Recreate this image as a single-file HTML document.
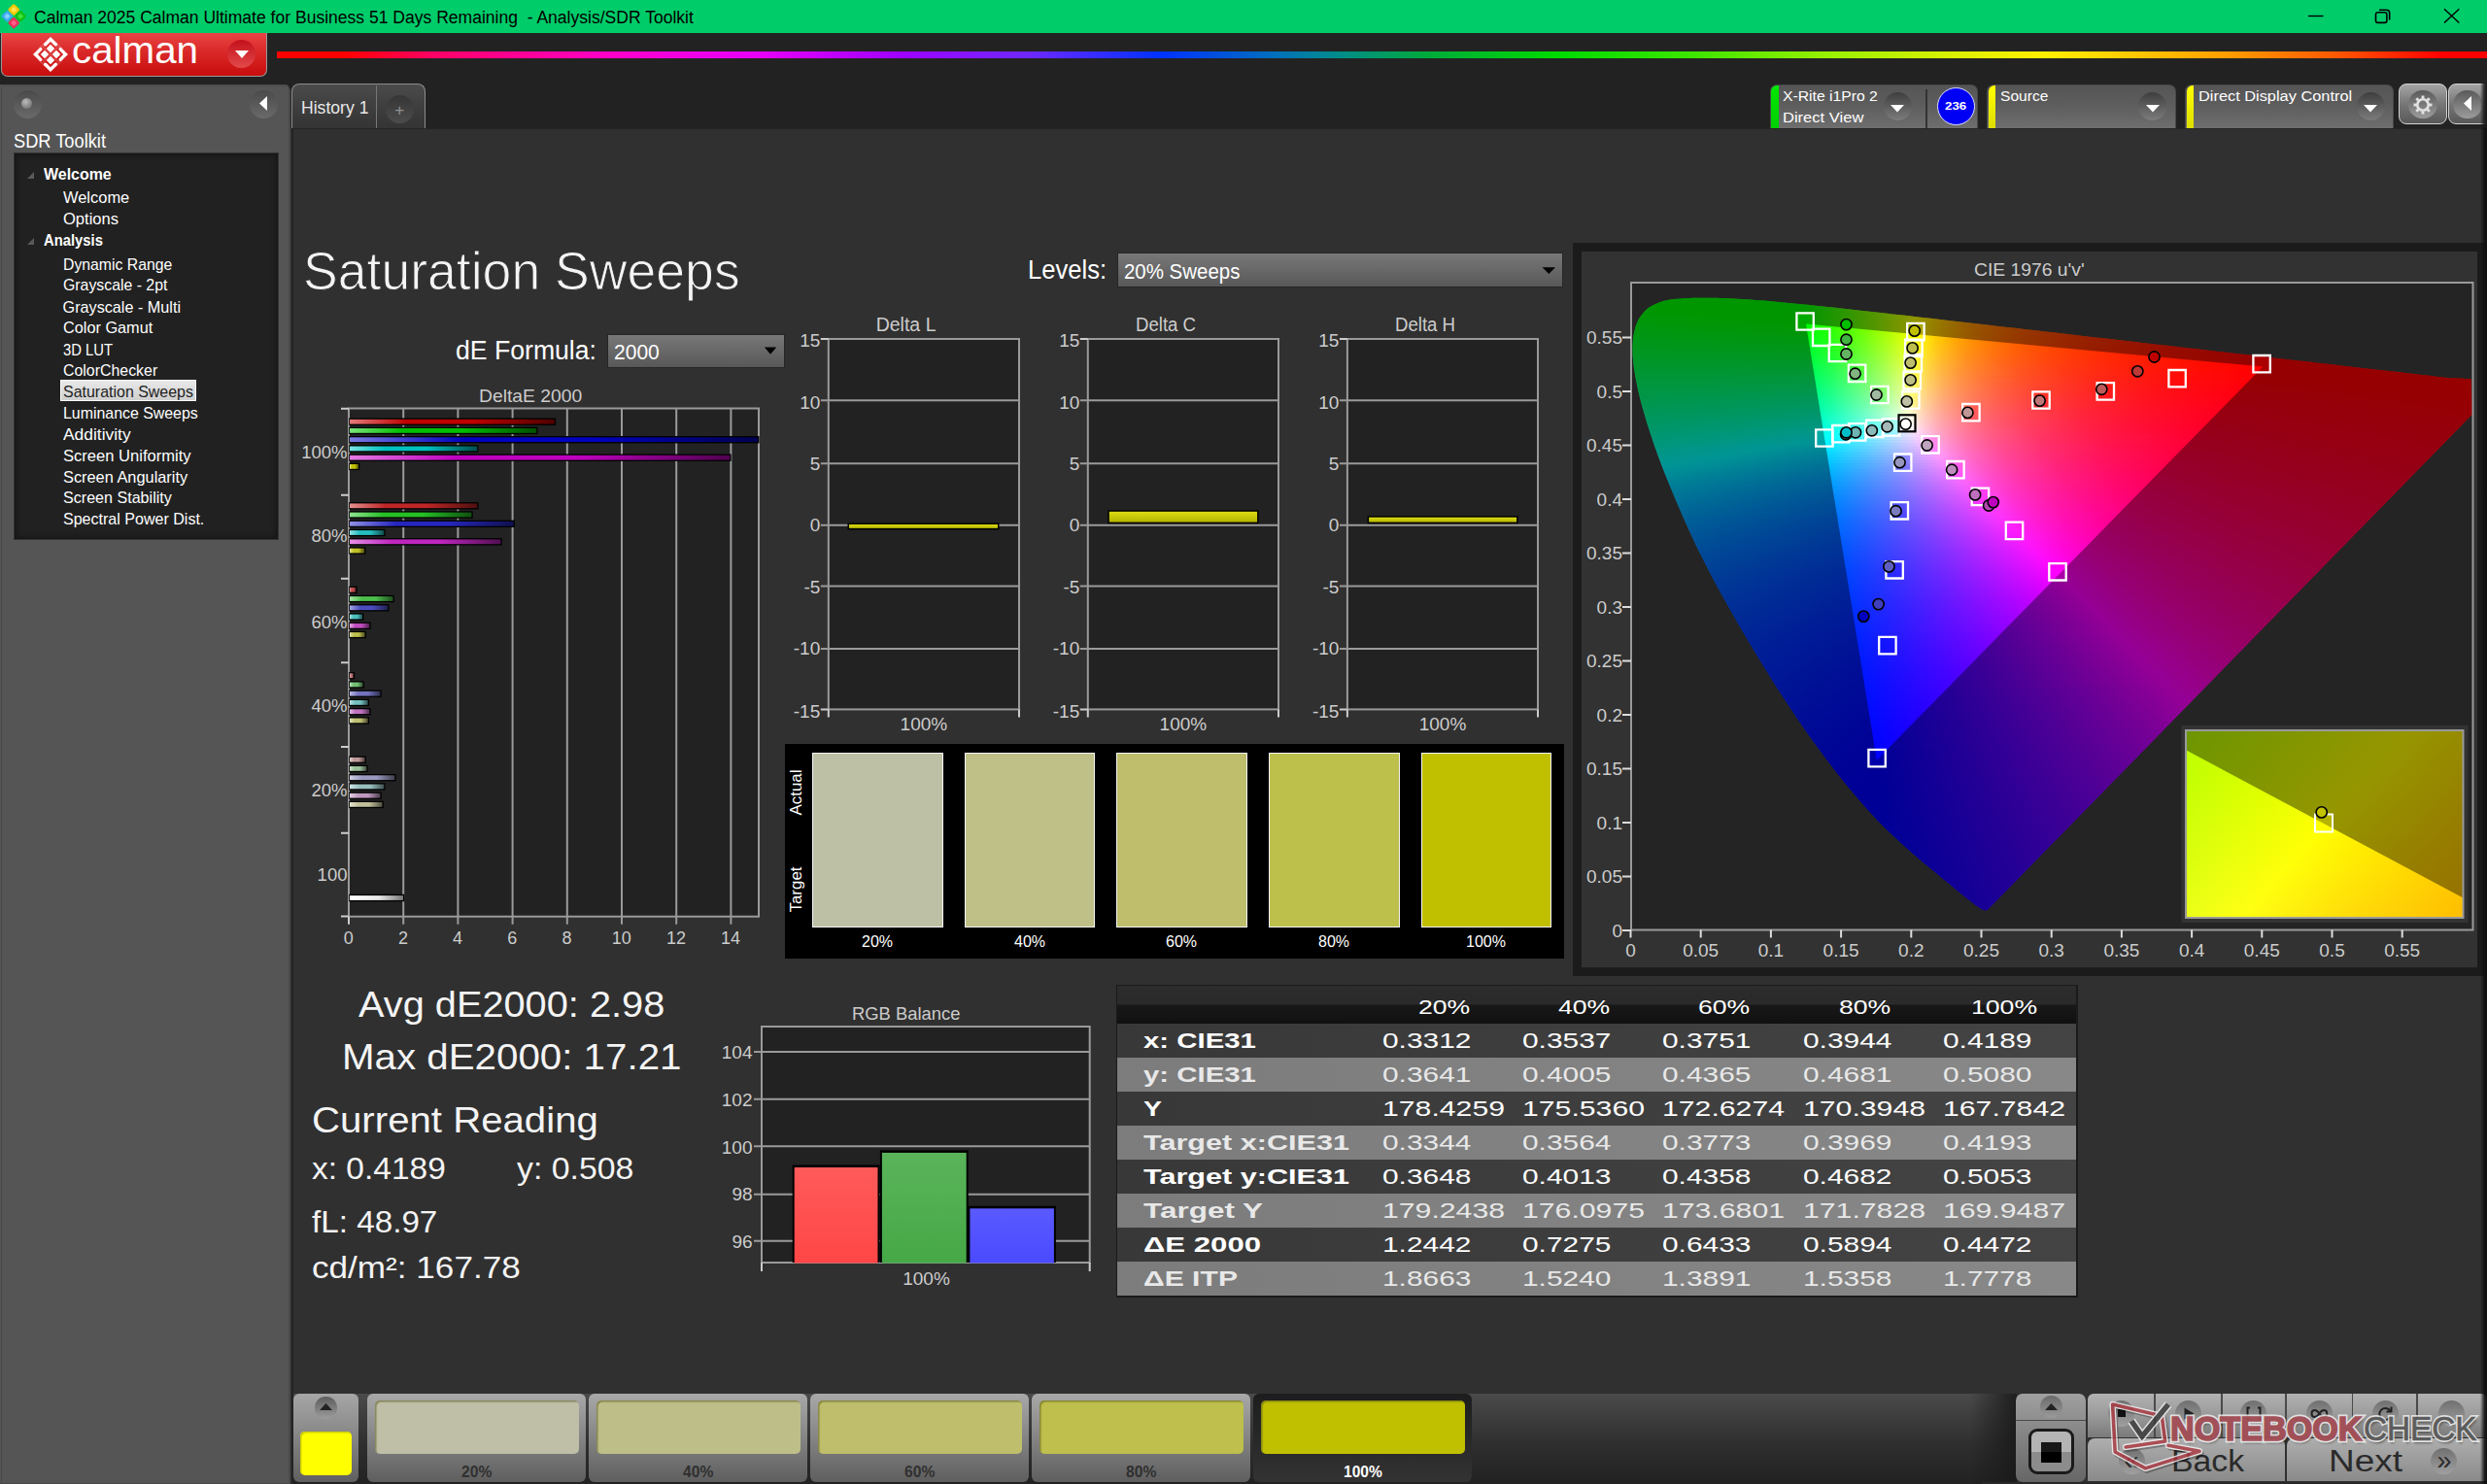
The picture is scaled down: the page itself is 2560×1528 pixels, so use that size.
<!DOCTYPE html>
<html><head><meta charset="utf-8"><title>Calman</title><style>html,body{margin:0;padding:0;background:#303030}
body{width:2560px;height:1528px;position:relative;overflow:hidden;font-family:"Liberation Sans",sans-serif}
.a{position:absolute;display:block}
.t{position:absolute;white-space:nowrap;line-height:1;transform-origin:0 0}
</style></head><body>
<div class="a" style="left:0px;top:0px;width:2560px;height:34px;background:#00cc6a;"></div>
<svg class="a" style="left:0;top:0" width="30" height="34" viewBox="0 0 30 34"><rect x="-4.5" y="-4.5" width="9" height="9" rx="1.6" transform="translate(7.4 16.7) rotate(45)" fill="#3aa8f0"/><rect x="-2.3" y="-2.3" width="4.6" height="4.6" rx="1" transform="translate(7.4 16.7) rotate(45)" fill="#7fd0ff"/><rect x="-4.5" y="-4.5" width="9" height="9" rx="1.6" transform="translate(21 16.7) rotate(45)" fill="#10c010"/><rect x="-2.3" y="-2.3" width="4.6" height="4.6" rx="1" transform="translate(21 16.7) rotate(45)" fill="#3ee03e"/><rect x="-4.5" y="-4.5" width="9" height="9" rx="1.6" transform="translate(14.2 10) rotate(45)" fill="#f8c800"/><rect x="-2.3" y="-2.3" width="4.6" height="4.6" rx="1" transform="translate(14.2 10) rotate(45)" fill="#ffe050"/><rect x="-4.5" y="-4.5" width="9" height="9" rx="1.6" transform="translate(14.2 23.6) rotate(45)" fill="#e8305e"/><rect x="-2.3" y="-2.3" width="4.6" height="4.6" rx="1" transform="translate(14.2 23.6) rotate(45)" fill="#ff6088"/></svg>
<span class="t" style="left:35.3px;top:8.5px;font-size:18px;color:#000;transform:scaleX(0.974);white-space:pre;">Calman 2025 Calman Ultimate for Business 51 Days Remaining  - Analysis/SDR Toolkit</span>
<svg class="a" style="left:2360px;top:0" width="200" height="34" viewBox="2360 0 200 34" fill="none" stroke="#000" stroke-width="1.4"><path d="M2376 16.5H2391.5"/><rect x="2445.5" y="12.8" width="11.4" height="10.6" rx="2.2" stroke-width="1.6"/><path d="M2449 10.2H2456.5a3.2 3.2 0 0 1 3.2 3.2V20.6" stroke-width="1.6"/><path d="M2516 9.2L2531.3 23.6M2531.3 9.2L2516 23.6"/></svg>
<div class="a" style="left:0px;top:34px;width:2560px;height:98px;background:#222;"></div>
<div class="a" style="left:1px;top:34px;width:274px;height:45px;background:linear-gradient(#e94444,#d92828 45%,#c80d0d);border:1px solid #999;border-top:none;border-radius:0 0 7px 7px;box-sizing:border-box;"></div>
<svg class="a" style="left:29.6px;top:34.5px" width="44" height="42" viewBox="-22 -21 44 42"><path d="M-5.4 -10.2L0 -15.6L5.4 -10.2M-5.4 10.2L0 15.6L5.4 10.2M-10.2 -5.4L-15.6 0L-10.2 5.4M10.2 -5.4L15.6 0L10.2 5.4" fill="none" stroke="#fff" stroke-width="3.4" stroke-linecap="round" stroke-linejoin="miter"/><path d="M0 -9.9L3.9 -6L0 -2.1L-3.9 -6Z" fill="#fff" stroke="#fff" stroke-width=".6" stroke-linejoin="round"/><path d="M0 2.1L3.9 6L0 9.9L-3.9 6Z" fill="#fff" stroke="#fff" stroke-width=".6" stroke-linejoin="round"/><path d="M-6 -3.9L-2.1 0L-6 3.9L-9.9 0Z" fill="#fff" stroke="#fff" stroke-width=".6" stroke-linejoin="round"/><path d="M6 -3.9L9.9 0L6 3.9L2.1 0Z" fill="#fff" stroke="#fff" stroke-width=".6" stroke-linejoin="round"/><path d="M-9 -9L9 9M-9 9L9 -9M-12 -6L-6 -12M6 -12L12 -6M-12 6L-6 12M6 12L12 6" stroke="#fff" stroke-opacity=".18" stroke-width="1.2"/></svg>
<span class="t" style="left:73.5px;top:32.2px;font-size:39.5px;color:#fff;transform:scaleX(1.021);">calman</span>
<div class="a" style="left:234.2px;top:40.6px;width:29px;height:29px;background:linear-gradient(#c4101c,#e24a4a);border-radius:50%;"></div>
<svg class="a" style="left:241.7px;top:51.6px" width="14" height="8"><path d="M0 0H14L7 8Z" fill="#fff"/></svg>
<div class="a" style="left:285px;top:52.6px;width:2275px;height:7.4px;background:linear-gradient(90deg,#f00 0,#f00 3%,#ff0064 7%,#ff00c8 15%,#e600ff 22%,#a000ff 28%,#6e28ff 34%,#0032ff 40%,#006ebe 45%,#008c8c 48%,#00aa3c 52%,#00dc00 58%,#3ce600 64%,#96f000 70%,#dcf000 76%,#fff000 80%,#ffa000 88%,#ff5a00 93%,#f00 98%);"></div>
<div class="a" style="left:0px;top:86.5px;width:299px;height:1441.5px;background:#555;border-radius:0 7px 0 0;border-right:2px solid #4a4a4a;box-sizing:border-box;"></div>
<div class="a" style="left:1.2px;top:88px;width:1px;height:1438.6px;background:#474747;"></div>
<div class="a" style="left:0px;top:1526.6px;width:299px;height:1.4px;background:#474747;"></div>
<div class="a" style="left:1px;top:86.5px;width:296px;height:3px;background:linear-gradient(#4a4a4a,#555);border-radius:0 7px 0 0;"></div>
<div class="a" style="left:13.8px;top:92.7px;width:29px;height:29px;background:linear-gradient(#4a4a4a,#6a6a6a);border-radius:50%;"></div>
<div class="a" style="left:22.3px;top:100.8px;width:11px;height:11px;background:radial-gradient(circle at 40% 35%,#bbb,#888 55%,#666);border-radius:50%;"></div>
<div class="a" style="left:256.9px;top:92.7px;width:29px;height:29px;background:linear-gradient(#4a4a4a,#6a6a6a);border-radius:50%;"></div>
<svg class="a" style="left:267px;top:99.3px" width="8" height="15"><path d="M8 0V15L0 7.5Z" fill="#fff"/></svg>
<span class="t" style="left:14.0px;top:134.6px;font-size:20px;color:#fff;transform:scaleX(0.912);">SDR Toolkit</span>
<div class="a" style="left:14px;top:157px;width:273px;height:399px;background:#212121;box-shadow:inset 0 0 5px 2px #161616;border:1px solid #333;box-sizing:border-box;"></div>
<svg class="a" style="left:28px;top:177.0px" width="7" height="7"><path d="M7 0V7H0Z" fill="#595959"/></svg>
<svg class="a" style="left:28px;top:245.2px" width="7" height="7"><path d="M7 0V7H0Z" fill="#595959"/></svg>
<div class="a" style="left:61.7px;top:391px;width:140.6px;height:22.2px;background:linear-gradient(#e8e8e8,#d0d0d0);border:1px solid #fff;box-sizing:border-box;"></div>
<span class="t" style="left:45.0px;top:171.2px;font-size:16.2px;color:#fff;font-weight:bold;transform:scaleX(0.985);">Welcome</span>
<span class="t" style="left:64.6px;top:195.2px;font-size:16.2px;color:#fff;transform:scaleX(1.016);">Welcome</span>
<span class="t" style="left:64.6px;top:217.1px;font-size:16.2px;color:#fff;transform:scaleX(1.021);">Options</span>
<span class="t" style="left:45.0px;top:239.3px;font-size:16.2px;color:#fff;font-weight:bold;transform:scaleX(0.914);">Analysis</span>
<span class="t" style="left:64.6px;top:263.7px;font-size:16.2px;color:#fff;transform:scaleX(0.975);">Dynamic Range</span>
<span class="t" style="left:64.6px;top:285.3px;font-size:16.2px;color:#fff;transform:scaleX(0.978);">Grayscale - 2pt</span>
<span class="t" style="left:64.6px;top:307.6px;font-size:16.2px;color:#fff;">Grayscale - Multi</span>
<span class="t" style="left:64.6px;top:329.2px;font-size:16.2px;color:#fff;transform:scaleX(1.005);">Color Gamut</span>
<span class="t" style="left:64.6px;top:351.5px;font-size:16.2px;color:#fff;transform:scaleX(0.916);">3D LUT</span>
<span class="t" style="left:64.6px;top:373.4px;font-size:16.2px;color:#fff;transform:scaleX(0.982);">ColorChecker</span>
<span class="t" style="left:64.6px;top:395.1px;font-size:16.2px;color:#222;transform:scaleX(0.986);">Saturation Sweeps</span>
<span class="t" style="left:64.6px;top:417.3px;font-size:16.2px;color:#fff;transform:scaleX(0.982);">Luminance Sweeps</span>
<span class="t" style="left:64.6px;top:439.0px;font-size:16.2px;color:#fff;transform:scaleX(1.075);">Additivity</span>
<span class="t" style="left:64.6px;top:461.2px;font-size:16.2px;color:#fff;transform:scaleX(1.023);">Screen Uniformity</span>
<span class="t" style="left:64.6px;top:482.6px;font-size:16.2px;color:#fff;transform:scaleX(1.010);">Screen Angularity</span>
<span class="t" style="left:64.6px;top:504.2px;font-size:16.2px;color:#fff;transform:scaleX(0.994);">Screen Stability</span>
<span class="t" style="left:64.6px;top:526.4px;font-size:16.2px;color:#fff;transform:scaleX(0.991);">Spectral Power Dist.</span>
<div class="a" style="left:300px;top:85.8px;width:138px;height:46.2px;background:linear-gradient(#4b4b4b,#3c3c3c 60%,#343434);border:1.5px solid #8c8c8c;border-bottom:none;border-radius:8px 8px 0 0;box-sizing:border-box;"></div>
<div class="a" style="left:386.7px;top:87.5px;width:1.5px;height:44.5px;background:#777;"></div>
<span class="t" style="left:309.6px;top:100.9px;font-size:19px;color:#e8e8e8;transform:scaleX(0.926);">History 1</span>
<div class="a" style="left:396.7px;top:97.7px;width:29px;height:29px;background:linear-gradient(#363636,#4c4c4c);border-radius:50%;"></div>
<span class="t" style="left:406.3px;top:104.8px;font-size:17px;color:#909090;">+</span>
<div class="a" style="left:300px;top:132px;width:2260px;height:1396px;background:#303030;"></div>
<div class="a" style="left:300px;top:131.5px;width:2260px;height:1.8px;background:#242424;"></div>
<div class="a" style="left:300px;top:132px;width:1.6px;height:1396px;background:#242424;"></div>
<div class="a" style="left:1821.5px;top:87px;width:214.3px;height:45px;background:linear-gradient(#555,#5c5c5c 40%,#6e6e6e);border-radius:7px 7px 0 0;border:1px solid #484848;border-bottom:none;box-sizing:border-box;"></div><div class="a" style="left:1823px;top:88px;width:7.5px;height:44px;background:linear-gradient(#00e800,#00d000);border-radius:6px 0 0 0;"></div><span class="t" style="left:1835.1px;top:90.8px;font-size:15.3px;color:#fff;transform:scaleX(1.027);">X-Rite i1Pro 2</span><span class="t" style="left:1835.1px;top:112.6px;font-size:15.3px;color:#fff;transform:scaleX(1.081);">Direct View</span><div class="a" style="left:1938.7px;top:94.5px;width:29px;height:29px;background:linear-gradient(#3e3e3e,#7c7c7c);border-radius:50%;"></div><svg class="a" style="left:1946.2px;top:107.5px" width="14" height="8"><path d="M0 0H14L7 7.6Z" fill="#fff"/></svg>
<div class="a" style="left:1981.8px;top:92px;width:2px;height:40px;background:#333;"></div>
<div class="a" style="left:1993.7px;top:89.5px;width:39px;height:39px;background:#0000f4;border-radius:50%;border:1.5px solid #e0e0ff;box-sizing:border-box;"></div>
<span class="t" style="left:2002.3px;top:103.5px;font-size:11.5px;color:#fff;font-weight:bold;transform:scaleX(1.157);">236</span>
<div class="a" style="left:2045.3px;top:87px;width:194.6px;height:45px;background:linear-gradient(#555,#5c5c5c 40%,#6e6e6e);border-radius:7px 7px 0 0;border:1px solid #484848;border-bottom:none;box-sizing:border-box;"></div><div class="a" style="left:2046.8px;top:88px;width:7.5px;height:44px;background:linear-gradient(#ffff00,#dede00);border-radius:6px 0 0 0;"></div><span class="t" style="left:2058.9px;top:90.8px;font-size:15.3px;color:#fff;transform:scaleX(1.019);">Source</span><div class="a" style="left:2201.2px;top:94.5px;width:29px;height:29px;background:linear-gradient(#3e3e3e,#7c7c7c);border-radius:50%;"></div><svg class="a" style="left:2208.7px;top:107.5px" width="14" height="8"><path d="M0 0H14L7 7.6Z" fill="#fff"/></svg>
<div class="a" style="left:2249px;top:87px;width:215.2px;height:45px;background:linear-gradient(#555,#5c5c5c 40%,#6e6e6e);border-radius:7px 7px 0 0;border:1px solid #484848;border-bottom:none;box-sizing:border-box;"></div><div class="a" style="left:2250.5px;top:88px;width:7.5px;height:44px;background:linear-gradient(#ffff00,#dede00);border-radius:6px 0 0 0;"></div><span class="t" style="left:2262.6px;top:90.8px;font-size:15.3px;color:#fff;transform:scaleX(1.069);">Direct Display Control</span><div class="a" style="left:2425.5px;top:94.5px;width:29px;height:29px;background:linear-gradient(#3e3e3e,#7c7c7c);border-radius:50%;"></div><svg class="a" style="left:2433px;top:107.5px" width="14" height="8"><path d="M0 0H14L7 7.6Z" fill="#fff"/></svg>
<div class="a" style="left:2468.8px;top:86.4px;width:50px;height:41.9px;background:linear-gradient(#a4a4a4,#777 50%,#585858);border:1.7px solid #d2d2d2;border-radius:8px;box-sizing:border-box;"></div>
<div class="a" style="left:2479.4px;top:92.8px;width:29.4px;height:29.4px;background:linear-gradient(#5a5a5a,#9c9c9c);border-radius:50%;"></div>
<svg class="a" style="left:2484.1px;top:97.5px" width="20" height="20" viewBox="-10 -10 20 20"><g fill="none" stroke="#e2e2e2"><circle r="5.75" stroke-width="2.7"/><g stroke-width="2.9"><path d="M0 -6.6V-9.5" transform="rotate(0)"/><path d="M0 -6.6V-9.5" transform="rotate(45)"/><path d="M0 -6.6V-9.5" transform="rotate(90)"/><path d="M0 -6.6V-9.5" transform="rotate(135)"/><path d="M0 -6.6V-9.5" transform="rotate(180)"/><path d="M0 -6.6V-9.5" transform="rotate(225)"/><path d="M0 -6.6V-9.5" transform="rotate(270)"/><path d="M0 -6.6V-9.5" transform="rotate(315)"/></g></g></svg>
<div class="a" style="left:2520px;top:86.4px;width:50px;height:41.9px;background:linear-gradient(#a4a4a4,#777 50%,#585858);border:1.7px solid #d2d2d2;border-radius:8px;box-sizing:border-box;"></div>
<div class="a" style="left:2525.3px;top:92.8px;width:29.4px;height:29.4px;background:linear-gradient(#5a5a5a,#9c9c9c);border-radius:50%;"></div>
<svg class="a" style="left:2536.2px;top:99px" width="8" height="15"><path d="M8 0V15L0 7.5Z" fill="#fff"/></svg>
<div class="a" style="left:2552.5px;top:85px;width:7.5px;height:47px;background:linear-gradient(90deg,rgba(24,24,24,0),rgba(24,24,24,.8) 55%,#161616);"></div>
<div class="a" style="left:1149.5px;top:260px;width:459.5px;height:35.5px;background:linear-gradient(#787878,#585858);border:1.5px solid #262626;box-sizing:border-box;"></div>
<div class="a" style="left:625px;top:343.5px;width:182.5px;height:35px;background:linear-gradient(#787878,#585858);border:1.5px solid #262626;box-sizing:border-box;"></div>
<svg class="a" style="left:0;top:0" width="2560" height="1528" viewBox="0 0 2560 1528"><defs><linearGradient id="b00"><stop offset="0" stop-color="#e47b7b"/><stop offset=".28" stop-color="#bf0000"/><stop offset=".6" stop-color="#bf0000"/><stop offset="1" stop-color="#500000"/></linearGradient><linearGradient id="b01"><stop offset="0" stop-color="#7be47b"/><stop offset=".28" stop-color="#00bf00"/><stop offset=".6" stop-color="#00bf00"/><stop offset="1" stop-color="#005000"/></linearGradient><linearGradient id="b02"><stop offset="0" stop-color="#7b7be4"/><stop offset=".28" stop-color="#0000bf"/><stop offset=".6" stop-color="#0000bf"/><stop offset="1" stop-color="#000050"/></linearGradient><linearGradient id="b03"><stop offset="0" stop-color="#7be4e4"/><stop offset=".28" stop-color="#00bfbf"/><stop offset=".6" stop-color="#00bfbf"/><stop offset="1" stop-color="#005050"/></linearGradient><linearGradient id="b04"><stop offset="0" stop-color="#e47be4"/><stop offset=".28" stop-color="#bf00bf"/><stop offset=".6" stop-color="#bf00bf"/><stop offset="1" stop-color="#500050"/></linearGradient><linearGradient id="b05"><stop offset="0" stop-color="#e4e47b"/><stop offset=".28" stop-color="#bfbf00"/><stop offset=".6" stop-color="#bfbf00"/><stop offset="1" stop-color="#505000"/></linearGradient><linearGradient id="b10"><stop offset="0" stop-color="#e49090"/><stop offset=".28" stop-color="#bf2626"/><stop offset=".6" stop-color="#bf2626"/><stop offset="1" stop-color="#501010"/></linearGradient><linearGradient id="b11"><stop offset="0" stop-color="#90e490"/><stop offset=".28" stop-color="#26bf26"/><stop offset=".6" stop-color="#26bf26"/><stop offset="1" stop-color="#105010"/></linearGradient><linearGradient id="b12"><stop offset="0" stop-color="#9090e4"/><stop offset=".28" stop-color="#2626bf"/><stop offset=".6" stop-color="#2626bf"/><stop offset="1" stop-color="#101050"/></linearGradient><linearGradient id="b13"><stop offset="0" stop-color="#90e4e4"/><stop offset=".28" stop-color="#26bfbf"/><stop offset=".6" stop-color="#26bfbf"/><stop offset="1" stop-color="#105050"/></linearGradient><linearGradient id="b14"><stop offset="0" stop-color="#e490e4"/><stop offset=".28" stop-color="#bf26bf"/><stop offset=".6" stop-color="#bf26bf"/><stop offset="1" stop-color="#501050"/></linearGradient><linearGradient id="b15"><stop offset="0" stop-color="#e4e490"/><stop offset=".28" stop-color="#bfbf26"/><stop offset=".6" stop-color="#bfbf26"/><stop offset="1" stop-color="#505010"/></linearGradient><linearGradient id="b20"><stop offset="0" stop-color="#e4a5a5"/><stop offset=".28" stop-color="#bf4c4c"/><stop offset=".6" stop-color="#bf4c4c"/><stop offset="1" stop-color="#502020"/></linearGradient><linearGradient id="b21"><stop offset="0" stop-color="#a5e4a5"/><stop offset=".28" stop-color="#4cbf4c"/><stop offset=".6" stop-color="#4cbf4c"/><stop offset="1" stop-color="#205020"/></linearGradient><linearGradient id="b22"><stop offset="0" stop-color="#a5a5e4"/><stop offset=".28" stop-color="#4c4cbf"/><stop offset=".6" stop-color="#4c4cbf"/><stop offset="1" stop-color="#202050"/></linearGradient><linearGradient id="b23"><stop offset="0" stop-color="#a5e4e4"/><stop offset=".28" stop-color="#4cbfbf"/><stop offset=".6" stop-color="#4cbfbf"/><stop offset="1" stop-color="#205050"/></linearGradient><linearGradient id="b24"><stop offset="0" stop-color="#e4a5e4"/><stop offset=".28" stop-color="#bf4cbf"/><stop offset=".6" stop-color="#bf4cbf"/><stop offset="1" stop-color="#502050"/></linearGradient><linearGradient id="b25"><stop offset="0" stop-color="#e4e4a5"/><stop offset=".28" stop-color="#bfbf4c"/><stop offset=".6" stop-color="#bfbf4c"/><stop offset="1" stop-color="#505020"/></linearGradient><linearGradient id="b30"><stop offset="0" stop-color="#e4baba"/><stop offset=".28" stop-color="#bf7373"/><stop offset=".6" stop-color="#bf7373"/><stop offset="1" stop-color="#503030"/></linearGradient><linearGradient id="b31"><stop offset="0" stop-color="#bae4ba"/><stop offset=".28" stop-color="#73bf73"/><stop offset=".6" stop-color="#73bf73"/><stop offset="1" stop-color="#305030"/></linearGradient><linearGradient id="b32"><stop offset="0" stop-color="#babae4"/><stop offset=".28" stop-color="#7373bf"/><stop offset=".6" stop-color="#7373bf"/><stop offset="1" stop-color="#303050"/></linearGradient><linearGradient id="b33"><stop offset="0" stop-color="#bae4e4"/><stop offset=".28" stop-color="#73bfbf"/><stop offset=".6" stop-color="#73bfbf"/><stop offset="1" stop-color="#305050"/></linearGradient><linearGradient id="b34"><stop offset="0" stop-color="#e4bae4"/><stop offset=".28" stop-color="#bf73bf"/><stop offset=".6" stop-color="#bf73bf"/><stop offset="1" stop-color="#503050"/></linearGradient><linearGradient id="b35"><stop offset="0" stop-color="#e4e4ba"/><stop offset=".28" stop-color="#bfbf73"/><stop offset=".6" stop-color="#bfbf73"/><stop offset="1" stop-color="#505030"/></linearGradient><linearGradient id="b40"><stop offset="0" stop-color="#e4cfcf"/><stop offset=".28" stop-color="#bf9999"/><stop offset=".6" stop-color="#bf9999"/><stop offset="1" stop-color="#504040"/></linearGradient><linearGradient id="b41"><stop offset="0" stop-color="#cfe4cf"/><stop offset=".28" stop-color="#99bf99"/><stop offset=".6" stop-color="#99bf99"/><stop offset="1" stop-color="#405040"/></linearGradient><linearGradient id="b42"><stop offset="0" stop-color="#cfcfe4"/><stop offset=".28" stop-color="#9999bf"/><stop offset=".6" stop-color="#9999bf"/><stop offset="1" stop-color="#404050"/></linearGradient><linearGradient id="b43"><stop offset="0" stop-color="#cfe4e4"/><stop offset=".28" stop-color="#99bfbf"/><stop offset=".6" stop-color="#99bfbf"/><stop offset="1" stop-color="#405050"/></linearGradient><linearGradient id="b44"><stop offset="0" stop-color="#e4cfe4"/><stop offset=".28" stop-color="#bf99bf"/><stop offset=".6" stop-color="#bf99bf"/><stop offset="1" stop-color="#504050"/></linearGradient><linearGradient id="b45"><stop offset="0" stop-color="#e4e4cf"/><stop offset=".28" stop-color="#bfbf99"/><stop offset=".6" stop-color="#bfbf99"/><stop offset="1" stop-color="#505040"/></linearGradient><linearGradient id="bw"><stop offset="0" stop-color="#fff"/><stop offset=".55" stop-color="#e8e8e8"/><stop offset="1" stop-color="#777"/></linearGradient><linearGradient id="yb" x1="0" y1="0" x2="0" y2="1"><stop offset="0" stop-color="#dcdc14"/><stop offset="1" stop-color="#b4b400"/></linearGradient><linearGradient id="rgff5a" x1="0" y1="0" x2="0" y2="1"><stop offset="0" stop-color="#ff5a5a"/><stop offset="1" stop-color="#ff4646"/></linearGradient><linearGradient id="rg5ab4" x1="0" y1="0" x2="0" y2="1"><stop offset="0" stop-color="#5ab45a"/><stop offset="1" stop-color="#46a846"/></linearGradient><linearGradient id="rg5a5a" x1="0" y1="0" x2="0" y2="1"><stop offset="0" stop-color="#5a5aff"/><stop offset="1" stop-color="#4a4aff"/></linearGradient></defs><path d="M1587.6 275.2H1601L1594.3 282Z" fill="#000"/><path d="M786.9 357.4H799.2L793.1 364.8Z" fill="#000"/><rect x="359" y="420.5" width="422" height="523.2" fill="#222"/><path d="M415.2 420.5V951.7M471.4 420.5V951.7M527.6 420.5V951.7M583.8 420.5V951.7M640.0 420.5V951.7M696.2 420.5V951.7M752.4 420.5V951.7" stroke="#9a9a9a" stroke-width="2" fill="none"/><rect x="359" y="420.5" width="422" height="523.2" fill="none" stroke="#9a9a9a" stroke-width="2"/><path d="M359 943.7V951.7" stroke="#ccc" stroke-width="2"/><path d="M351 420.8H359M351 509.8H359M351 595.8H359M351 682.3H359M351 769.1H359M351 857.7H359M351 943.4H359" stroke="#ccc" stroke-width="2" fill="none"/><rect x="359.2" y="430.5" width="212.9" height="7.4" fill="#000"/><rect x="360" y="431.8" width="210.8" height="4.8" fill="url(#b00)"/><rect x="359.2" y="439.7" width="194.3" height="7.4" fill="#000"/><rect x="360" y="441.0" width="192.2" height="4.8" fill="url(#b01)"/><rect x="359.2" y="449.0" width="422.3" height="7.4" fill="#000"/><rect x="360" y="450.3" width="420.2" height="4.8" fill="url(#b02)"/><rect x="359.2" y="458.2" width="133.3" height="7.4" fill="#000"/><rect x="360" y="459.5" width="131.2" height="4.8" fill="url(#b03)"/><rect x="359.2" y="467.5" width="393.4" height="7.4" fill="#000"/><rect x="360" y="468.8" width="391.3" height="4.8" fill="url(#b04)"/><rect x="359.2" y="476.7" width="11.1" height="7.4" fill="#000"/><rect x="360" y="478.0" width="9.0" height="4.8" fill="url(#b05)"/><rect x="359.2" y="517.1" width="133.3" height="7.4" fill="#000"/><rect x="360" y="518.4" width="131.2" height="4.8" fill="url(#b10)"/><rect x="359.2" y="526.3" width="127.5" height="7.4" fill="#000"/><rect x="360" y="527.6" width="125.4" height="4.8" fill="url(#b11)"/><rect x="359.2" y="535.6" width="170.6" height="7.4" fill="#000"/><rect x="360" y="536.9" width="168.5" height="4.8" fill="url(#b12)"/><rect x="359.2" y="544.8" width="37.4" height="7.4" fill="#000"/><rect x="360" y="546.1" width="35.3" height="4.8" fill="url(#b13)"/><rect x="359.2" y="554.1" width="157.5" height="7.4" fill="#000"/><rect x="360" y="555.4" width="155.4" height="4.8" fill="url(#b14)"/><rect x="359.2" y="563.3" width="17.2" height="7.4" fill="#000"/><rect x="360" y="564.6" width="15.1" height="4.8" fill="url(#b15)"/><rect x="359.2" y="603.6" width="8.5" height="7.4" fill="#000"/><rect x="360" y="604.9" width="6.4" height="4.8" fill="url(#b20)"/><rect x="359.2" y="612.8" width="46.6" height="7.4" fill="#000"/><rect x="360" y="614.1" width="44.5" height="4.8" fill="url(#b21)"/><rect x="359.2" y="622.1" width="41.3" height="7.4" fill="#000"/><rect x="360" y="623.4" width="39.2" height="4.8" fill="url(#b22)"/><rect x="359.2" y="631.3" width="15.1" height="7.4" fill="#000"/><rect x="360" y="632.6" width="13.0" height="4.8" fill="url(#b23)"/><rect x="359.2" y="640.6" width="22.4" height="7.4" fill="#000"/><rect x="360" y="641.9" width="20.3" height="4.8" fill="url(#b24)"/><rect x="359.2" y="649.8" width="17.7" height="7.4" fill="#000"/><rect x="360" y="651.1" width="15.6" height="4.8" fill="url(#b25)"/><rect x="359.2" y="692.0" width="5.9" height="7.4" fill="#000"/><rect x="360" y="693.3" width="3.8" height="4.8" fill="url(#b30)"/><rect x="359.2" y="701.2" width="15.6" height="7.4" fill="#000"/><rect x="360" y="702.5" width="13.5" height="4.8" fill="url(#b31)"/><rect x="359.2" y="710.5" width="33.5" height="7.4" fill="#000"/><rect x="360" y="711.8" width="31.4" height="4.8" fill="url(#b32)"/><rect x="359.2" y="719.7" width="20.8" height="7.4" fill="#000"/><rect x="360" y="721.0" width="18.7" height="4.8" fill="url(#b33)"/><rect x="359.2" y="729.0" width="22.4" height="7.4" fill="#000"/><rect x="360" y="730.3" width="20.3" height="4.8" fill="url(#b34)"/><rect x="359.2" y="738.2" width="20.8" height="7.4" fill="#000"/><rect x="360" y="739.5" width="18.7" height="4.8" fill="url(#b35)"/><rect x="359.2" y="778.5" width="17.7" height="7.4" fill="#000"/><rect x="360" y="779.8" width="15.6" height="4.8" fill="url(#b40)"/><rect x="359.2" y="787.7" width="19.5" height="7.4" fill="#000"/><rect x="360" y="789.0" width="17.4" height="4.8" fill="url(#b41)"/><rect x="359.2" y="797.0" width="48.4" height="7.4" fill="#000"/><rect x="360" y="798.3" width="46.3" height="4.8" fill="url(#b42)"/><rect x="359.2" y="806.2" width="37.4" height="7.4" fill="#000"/><rect x="360" y="807.5" width="35.3" height="4.8" fill="url(#b43)"/><rect x="359.2" y="815.5" width="33.5" height="7.4" fill="#000"/><rect x="360" y="816.8" width="31.4" height="4.8" fill="url(#b44)"/><rect x="359.2" y="824.7" width="35.6" height="7.4" fill="#000"/><rect x="360" y="826.0" width="33.5" height="4.8" fill="url(#b45)"/><rect x="359.2" y="920.8" width="57.1" height="7.4" fill="#000"/><rect x="360" y="922.1" width="55.0" height="4.8" fill="url(#bw)"/><rect x="852.8" y="349" width="196.2" height="381.4" fill="#222"/><path d="M844.8 412.3H1049M844.8 477.2H1049M844.8 540.7H1049M844.8 603.6H1049M844.8 668H1049" stroke="#9a9a9a" stroke-width="2" fill="none"/><rect x="852.8" y="349" width="196.2" height="381.4" fill="none" stroke="#9a9a9a" stroke-width="2"/><path d="M844.8 349H852.8M844.8 730.4H852.8M852.8 730.4V738.4M1049 730.4V738.4" stroke="#ccc" stroke-width="2" fill="none"/><rect x="872.5" y="538.5" width="156.0" height="6.9" fill="#000"/><rect x="874.0" y="540.0" width="153.0" height="3.9" fill="url(#yb)"/><rect x="1119.8" y="349" width="196.2" height="381.4" fill="#222"/><path d="M1111.8 412.3H1316M1111.8 477.2H1316M1111.8 540.7H1316M1111.8 603.6H1316M1111.8 668H1316" stroke="#9a9a9a" stroke-width="2" fill="none"/><rect x="1119.8" y="349" width="196.2" height="381.4" fill="none" stroke="#9a9a9a" stroke-width="2"/><path d="M1111.8 349H1119.8M1111.8 730.4H1119.8M1119.8 730.4V738.4M1316 730.4V738.4" stroke="#ccc" stroke-width="2" fill="none"/><rect x="1140.3" y="525.3" width="155.3" height="13.8" fill="#000"/><rect x="1141.8" y="526.8" width="152.3" height="10.8" fill="url(#yb)"/><rect x="1386.9" y="349" width="196.1" height="381.4" fill="#222"/><path d="M1378.9 412.3H1583M1378.9 477.2H1583M1378.9 540.7H1583M1378.9 603.6H1583M1378.9 668H1583" stroke="#9a9a9a" stroke-width="2" fill="none"/><rect x="1386.9" y="349" width="196.1" height="381.4" fill="none" stroke="#9a9a9a" stroke-width="2"/><path d="M1378.9 349H1386.9M1378.9 730.4H1386.9M1386.9 730.4V738.4M1583 730.4V738.4" stroke="#ccc" stroke-width="2" fill="none"/><rect x="1407.6" y="531.2" width="155.0" height="7.9" fill="#000"/><rect x="1409.1" y="532.7" width="152.0" height="4.9" fill="url(#yb)"/><rect x="784" y="1057" width="337.7" height="243" fill="#222"/><path d="M776 1082.9H1121.7M776 1131.8H1121.7M776 1180.3H1121.7M776 1229.8H1121.7M776 1277.7H1121.7" stroke="#9a9a9a" stroke-width="2" fill="none"/><rect x="784" y="1057" width="337.7" height="243" fill="none" stroke="#9a9a9a" stroke-width="2"/><path d="M784 1300V1309M1121.7 1300V1309" stroke="#ccc" stroke-width="2" fill="none"/><rect x="815.7" y="1199.5" width="89.8" height="100.5" fill="#000"/><rect x="817.7" y="1202" width="85.8" height="98.5" fill="url(#rgff5a)"/><rect x="905.9" y="1184.4" width="90.8" height="115.6" fill="#000"/><rect x="907.9" y="1186.9" width="86.8" height="113.6" fill="url(#rg5ab4)"/><rect x="996.4" y="1241.8" width="90.5" height="58.2" fill="#000"/><rect x="998.4" y="1244.3" width="86.5" height="56.2" fill="url(#rg5a5a)"/></svg>
<span class="t" style="left:311.8px;top:251.7px;font-size:55px;color:#f4f4f4;transform:scaleX(0.974);-webkit-text-stroke:1px #303030;">Saturation Sweeps</span>
<span class="t" style="left:1058.0px;top:265.1px;font-size:27px;color:#fff;transform:scaleX(0.947);">Levels:</span>
<span class="t" style="left:1157.0px;top:269.0px;font-size:22.5px;color:#fff;transform:scaleX(0.909);">20% Sweeps</span>
<span class="t" style="left:469.0px;top:348.1px;font-size:27px;color:#fff;transform:scaleX(0.986);">dE Formula:</span>
<span class="t" style="left:631.6px;top:352.0px;font-size:22.5px;color:#fff;transform:scaleX(0.935);">2000</span>
<span class="t" style="left:492.6px;top:397.8px;font-size:19px;color:#ccc;transform:scaleX(1.017);">DeltaE 2000</span>
<span class="t" style="left:353.7px;top:956.6px;font-size:18px;color:#ccc;">0</span>
<span class="t" style="left:409.9px;top:956.6px;font-size:18px;color:#ccc;">2</span>
<span class="t" style="left:466.1px;top:956.6px;font-size:18px;color:#ccc;">4</span>
<span class="t" style="left:522.3px;top:956.6px;font-size:18px;color:#ccc;">6</span>
<span class="t" style="left:578.5px;top:956.6px;font-size:18px;color:#ccc;">8</span>
<span class="t" style="left:629.7px;top:956.6px;font-size:18px;color:#ccc;">10</span>
<span class="t" style="left:685.9px;top:956.6px;font-size:18px;color:#ccc;">12</span>
<span class="t" style="left:742.1px;top:956.6px;font-size:18px;color:#ccc;">14</span>
<span class="t" style="left:310.2px;top:456.5px;font-size:18.5px;color:#ccc;">100%</span>
<span class="t" style="left:320.5px;top:542.7px;font-size:18.5px;color:#ccc;">80%</span>
<span class="t" style="left:320.5px;top:631.6px;font-size:18.5px;color:#ccc;">60%</span>
<span class="t" style="left:320.5px;top:718.3px;font-size:18.5px;color:#ccc;">40%</span>
<span class="t" style="left:320.5px;top:805.0px;font-size:18.5px;color:#ccc;">20%</span>
<span class="t" style="left:326.6px;top:892.3px;font-size:18.5px;color:#ccc;">100</span>
<span class="t" style="left:901.7px;top:324.8px;font-size:19.5px;color:#ccc;">Delta L</span>
<span class="t" style="left:823.2px;top:340.7px;font-size:19px;color:#ccc;">15</span>
<span class="t" style="left:823.2px;top:405.0px;font-size:19px;color:#ccc;">10</span>
<span class="t" style="left:833.7px;top:467.7px;font-size:19px;color:#ccc;">5</span>
<span class="t" style="left:833.7px;top:531.3px;font-size:19px;color:#ccc;">0</span>
<span class="t" style="left:827.4px;top:594.6px;font-size:19px;color:#ccc;">-5</span>
<span class="t" style="left:816.8px;top:658.2px;font-size:19px;color:#ccc;">-10</span>
<span class="t" style="left:816.8px;top:722.5px;font-size:19px;color:#ccc;">-15</span>
<span class="t" style="left:926.6px;top:735.7px;font-size:19px;color:#ccc;">100%</span>
<span class="t" style="left:1169.0px;top:324.8px;font-size:19.5px;color:#ccc;transform:scaleX(0.954);">Delta C</span>
<span class="t" style="left:1090.2px;top:340.7px;font-size:19px;color:#ccc;">15</span>
<span class="t" style="left:1090.2px;top:405.0px;font-size:19px;color:#ccc;">10</span>
<span class="t" style="left:1100.7px;top:467.7px;font-size:19px;color:#ccc;">5</span>
<span class="t" style="left:1100.7px;top:531.3px;font-size:19px;color:#ccc;">0</span>
<span class="t" style="left:1094.4px;top:594.6px;font-size:19px;color:#ccc;">-5</span>
<span class="t" style="left:1083.8px;top:658.2px;font-size:19px;color:#ccc;">-10</span>
<span class="t" style="left:1083.8px;top:722.5px;font-size:19px;color:#ccc;">-15</span>
<span class="t" style="left:1193.6px;top:735.7px;font-size:19px;color:#ccc;">100%</span>
<span class="t" style="left:1435.8px;top:324.8px;font-size:19.5px;color:#ccc;transform:scaleX(0.954);">Delta H</span>
<span class="t" style="left:1357.3px;top:340.7px;font-size:19px;color:#ccc;">15</span>
<span class="t" style="left:1357.3px;top:405.0px;font-size:19px;color:#ccc;">10</span>
<span class="t" style="left:1367.8px;top:467.7px;font-size:19px;color:#ccc;">5</span>
<span class="t" style="left:1367.8px;top:531.3px;font-size:19px;color:#ccc;">0</span>
<span class="t" style="left:1361.5px;top:594.6px;font-size:19px;color:#ccc;">-5</span>
<span class="t" style="left:1350.9px;top:658.2px;font-size:19px;color:#ccc;">-10</span>
<span class="t" style="left:1350.9px;top:722.5px;font-size:19px;color:#ccc;">-15</span>
<span class="t" style="left:1460.7px;top:735.7px;font-size:19px;color:#ccc;">100%</span>
<div class="a" style="left:808px;top:766px;width:1601.5px;height:220.5px;background:#000;width:801.5px;"></div>
<div class="a" style="left:836.3px;top:775.4px;width:134.5px;height:179.8px;background:#bec0a6;border:1.5px solid #f4f4f4;box-sizing:border-box;"></div>
<span class="t" style="left:887.2px;top:961.2px;font-size:16.5px;color:#fff;transform:scaleX(0.970);">20%</span>
<div class="a" style="left:993.2px;top:775.4px;width:133.9px;height:179.8px;background:#bec088;border:1.5px solid #f4f4f4;box-sizing:border-box;"></div>
<span class="t" style="left:1043.8px;top:961.2px;font-size:16.5px;color:#fff;transform:scaleX(0.970);">40%</span>
<div class="a" style="left:1149.2px;top:775.4px;width:134.8px;height:179.8px;background:#bebe6c;border:1.5px solid #f4f4f4;box-sizing:border-box;"></div>
<span class="t" style="left:1200.3px;top:961.2px;font-size:16.5px;color:#fff;transform:scaleX(0.970);">60%</span>
<div class="a" style="left:1306.1px;top:775.4px;width:134.9px;height:179.8px;background:#bec04c;border:1.5px solid #f4f4f4;box-sizing:border-box;"></div>
<span class="t" style="left:1357.2px;top:961.2px;font-size:16.5px;color:#fff;transform:scaleX(0.970);">80%</span>
<div class="a" style="left:1463px;top:775.4px;width:133.9px;height:179.8px;background:#c0c000;border:1.5px solid #f4f4f4;box-sizing:border-box;"></div>
<span class="t" style="left:1509.2px;top:961.2px;font-size:16.5px;color:#fff;transform:scaleX(0.970);">100%</span>
<span class="t" style="left:798.2px;top:807.5px;font-size:16px;color:#fff;width:44.5px;transform-origin:50% 50%;transform:rotate(-90deg) scaleX(1.06)">Actual</span>
<span class="t" style="left:798.2px;top:908.3px;font-size:16px;color:#fff;width:44.5px;transform-origin:50% 50%;transform:rotate(-90deg) scaleX(1.06)">Target</span>
<span class="t" style="left:876.5px;top:1034.0px;font-size:19px;color:#ccc;transform:scaleX(0.969);">RGB Balance</span>
<span class="t" style="left:742.8px;top:1073.5px;font-size:19px;color:#ccc;">104</span>
<span class="t" style="left:742.8px;top:1122.5px;font-size:19px;color:#ccc;">102</span>
<span class="t" style="left:742.8px;top:1171.5px;font-size:19px;color:#ccc;">100</span>
<span class="t" style="left:753.4px;top:1220.4px;font-size:19px;color:#ccc;">98</span>
<span class="t" style="left:753.4px;top:1268.7px;font-size:19px;color:#ccc;">96</span>
<span class="t" style="left:929.2px;top:1306.6px;font-size:19px;color:#ccc;">100%</span>
<div class="a" style="left:1619px;top:249.5px;width:941px;height:755.5px;background:#1b1b1b;"></div>
<div class="a" style="left:1628px;top:259.2px;width:921.6px;height:736.6px;background:#323232;"></div>
<svg class="a" style="left:0;top:0" width="2560" height="1528" viewBox="0 0 2560 1528"><rect x="1679" y="291" width="866.5" height="666.5" fill="#242424"/><defs><linearGradient id="c0"><stop offset="0" stop-color="#0f0"/><stop offset="1" stop-color="#0f0"/></linearGradient><linearGradient id="c1"><stop offset="0" stop-color="#0f0"/><stop offset="1" stop-color="#0f0"/></linearGradient><linearGradient id="c2"><stop offset="0" stop-color="#0f0"/><stop offset="0.875" stop-color="#0f0"/><stop offset="0.9148" stop-color="#06ff00"/><stop offset="1" stop-color="#1fff00"/></linearGradient><linearGradient id="c3"><stop offset="0" stop-color="#00ff01"/><stop offset="0.7703" stop-color="#01ff00"/><stop offset="0.823" stop-color="#0fff00"/><stop offset="1" stop-color="#53ff00"/></linearGradient><linearGradient id="c4"><stop offset="0" stop-color="#00ff03"/><stop offset="0.6946" stop-color="#01ff00"/><stop offset="0.7238" stop-color="#0bff00"/><stop offset="0.8326" stop-color="#39ff00"/><stop offset="1" stop-color="#8cff00"/></linearGradient><linearGradient id="c5"><stop offset="0" stop-color="#00ff06"/><stop offset="0.2082" stop-color="#00ff01"/><stop offset="0.632" stop-color="#02ff00"/><stop offset="0.7063" stop-color="#23ff00"/><stop offset="0.8178" stop-color="#5cff00"/><stop offset="0.9108" stop-color="#92ff00"/><stop offset="1" stop-color="#cf0"/></linearGradient><linearGradient id="c6"><stop offset="0" stop-color="#00ff0a"/><stop offset="0.2929" stop-color="#00ff01"/><stop offset="0.5825" stop-color="#02ff00"/><stop offset="0.67" stop-color="#2fff00"/><stop offset="0.7778" stop-color="#6fff00"/><stop offset="0.8721" stop-color="#afff00"/><stop offset="0.9596" stop-color="#f2ff00"/><stop offset="0.9764" stop-color="#fcfc00"/><stop offset="1" stop-color="#ffec00"/></linearGradient><linearGradient id="c7"><stop offset="0" stop-color="#00ff0d"/><stop offset="0.3704" stop-color="#00ff02"/><stop offset="0.537" stop-color="#02ff00"/><stop offset="0.6142" stop-color="#2cff00"/><stop offset="0.716" stop-color="#6fff00"/><stop offset="0.8025" stop-color="#afff00"/><stop offset="0.8858" stop-color="#f5ff00"/><stop offset="0.9074" stop-color="#fff500"/><stop offset="0.9537" stop-color="#ffd200"/><stop offset="1" stop-color="#ffb600"/></linearGradient><linearGradient id="c8"><stop offset="0" stop-color="#0f1"/><stop offset="0.5" stop-color="#01ff01"/><stop offset="0.5682" stop-color="#2aff00"/><stop offset="0.6619" stop-color="#6cff00"/><stop offset="0.7358" stop-color="#a8ff00"/><stop offset="0.8295" stop-color="#fcfc00"/><stop offset="0.8466" stop-color="#ffef00"/><stop offset="0.9119" stop-color="#ffbe00"/><stop offset="1" stop-color="#ff8f00"/></linearGradient><linearGradient id="c9"><stop offset="0" stop-color="#00ff15"/><stop offset="0.4684" stop-color="#02ff03"/><stop offset="0.5316" stop-color="#2bff01"/><stop offset="0.6158" stop-color="#6cff00"/><stop offset="0.6842" stop-color="#a8ff00"/><stop offset="0.7711" stop-color="#fcfc00"/><stop offset="0.8263" stop-color="#fc0"/><stop offset="0.8737" stop-color="#ffac00"/><stop offset="0.9316" stop-color="#ff8d00"/><stop offset="1" stop-color="#ff7100"/></linearGradient><linearGradient id="c10"><stop offset="0" stop-color="#00ff19"/><stop offset="0.4423" stop-color="#02ff06"/><stop offset="0.5037" stop-color="#2eff04"/><stop offset="0.5799" stop-color="#6eff01"/><stop offset="0.6462" stop-color="#adff00"/><stop offset="0.7125" stop-color="#f4ff00"/><stop offset="0.7224" stop-color="#fcfb00"/><stop offset="0.7322" stop-color="#fff300"/><stop offset="0.7838" stop-color="#ffc300"/><stop offset="0.8428" stop-color="#ff9c00"/><stop offset="0.914" stop-color="#ff7900"/><stop offset="1" stop-color="#ff5b00"/></linearGradient><linearGradient id="c11"><stop offset="0" stop-color="#00ff1c"/><stop offset="0.4157" stop-color="#02ff0b"/><stop offset="0.4711" stop-color="#2cff08"/><stop offset="0.545" stop-color="#6eff04"/><stop offset="0.6074" stop-color="#adff01"/><stop offset="0.6697" stop-color="#f5fe00"/><stop offset="0.679" stop-color="#fdfb00"/><stop offset="0.6882" stop-color="#fff200"/><stop offset="0.7159" stop-color="#ffd500"/><stop offset="0.746" stop-color="#fb0"/><stop offset="0.8129" stop-color="#ff8f00"/><stop offset="0.8984" stop-color="#ff6900"/><stop offset="1" stop-color="#ff4a00"/></linearGradient><linearGradient id="c12"><stop offset="0" stop-color="#00ff20"/><stop offset="0.3957" stop-color="#02ff10"/><stop offset="0.45" stop-color="#2fff0d"/><stop offset="0.5174" stop-color="#70ff08"/><stop offset="0.5739" stop-color="#aeff05"/><stop offset="0.6326" stop-color="#f5fe02"/><stop offset="0.6478" stop-color="#fff401"/><stop offset="0.6783" stop-color="#ffd201"/><stop offset="0.7109" stop-color="#ffb500"/><stop offset="0.7457" stop-color="#ff9b00"/><stop offset="0.7848" stop-color="#ff8400"/><stop offset="0.8804" stop-color="#ff5c00"/><stop offset="1" stop-color="#ff3b00"/></linearGradient><linearGradient id="c13"><stop offset="0" stop-color="#00ff24"/><stop offset="0.3745" stop-color="#02ff15"/><stop offset="0.4239" stop-color="#2dff12"/><stop offset="0.4877" stop-color="#6dff0e"/><stop offset="0.5432" stop-color="#aeff0a"/><stop offset="0.5967" stop-color="#f4ff06"/><stop offset="0.6049" stop-color="#fcfc06"/><stop offset="0.6132" stop-color="#fff305"/><stop offset="0.644" stop-color="#ffcf02"/><stop offset="0.679" stop-color="#ffaf01"/><stop offset="0.716" stop-color="#ff9400"/><stop offset="0.7572" stop-color="#ff7c00"/><stop offset="0.8066" stop-color="#ff6500"/><stop offset="0.8642" stop-color="#ff5100"/><stop offset="1" stop-color="#ff2f00"/></linearGradient><linearGradient id="c14"><stop offset="0" stop-color="#00ff28"/><stop offset="0.3555" stop-color="#02ff1a"/><stop offset="0.4004" stop-color="#2aff18"/><stop offset="0.4629" stop-color="#6dff14"/><stop offset="0.5156" stop-color="#aeff10"/><stop offset="0.5664" stop-color="#f4fe0c"/><stop offset="0.5742" stop-color="#fcfb0b"/><stop offset="0.582" stop-color="#fff20a"/><stop offset="0.6152" stop-color="#ffca06"/><stop offset="0.6504" stop-color="#ffa903"/><stop offset="0.6895" stop-color="#ff8c01"/><stop offset="0.7344" stop-color="#ff7300"/><stop offset="0.7891" stop-color="#ff5b00"/><stop offset="0.8496" stop-color="#ff4700"/><stop offset="1" stop-color="#ff2500"/></linearGradient><linearGradient id="c15"><stop offset="0" stop-color="#00ff2c"/><stop offset="0.3401" stop-color="#02ff1f"/><stop offset="0.3829" stop-color="#2bff1d"/><stop offset="0.4405" stop-color="#6dff1a"/><stop offset="0.4888" stop-color="#acff16"/><stop offset="0.539" stop-color="#f5fe12"/><stop offset="0.5446" stop-color="#fbfc12"/><stop offset="0.5539" stop-color="#fff110"/><stop offset="0.5855" stop-color="#ffc90b"/><stop offset="0.6208" stop-color="#ffa607"/><stop offset="0.6617" stop-color="#ff8804"/><stop offset="0.71" stop-color="#ff6c01"/><stop offset="0.7677" stop-color="#ff5400"/><stop offset="0.8346" stop-color="#ff3f00"/><stop offset="1" stop-color="#ff1c00"/></linearGradient><linearGradient id="c16"><stop offset="0" stop-color="#00ff2f"/><stop offset="0.3245" stop-color="#02ff24"/><stop offset="0.3599" stop-color="#25ff23"/><stop offset="0.4131" stop-color="#64ff20"/><stop offset="0.4628" stop-color="#a7ff1d"/><stop offset="0.5106" stop-color="#f0ff19"/><stop offset="0.5195" stop-color="#fcfc18"/><stop offset="0.5248" stop-color="#fef617"/><stop offset="0.5585" stop-color="#ffc811"/><stop offset="0.5975" stop-color="#ffa10b"/><stop offset="0.6418" stop-color="#ff8007"/><stop offset="0.6933" stop-color="#ff6403"/><stop offset="0.7535" stop-color="#ff4b01"/><stop offset="0.8227" stop-color="#ff3700"/><stop offset="0.9043" stop-color="#ff2500"/><stop offset="1" stop-color="#ff1500"/></linearGradient><linearGradient id="c17"><stop offset="0" stop-color="#0f3"/><stop offset="0.3119" stop-color="#02ff2a"/><stop offset="0.3458" stop-color="#26ff28"/><stop offset="0.3949" stop-color="#63ff26"/><stop offset="0.4424" stop-color="#a7ff23"/><stop offset="0.4881" stop-color="#f1ff20"/><stop offset="0.4966" stop-color="#fcfb1f"/><stop offset="0.5017" stop-color="#fef51e"/><stop offset="0.5356" stop-color="#ffc516"/><stop offset="0.5746" stop-color="#ff9d0f"/><stop offset="0.6203" stop-color="#ff7b0a"/><stop offset="0.6729" stop-color="#ff5e05"/><stop offset="0.7356" stop-color="#ff4502"/><stop offset="0.8102" stop-color="#ff3000"/><stop offset="0.8966" stop-color="#ff1e00"/><stop offset="1" stop-color="#ff0e00"/></linearGradient><linearGradient id="c18"><stop offset="0" stop-color="#00ff37"/><stop offset="0.2982" stop-color="#02ff2f"/><stop offset="0.3274" stop-color="#21ff2e"/><stop offset="0.376" stop-color="#61ff2c"/><stop offset="0.423" stop-color="#a7ff29"/><stop offset="0.4668" stop-color="#f2ff27"/><stop offset="0.4733" stop-color="#fbfc26"/><stop offset="0.4797" stop-color="#fff424"/><stop offset="0.5138" stop-color="#ffc21b"/><stop offset="0.5527" stop-color="#ff9914"/><stop offset="0.5997" stop-color="#ff760d"/><stop offset="0.6548" stop-color="#ff5808"/><stop offset="0.7212" stop-color="#ff3f03"/><stop offset="0.799" stop-color="#ff2901"/><stop offset="0.8914" stop-color="#ff1700"/><stop offset="1" stop-color="#ff0800"/></linearGradient><linearGradient id="c19"><stop offset="0" stop-color="#00ff3b"/><stop offset="0.2877" stop-color="#02ff34"/><stop offset="0.3173" stop-color="#25ff33"/><stop offset="0.3608" stop-color="#60ff32"/><stop offset="0.4044" stop-color="#a4ff30"/><stop offset="0.4463" stop-color="#f0ff2e"/><stop offset="0.4541" stop-color="#fcfc2d"/><stop offset="0.4603" stop-color="#fff32b"/><stop offset="0.4946" stop-color="#ffbf20"/><stop offset="0.535" stop-color="#ff9417"/><stop offset="0.5832" stop-color="#ff7010"/><stop offset="0.6392" stop-color="#ff520a"/><stop offset="0.7076" stop-color="#ff3905"/><stop offset="0.7885" stop-color="#ff2401"/><stop offset="0.8849" stop-color="#ff1200"/><stop offset="1" stop-color="#ff0300"/></linearGradient><linearGradient id="c20"><stop offset="0" stop-color="#00ff3f"/><stop offset="0.2765" stop-color="#02ff3a"/><stop offset="0.3049" stop-color="#24ff39"/><stop offset="0.3483" stop-color="#62ff38"/><stop offset="0.3901" stop-color="#a7ff36"/><stop offset="0.429" stop-color="#f0ff35"/><stop offset="0.4365" stop-color="#fcfc34"/><stop offset="0.441" stop-color="#fef532"/><stop offset="0.4753" stop-color="#ffbe26"/><stop offset="0.5157" stop-color="#ff921c"/><stop offset="0.5635" stop-color="#ff6d13"/><stop offset="0.6218" stop-color="#ff4e0c"/><stop offset="0.6936" stop-color="#ff3406"/><stop offset="0.7803" stop-color="#ff1e02"/><stop offset="0.8924" stop-color="#ff0b00"/><stop offset="1" stop-color="#f00"/></linearGradient><linearGradient id="c21"><stop offset="0" stop-color="#00ff43"/><stop offset="0.2676" stop-color="#02ff3f"/><stop offset="0.295" stop-color="#25ff3f"/><stop offset="0.3353" stop-color="#62ff3e"/><stop offset="0.3755" stop-color="#a7ff3d"/><stop offset="0.4129" stop-color="#f1ff3c"/><stop offset="0.4187" stop-color="#fbfc3b"/><stop offset="0.4245" stop-color="#fef439"/><stop offset="0.4417" stop-color="#ffd531"/><stop offset="0.459" stop-color="#ffbb2b"/><stop offset="0.4993" stop-color="#ff8e1f"/><stop offset="0.5496" stop-color="#ff6716"/><stop offset="0.6101" stop-color="#ff480e"/><stop offset="0.6892" stop-color="#ff2d07"/><stop offset="0.7871" stop-color="#ff1702"/><stop offset="0.9367" stop-color="#ff0100"/><stop offset="1" stop-color="#f00"/></linearGradient><linearGradient id="c22"><stop offset="0" stop-color="#00ff47"/><stop offset="0.258" stop-color="#02ff45"/><stop offset="0.2816" stop-color="#20ff45"/><stop offset="0.3218" stop-color="#5fff44"/><stop offset="0.3606" stop-color="#a5ff44"/><stop offset="0.3981" stop-color="#f2ff43"/><stop offset="0.4036" stop-color="#fbfc42"/><stop offset="0.4092" stop-color="#fff340"/><stop offset="0.4258" stop-color="#ffd437"/><stop offset="0.4438" stop-color="#ffb830"/><stop offset="0.4854" stop-color="#ff8923"/><stop offset="0.5368" stop-color="#ff6218"/><stop offset="0.5992" stop-color="#ff4310"/><stop offset="0.6865" stop-color="#ff2608"/><stop offset="0.7947" stop-color="#ff1002"/><stop offset="0.9043" stop-color="#ff0100"/><stop offset="1" stop-color="#f00"/></linearGradient><linearGradient id="c23"><stop offset="0" stop-color="#00ff4b"/><stop offset="0.2503" stop-color="#02ff4b"/><stop offset="0.2744" stop-color="#24ff4b"/><stop offset="0.3106" stop-color="#5fff4b"/><stop offset="0.3481" stop-color="#a5ff4a"/><stop offset="0.3829" stop-color="#efff4a"/><stop offset="0.3896" stop-color="#fcfc49"/><stop offset="0.3949" stop-color="#fff347"/><stop offset="0.4123" stop-color="#ffd13d"/><stop offset="0.4297" stop-color="#ffb635"/><stop offset="0.4712" stop-color="#ff8627"/><stop offset="0.5234" stop-color="#ff5e1b"/><stop offset="0.5877" stop-color="#ff3e12"/><stop offset="0.6814" stop-color="#ff2109"/><stop offset="0.8019" stop-color="#ff0902"/><stop offset="0.8728" stop-color="#f00"/><stop offset="1" stop-color="#f00"/></linearGradient><linearGradient id="c24"><stop offset="0" stop-color="#00ff50"/><stop offset="0.2419" stop-color="#02ff51"/><stop offset="0.2626" stop-color="#1fff51"/><stop offset="0.2988" stop-color="#5cff51"/><stop offset="0.3351" stop-color="#a2ff51"/><stop offset="0.37" stop-color="#f0ff52"/><stop offset="0.3765" stop-color="#fcfb51"/><stop offset="0.3816" stop-color="#fff24e"/><stop offset="0.3984" stop-color="#ffd043"/><stop offset="0.4153" stop-color="#ffb53a"/><stop offset="0.436" stop-color="#ff9932"/><stop offset="0.458" stop-color="#ff822a"/><stop offset="0.511" stop-color="#ff5a1e"/><stop offset="0.577" stop-color="#ff3a13"/><stop offset="0.6779" stop-color="#ff1b0a"/><stop offset="0.8098" stop-color="#ff0402"/><stop offset="0.8435" stop-color="#ff0001"/><stop offset="1" stop-color="#f00"/></linearGradient><linearGradient id="c25"><stop offset="0" stop-color="#00ff54"/><stop offset="0.234" stop-color="#02ff57"/><stop offset="0.2566" stop-color="#24ff57"/><stop offset="0.2904" stop-color="#61ff58"/><stop offset="0.3242" stop-color="#a5ff58"/><stop offset="0.3567" stop-color="#f1ff59"/><stop offset="0.3617" stop-color="#fbfc58"/><stop offset="0.3667" stop-color="#fef456"/><stop offset="0.3842" stop-color="#ffcf49"/><stop offset="0.4018" stop-color="#ffb23f"/><stop offset="0.4218" stop-color="#ff9736"/><stop offset="0.4443" stop-color="#ff7f2e"/><stop offset="0.4981" stop-color="#ff5620"/><stop offset="0.5645" stop-color="#ff3615"/><stop offset="0.6658" stop-color="#ff180b"/><stop offset="0.7985" stop-color="#ff0103"/><stop offset="1" stop-color="#f00"/></linearGradient><linearGradient id="c26"><stop offset="0" stop-color="#00ff58"/><stop offset="0.2267" stop-color="#02ff5d"/><stop offset="0.2461" stop-color="#1fff5d"/><stop offset="0.28" stop-color="#5eff5e"/><stop offset="0.3127" stop-color="#a3ff60"/><stop offset="0.3442" stop-color="#efff61"/><stop offset="0.3503" stop-color="#fbfc60"/><stop offset="0.3552" stop-color="#fff35d"/><stop offset="0.3721" stop-color="#ffce4f"/><stop offset="0.3891" stop-color="#ffb145"/><stop offset="0.4097" stop-color="#ff943a"/><stop offset="0.4327" stop-color="#ff7c31"/><stop offset="0.4873" stop-color="#ff5222"/><stop offset="0.5552" stop-color="#ff3217"/><stop offset="0.6509" stop-color="#ff160d"/><stop offset="0.7733" stop-color="#ff0105"/><stop offset="1" stop-color="#f00"/></linearGradient><linearGradient id="c27"><stop offset="0" stop-color="#00ff5c"/><stop offset="0.2172" stop-color="#02ff63"/><stop offset="0.2381" stop-color="#25ff64"/><stop offset="0.2683" stop-color="#60ff65"/><stop offset="0.2997" stop-color="#a6ff67"/><stop offset="0.3287" stop-color="#efff69"/><stop offset="0.3345" stop-color="#fcfb68"/><stop offset="0.3391" stop-color="#fff264"/><stop offset="0.3554" stop-color="#ffcd56"/><stop offset="0.3728" stop-color="#ffae4a"/><stop offset="0.3926" stop-color="#ff923f"/><stop offset="0.4158" stop-color="#ff7835"/><stop offset="0.4413" stop-color="#ff622c"/><stop offset="0.4704" stop-color="#ff4f25"/><stop offset="0.5412" stop-color="#ff2d18"/><stop offset="0.6283" stop-color="#ff140e"/><stop offset="0.7375" stop-color="#ff0106"/><stop offset="1" stop-color="#f00"/></linearGradient><linearGradient id="c28"><stop offset="0" stop-color="#00ff61"/><stop offset="0.2162" stop-color="#02ff69"/><stop offset="0.2382" stop-color="#26ff6a"/><stop offset="0.2717" stop-color="#69ff6c"/><stop offset="0.2994" stop-color="#a9ff6e"/><stop offset="0.326" stop-color="#edff70"/><stop offset="0.3318" stop-color="#fafc70"/><stop offset="0.3376" stop-color="#fff16b"/><stop offset="0.3538" stop-color="#ffcc5c"/><stop offset="0.3723" stop-color="#ffab4e"/><stop offset="0.3919" stop-color="#ff9043"/><stop offset="0.415" stop-color="#ff7639"/><stop offset="0.4694" stop-color="#ff4d28"/><stop offset="0.5399" stop-color="#ff2c1a"/><stop offset="0.6243" stop-color="#ff1410"/><stop offset="0.7306" stop-color="#ff0108"/><stop offset="1" stop-color="#f00"/></linearGradient><linearGradient id="c29"><stop offset="0" stop-color="#00ff65"/><stop offset="0.2164" stop-color="#02ff6f"/><stop offset="0.2361" stop-color="#24ff71"/><stop offset="0.2662" stop-color="#5fff73"/><stop offset="0.2975" stop-color="#a6ff76"/><stop offset="0.3264" stop-color="#f1ff78"/><stop offset="0.331" stop-color="#fbfc78"/><stop offset="0.3356" stop-color="#fff374"/><stop offset="0.3519" stop-color="#ffcd63"/><stop offset="0.3692" stop-color="#ffae56"/><stop offset="0.3889" stop-color="#ff9249"/><stop offset="0.412" stop-color="#ff783e"/><stop offset="0.4387" stop-color="#ff6034"/><stop offset="0.4676" stop-color="#ff4d2b"/><stop offset="0.5382" stop-color="#ff2c1d"/><stop offset="0.6227" stop-color="#ff1312"/><stop offset="0.7269" stop-color="#ff010a"/><stop offset="1" stop-color="#f00"/></linearGradient><linearGradient id="c30"><stop offset="0" stop-color="#00ff69"/><stop offset="0.2164" stop-color="#02ff76"/><stop offset="0.2338" stop-color="#1eff77"/><stop offset="0.265" stop-color="#5cff7a"/><stop offset="0.2963" stop-color="#a3ff7d"/><stop offset="0.3252" stop-color="#efff81"/><stop offset="0.331" stop-color="#fcfc80"/><stop offset="0.3356" stop-color="#fff27b"/><stop offset="0.3519" stop-color="#ffcc6a"/><stop offset="0.3692" stop-color="#ffad5b"/><stop offset="0.3889" stop-color="#ff914e"/><stop offset="0.412" stop-color="#ff7742"/><stop offset="0.4375" stop-color="#ff6038"/><stop offset="0.4676" stop-color="#ff4c2f"/><stop offset="0.5382" stop-color="#ff2b20"/><stop offset="0.6227" stop-color="#ff1314"/><stop offset="0.7257" stop-color="#ff000c"/><stop offset="1" stop-color="#f00"/></linearGradient><linearGradient id="c31"><stop offset="0" stop-color="#00ff6e"/><stop offset="0.2167" stop-color="#02ff7c"/><stop offset="0.2399" stop-color="#2bff7e"/><stop offset="0.2711" stop-color="#6bff82"/><stop offset="0.2978" stop-color="#a9ff85"/><stop offset="0.3233" stop-color="#ecff89"/><stop offset="0.3302" stop-color="#fcfb88"/><stop offset="0.3349" stop-color="#fff183"/><stop offset="0.3511" stop-color="#ffcb71"/><stop offset="0.3685" stop-color="#ffac61"/><stop offset="0.3882" stop-color="#ff9053"/><stop offset="0.4114" stop-color="#ff7647"/><stop offset="0.4368" stop-color="#ff603c"/><stop offset="0.467" stop-color="#ff4b32"/><stop offset="0.5377" stop-color="#ff2a22"/><stop offset="0.6211" stop-color="#ff1317"/><stop offset="0.7231" stop-color="#ff000e"/><stop offset="1" stop-color="#ff0001"/></linearGradient><linearGradient id="c32"><stop offset="0" stop-color="#00ff73"/><stop offset="0.2158" stop-color="#02ff83"/><stop offset="0.2378" stop-color="#28ff85"/><stop offset="0.2703" stop-color="#6bff89"/><stop offset="0.297" stop-color="#a9ff8d"/><stop offset="0.3225" stop-color="#edff91"/><stop offset="0.3283" stop-color="#fbfc90"/><stop offset="0.3341" stop-color="#fff08b"/><stop offset="0.3503" stop-color="#ffca77"/><stop offset="0.3677" stop-color="#ffab67"/><stop offset="0.3875" stop-color="#ff8f59"/><stop offset="0.4107" stop-color="#ff754b"/><stop offset="0.4362" stop-color="#ff5f40"/><stop offset="0.4652" stop-color="#ff4b36"/><stop offset="0.536" stop-color="#ff2a25"/><stop offset="0.6183" stop-color="#ff1219"/><stop offset="0.7193" stop-color="#ff000f"/><stop offset="1" stop-color="#ff0002"/></linearGradient><linearGradient id="c33"><stop offset="0" stop-color="#0f7"/><stop offset="0.2169" stop-color="#02ff89"/><stop offset="0.2367" stop-color="#25ff8c"/><stop offset="0.2657" stop-color="#60ff90"/><stop offset="0.2947" stop-color="#a4ff95"/><stop offset="0.3237" stop-color="#f1ff9a"/><stop offset="0.3283" stop-color="#fbfc99"/><stop offset="0.3329" stop-color="#fff294"/><stop offset="0.3492" stop-color="#ffcc7f"/><stop offset="0.3666" stop-color="#ffac6e"/><stop offset="0.3863" stop-color="#ff8f5e"/><stop offset="0.4095" stop-color="#ff7550"/><stop offset="0.435" stop-color="#ff5f44"/><stop offset="0.464" stop-color="#ff4b3a"/><stop offset="0.5348" stop-color="#ff2a28"/><stop offset="0.616" stop-color="#ff121b"/><stop offset="0.7158" stop-color="#f01"/><stop offset="1" stop-color="#ff0003"/></linearGradient><linearGradient id="c34"><stop offset="0" stop-color="#00ff7c"/><stop offset="0.216" stop-color="#02ff90"/><stop offset="0.2334" stop-color="#20ff93"/><stop offset="0.2636" stop-color="#5dff97"/><stop offset="0.2938" stop-color="#a4ff9d"/><stop offset="0.3217" stop-color="#eeffa2"/><stop offset="0.3275" stop-color="#fcfba1"/><stop offset="0.3322" stop-color="#fff19c"/><stop offset="0.3484" stop-color="#ffcb86"/><stop offset="0.3659" stop-color="#ffab74"/><stop offset="0.3856" stop-color="#ff8e64"/><stop offset="0.4088" stop-color="#ff7455"/><stop offset="0.4344" stop-color="#ff5e48"/><stop offset="0.4634" stop-color="#ff4a3d"/><stop offset="0.5343" stop-color="#ff292b"/><stop offset="0.6144" stop-color="#ff121e"/><stop offset="0.712" stop-color="#ff0013"/><stop offset="1" stop-color="#ff0004"/></linearGradient><linearGradient id="c35"><stop offset="0" stop-color="#00ff80"/><stop offset="0.2163" stop-color="#03ff97"/><stop offset="0.2384" stop-color="#2aff9b"/><stop offset="0.2686" stop-color="#6affa0"/><stop offset="0.2953" stop-color="#aaffa5"/><stop offset="0.3198" stop-color="#ecffab"/><stop offset="0.3256" stop-color="#fafcaa"/><stop offset="0.3314" stop-color="#fff0a4"/><stop offset="0.3477" stop-color="#ffca8d"/><stop offset="0.3651" stop-color="#ffaa7a"/><stop offset="0.3849" stop-color="#ff8d69"/><stop offset="0.4081" stop-color="#ff735a"/><stop offset="0.4337" stop-color="#ff5d4c"/><stop offset="0.4628" stop-color="#ff4941"/><stop offset="0.5337" stop-color="#ff282d"/><stop offset="0.6128" stop-color="#ff1220"/><stop offset="0.7081" stop-color="#ff0015"/><stop offset="1" stop-color="#ff0005"/></linearGradient><linearGradient id="c36"><stop offset="0" stop-color="#00ff85"/><stop offset="0.2154" stop-color="#02ff9e"/><stop offset="0.2328" stop-color="#20ffa1"/><stop offset="0.2631" stop-color="#5fffa7"/><stop offset="0.2922" stop-color="#a4ffad"/><stop offset="0.3201" stop-color="#f0ffb4"/><stop offset="0.3248" stop-color="#fbfcb3"/><stop offset="0.3295" stop-color="#fef2ae"/><stop offset="0.3458" stop-color="#ffcb95"/><stop offset="0.3632" stop-color="#ffaa81"/><stop offset="0.383" stop-color="#ff8d6f"/><stop offset="0.4051" stop-color="#ff7460"/><stop offset="0.4307" stop-color="#ff5e52"/><stop offset="0.4598" stop-color="#ff4a45"/><stop offset="0.5308" stop-color="#ff2931"/><stop offset="0.6088" stop-color="#ff1223"/><stop offset="0.7043" stop-color="#ff0017"/><stop offset="1" stop-color="#ff0006"/></linearGradient><linearGradient id="c37"><stop offset="0" stop-color="#00ff8a"/><stop offset="0.2084" stop-color="#00ffa4"/><stop offset="0.2165" stop-color="#03ffa5"/><stop offset="0.2386" stop-color="#2bffaa"/><stop offset="0.2678" stop-color="#69ffb0"/><stop offset="0.2934" stop-color="#a7ffb6"/><stop offset="0.3178" stop-color="#eaffbd"/><stop offset="0.3248" stop-color="#fbfbbc"/><stop offset="0.3295" stop-color="#fff1b6"/><stop offset="0.3458" stop-color="#ffca9c"/><stop offset="0.3632" stop-color="#ffa987"/><stop offset="0.383" stop-color="#ff8c75"/><stop offset="0.4051" stop-color="#ff7364"/><stop offset="0.4307" stop-color="#ff5d56"/><stop offset="0.4598" stop-color="#ff4949"/><stop offset="0.5308" stop-color="#ff2833"/><stop offset="0.6077" stop-color="#ff1225"/><stop offset="0.7008" stop-color="#ff001a"/><stop offset="1" stop-color="#ff0007"/></linearGradient><linearGradient id="c38"><stop offset="0" stop-color="#00ff8f"/><stop offset="0.1177" stop-color="#00ff9c"/><stop offset="0.2156" stop-color="#02ffad"/><stop offset="0.2366" stop-color="#28ffb1"/><stop offset="0.2669" stop-color="#69ffb8"/><stop offset="0.2925" stop-color="#a7ffbf"/><stop offset="0.317" stop-color="#ebffc6"/><stop offset="0.324" stop-color="#fcfbc5"/><stop offset="0.3287" stop-color="#fff1be"/><stop offset="0.345" stop-color="#ffc9a4"/><stop offset="0.3625" stop-color="#ffa88d"/><stop offset="0.3823" stop-color="#ff8b7a"/><stop offset="0.4044" stop-color="#ff7269"/><stop offset="0.4301" stop-color="#ff5c5a"/><stop offset="0.4592" stop-color="#ff484c"/><stop offset="0.5303" stop-color="#ff2736"/><stop offset="0.6061" stop-color="#ff1127"/><stop offset="0.697" stop-color="#ff001c"/><stop offset="1" stop-color="#ff0008"/></linearGradient><linearGradient id="c39"><stop offset="0" stop-color="#00ff94"/><stop offset="0.1167" stop-color="#00ffa2"/><stop offset="0.2147" stop-color="#02ffb4"/><stop offset="0.2334" stop-color="#22ffb8"/><stop offset="0.2649" stop-color="#66ffc0"/><stop offset="0.2917" stop-color="#a8ffc7"/><stop offset="0.3162" stop-color="#ecffcf"/><stop offset="0.3221" stop-color="#fafccf"/><stop offset="0.3279" stop-color="#fff0c7"/><stop offset="0.3431" stop-color="#ffcaad"/><stop offset="0.3606" stop-color="#ffa995"/><stop offset="0.3804" stop-color="#ff8c80"/><stop offset="0.4037" stop-color="#ff716e"/><stop offset="0.4294" stop-color="#ff5b5e"/><stop offset="0.4586" stop-color="#ff4750"/><stop offset="0.5298" stop-color="#ff2639"/><stop offset="0.6044" stop-color="#ff112a"/><stop offset="0.6931" stop-color="#ff001e"/><stop offset="0.8273" stop-color="#ff0012"/><stop offset="1" stop-color="#ff0009"/></linearGradient><linearGradient id="c40"><stop offset="0" stop-color="#0f9"/><stop offset="0.118" stop-color="#00ffa9"/><stop offset="0.215" stop-color="#02ffbb"/><stop offset="0.2313" stop-color="#1fffbf"/><stop offset="0.2605" stop-color="#5dffc7"/><stop offset="0.2886" stop-color="#a2ffd0"/><stop offset="0.3166" stop-color="#f0ffd9"/><stop offset="0.3213" stop-color="#fbfcd8"/><stop offset="0.3259" stop-color="#fff2d1"/><stop offset="0.3411" stop-color="#ffccb6"/><stop offset="0.3586" stop-color="#ffaa9d"/><stop offset="0.3785" stop-color="#ff8c87"/><stop offset="0.4007" stop-color="#ff7374"/><stop offset="0.4264" stop-color="#ff5c63"/><stop offset="0.4556" stop-color="#ff4855"/><stop offset="0.5269" stop-color="#ff263c"/><stop offset="0.6005" stop-color="#ff112c"/><stop offset="0.6893" stop-color="#ff0020"/><stop offset="0.8248" stop-color="#ff0014"/><stop offset="1" stop-color="#ff000a"/></linearGradient><linearGradient id="c41"><stop offset="0" stop-color="#00ff9e"/><stop offset="0.1171" stop-color="#00ffaf"/><stop offset="0.2143" stop-color="#02ffc3"/><stop offset="0.2319" stop-color="#21ffc7"/><stop offset="0.2635" stop-color="#65ffd1"/><stop offset="0.2892" stop-color="#a5ffd9"/><stop offset="0.3138" stop-color="#eaffe2"/><stop offset="0.3208" stop-color="#fbfbe2"/><stop offset="0.3255" stop-color="#fff1da"/><stop offset="0.3407" stop-color="#ffcbbd"/><stop offset="0.3583" stop-color="#ffa9a3"/><stop offset="0.3782" stop-color="#ff8b8d"/><stop offset="0.4005" stop-color="#ff7279"/><stop offset="0.4262" stop-color="#ff5b68"/><stop offset="0.4555" stop-color="#ff4758"/><stop offset="0.5269" stop-color="#ff263f"/><stop offset="0.6007" stop-color="#ff102f"/><stop offset="0.6874" stop-color="#f02"/><stop offset="0.8244" stop-color="#ff0015"/><stop offset="1" stop-color="#ff000c"/></linearGradient><linearGradient id="c42"><stop offset="0" stop-color="#00ffa3"/><stop offset="0.1176" stop-color="#00ffb5"/><stop offset="0.2153" stop-color="#02ffcb"/><stop offset="0.2353" stop-color="#27ffd0"/><stop offset="0.2647" stop-color="#67ffda"/><stop offset="0.2894" stop-color="#a5ffe2"/><stop offset="0.3141" stop-color="#ebffec"/><stop offset="0.3212" stop-color="#fcfaeb"/><stop offset="0.3259" stop-color="#fff0e3"/><stop offset="0.3412" stop-color="#ffcac5"/><stop offset="0.3588" stop-color="#ffa8aa"/><stop offset="0.3788" stop-color="#ff8a92"/><stop offset="0.4012" stop-color="#ff717e"/><stop offset="0.4271" stop-color="#ff5a6c"/><stop offset="0.4565" stop-color="#ff465c"/><stop offset="0.5271" stop-color="#ff2542"/><stop offset="0.6" stop-color="#ff1031"/><stop offset="0.6859" stop-color="#ff0024"/><stop offset="0.8235" stop-color="#ff0017"/><stop offset="1" stop-color="#ff000d"/></linearGradient><linearGradient id="c43"><stop offset="0" stop-color="#00ffa9"/><stop offset="0.1182" stop-color="#00ffbc"/><stop offset="0.2151" stop-color="#02ffd3"/><stop offset="0.2329" stop-color="#21ffd8"/><stop offset="0.2636" stop-color="#64ffe2"/><stop offset="0.2872" stop-color="#9fffeb"/><stop offset="0.3132" stop-color="#e7fef5"/><stop offset="0.3203" stop-color="#f9faf4"/><stop offset="0.3274" stop-color="#ffebe9"/><stop offset="0.3428" stop-color="#ffc6ca"/><stop offset="0.3605" stop-color="#ffa5af"/><stop offset="0.3806" stop-color="#ff8897"/><stop offset="0.4031" stop-color="#ff6e82"/><stop offset="0.4291" stop-color="#ff586f"/><stop offset="0.4586" stop-color="#ff445f"/><stop offset="0.5296" stop-color="#ff2445"/><stop offset="0.6005" stop-color="#ff1034"/><stop offset="0.6844" stop-color="#ff0027"/><stop offset="0.8215" stop-color="#ff0019"/><stop offset="1" stop-color="#ff000e"/></linearGradient><linearGradient id="c44"><stop offset="0" stop-color="#00ffae"/><stop offset="0.1188" stop-color="#00ffc2"/><stop offset="0.2162" stop-color="#02ffdb"/><stop offset="0.2328" stop-color="#20ffe0"/><stop offset="0.2613" stop-color="#5effea"/><stop offset="0.285" stop-color="#98fef3"/><stop offset="0.3112" stop-color="#dffbfb"/><stop offset="0.3219" stop-color="#f9f5fa"/><stop offset="0.3302" stop-color="#ffe4ec"/><stop offset="0.3456" stop-color="#ffc0ce"/><stop offset="0.3634" stop-color="#ffa0b2"/><stop offset="0.3836" stop-color="#ff849a"/><stop offset="0.4062" stop-color="#ff6b85"/><stop offset="0.4323" stop-color="#ff5572"/><stop offset="0.462" stop-color="#ff4262"/><stop offset="0.5344" stop-color="#ff2246"/><stop offset="0.6033" stop-color="#ff0f36"/><stop offset="0.6829" stop-color="#ff0029"/><stop offset="0.8207" stop-color="#ff001a"/><stop offset="1" stop-color="#ff000f"/></linearGradient><linearGradient id="c45"><stop offset="0" stop-color="#00ffb3"/><stop offset="0.1181" stop-color="#00ffc9"/><stop offset="0.216" stop-color="#02ffe3"/><stop offset="0.2243" stop-color="#0fffe5"/><stop offset="0.2494" stop-color="#43ffee"/><stop offset="0.2936" stop-color="#acfbfc"/><stop offset="0.3222" stop-color="#f3effe"/><stop offset="0.327" stop-color="#fbe9f9"/><stop offset="0.3341" stop-color="#ffdaed"/><stop offset="0.3508" stop-color="#ffb5cd"/><stop offset="0.3687" stop-color="#ff97b2"/><stop offset="0.389" stop-color="#ff7d9a"/><stop offset="0.4117" stop-color="#ff6686"/><stop offset="0.4678" stop-color="#ff3f63"/><stop offset="0.5406" stop-color="#ff2048"/><stop offset="0.6062" stop-color="#ff0e38"/><stop offset="0.6814" stop-color="#ff002b"/><stop offset="0.8198" stop-color="#ff001c"/><stop offset="1" stop-color="#f01"/></linearGradient><linearGradient id="c46"><stop offset="0" stop-color="#00ffb9"/><stop offset="0.1187" stop-color="#00ffd0"/><stop offset="0.217" stop-color="#02ffeb"/><stop offset="0.2242" stop-color="#0effee"/><stop offset="0.2458" stop-color="#3afef5"/><stop offset="0.2926" stop-color="#a5f4fe"/><stop offset="0.3261" stop-color="#f3e4fe"/><stop offset="0.3309" stop-color="#fbdefa"/><stop offset="0.3381" stop-color="#ffd0ed"/><stop offset="0.3549" stop-color="#ffaece"/><stop offset="0.3729" stop-color="#ff91b3"/><stop offset="0.3933" stop-color="#ff789c"/><stop offset="0.4173" stop-color="#ff6187"/><stop offset="0.4736" stop-color="#ff3b64"/><stop offset="0.5468" stop-color="#ff1e49"/><stop offset="0.6103" stop-color="#ff0d3a"/><stop offset="0.6799" stop-color="#ff002e"/><stop offset="0.8189" stop-color="#ff001e"/><stop offset="1" stop-color="#ff0012"/></linearGradient><linearGradient id="c47"><stop offset="0" stop-color="#00ffbe"/><stop offset="0.1169" stop-color="#00ffd6"/><stop offset="0.2169" stop-color="#02fff3"/><stop offset="0.2253" stop-color="#0ffef6"/><stop offset="0.2554" stop-color="#4df9fd"/><stop offset="0.3241" stop-color="#e7deff"/><stop offset="0.3337" stop-color="#f9d6fb"/><stop offset="0.341" stop-color="#fec9f0"/><stop offset="0.3578" stop-color="#ffa8d1"/><stop offset="0.3759" stop-color="#ff8db7"/><stop offset="0.3964" stop-color="#ff749f"/><stop offset="0.4205" stop-color="#ff5d89"/><stop offset="0.4771" stop-color="#ff3967"/><stop offset="0.5506" stop-color="#ff1c4b"/><stop offset="0.6783" stop-color="#ff0030"/><stop offset="0.8181" stop-color="#ff0020"/><stop offset="1" stop-color="#ff0013"/></linearGradient><linearGradient id="c48"><stop offset="0" stop-color="#00ffc4"/><stop offset="0.1088" stop-color="#00ffdb"/><stop offset="0.2177" stop-color="#02fdfa"/><stop offset="0.2261" stop-color="#10fcfc"/><stop offset="0.2636" stop-color="#5cefff"/><stop offset="0.3289" stop-color="#ead3ff"/><stop offset="0.3374" stop-color="#faccfb"/><stop offset="0.3446" stop-color="#fec0f0"/><stop offset="0.3615" stop-color="#ffa1d2"/><stop offset="0.3809" stop-color="#ff85b6"/><stop offset="0.4015" stop-color="#ff6e9f"/><stop offset="0.4256" stop-color="#ff598a"/><stop offset="0.4837" stop-color="#ff3567"/><stop offset="0.5574" stop-color="#ff1a4c"/><stop offset="0.6759" stop-color="#f03"/><stop offset="0.8162" stop-color="#f02"/><stop offset="1" stop-color="#ff0014"/></linearGradient><linearGradient id="c49"><stop offset="0" stop-color="#00ffca"/><stop offset="0.0887" stop-color="#00ffdc"/><stop offset="0.1689" stop-color="#00fff3"/><stop offset="0.2175" stop-color="#02f8fe"/><stop offset="0.226" stop-color="#0ff6fe"/><stop offset="0.2649" stop-color="#5be7ff"/><stop offset="0.3329" stop-color="#ebc9ff"/><stop offset="0.3414" stop-color="#fac3fb"/><stop offset="0.3487" stop-color="#feb7f1"/><stop offset="0.367" stop-color="#ff98d1"/><stop offset="0.3852" stop-color="#ff80b8"/><stop offset="0.407" stop-color="#ff68a0"/><stop offset="0.4313" stop-color="#ff548b"/><stop offset="0.4897" stop-color="#ff3268"/><stop offset="0.5638" stop-color="#ff184d"/><stop offset="0.678" stop-color="#ff0035"/><stop offset="0.8177" stop-color="#ff0023"/><stop offset="1" stop-color="#ff0016"/></linearGradient><linearGradient id="c50"><stop offset="0" stop-color="#00ffcf"/><stop offset="0.1575" stop-color="#00fef7"/><stop offset="0.1832" stop-color="#00fcfd"/><stop offset="0.2186" stop-color="#02f1ff"/><stop offset="0.2271" stop-color="#10eeff"/><stop offset="0.2698" stop-color="#61ddff"/><stop offset="0.337" stop-color="#ebc0ff"/><stop offset="0.3455" stop-color="#fabafb"/><stop offset="0.3529" stop-color="#feaff1"/><stop offset="0.3712" stop-color="#ff92d2"/><stop offset="0.3895" stop-color="#ff7ab9"/><stop offset="0.4115" stop-color="#ff64a1"/><stop offset="0.4359" stop-color="#ff508d"/><stop offset="0.4945" stop-color="#ff306a"/><stop offset="0.5702" stop-color="#ff154e"/><stop offset="0.6764" stop-color="#ff0037"/><stop offset="0.8168" stop-color="#ff0025"/><stop offset="1" stop-color="#ff0017"/></linearGradient><linearGradient id="c51"><stop offset="0" stop-color="#00ffd5"/><stop offset="0.1509" stop-color="#00fdfb"/><stop offset="0.2184" stop-color="#02e9ff"/><stop offset="0.227" stop-color="#0ee6ff"/><stop offset="0.2699" stop-color="#5ed5ff"/><stop offset="0.3411" stop-color="#ebb8ff"/><stop offset="0.3497" stop-color="#fab2fc"/><stop offset="0.3571" stop-color="#fea7f2"/><stop offset="0.3755" stop-color="#ff8bd3"/><stop offset="0.3951" stop-color="#ff74b9"/><stop offset="0.4172" stop-color="#ff5ea2"/><stop offset="0.4417" stop-color="#ff4c8d"/><stop offset="0.5018" stop-color="#ff2c6b"/><stop offset="0.5767" stop-color="#ff1350"/><stop offset="0.6748" stop-color="#ff003a"/><stop offset="0.816" stop-color="#ff0027"/><stop offset="1" stop-color="#ff0018"/></linearGradient><linearGradient id="c52"><stop offset="0" stop-color="#00ffdb"/><stop offset="0.1344" stop-color="#00fcfc"/><stop offset="0.2195" stop-color="#02e2ff"/><stop offset="0.275" stop-color="#64cdff"/><stop offset="0.3453" stop-color="#ecb0ff"/><stop offset="0.3539" stop-color="#faaafc"/><stop offset="0.3613" stop-color="#fea0f2"/><stop offset="0.3798" stop-color="#ff85d4"/><stop offset="0.3995" stop-color="#ff6fba"/><stop offset="0.4464" stop-color="#ff488f"/><stop offset="0.5068" stop-color="#ff2a6c"/><stop offset="0.5832" stop-color="#ff1251"/><stop offset="0.6732" stop-color="#ff003c"/><stop offset="0.815" stop-color="#ff0029"/><stop offset="1" stop-color="#ff001a"/></linearGradient><linearGradient id="c53"><stop offset="0" stop-color="#00ffe1"/><stop offset="0.1115" stop-color="#00fcfc"/><stop offset="0.2193" stop-color="#02dbff"/><stop offset="0.228" stop-color="#0ed7ff"/><stop offset="0.2751" stop-color="#60c6ff"/><stop offset="0.3494" stop-color="#eca8ff"/><stop offset="0.3581" stop-color="#faa2fc"/><stop offset="0.3656" stop-color="#ff99f2"/><stop offset="0.4002" stop-color="#ff6dc0"/><stop offset="0.4424" stop-color="#ff4b97"/><stop offset="0.4944" stop-color="#ff2f76"/><stop offset="0.5576" stop-color="#ff185c"/><stop offset="0.6716" stop-color="#ff003f"/><stop offset="0.8141" stop-color="#ff002b"/><stop offset="1" stop-color="#ff001b"/></linearGradient><linearGradient id="c54"><stop offset="0" stop-color="#00ffe7"/><stop offset="0.09215" stop-color="#00fcfd"/><stop offset="0.2204" stop-color="#02d4ff"/><stop offset="0.2802" stop-color="#66beff"/><stop offset="0.3537" stop-color="#eda0ff"/><stop offset="0.3624" stop-color="#fa9bfc"/><stop offset="0.3699" stop-color="#ff92f2"/><stop offset="0.4047" stop-color="#ff69c1"/><stop offset="0.4471" stop-color="#ff4799"/><stop offset="0.4981" stop-color="#ff2d78"/><stop offset="0.5616" stop-color="#ff175e"/><stop offset="0.67" stop-color="#ff0042"/><stop offset="0.812" stop-color="#ff002d"/><stop offset="1" stop-color="#ff001d"/></linearGradient><linearGradient id="c55"><stop offset="0" stop-color="#0fe"/><stop offset="0.05757" stop-color="#00fdfb"/><stop offset="0.08511" stop-color="#00f8fe"/><stop offset="0.2203" stop-color="#02cdff"/><stop offset="0.229" stop-color="#0dcaff"/><stop offset="0.2804" stop-color="#62b8ff"/><stop offset="0.3579" stop-color="#ed99ff"/><stop offset="0.3667" stop-color="#fa94fc"/><stop offset="0.3742" stop-color="#ff8bf3"/><stop offset="0.4093" stop-color="#ff64c2"/><stop offset="0.4518" stop-color="#ff449a"/><stop offset="0.5031" stop-color="#ff2a7a"/><stop offset="0.567" stop-color="#ff155f"/><stop offset="0.6683" stop-color="#ff0045"/><stop offset="0.811" stop-color="#ff002f"/><stop offset="1" stop-color="#ff001e"/></linearGradient><linearGradient id="c56"><stop offset="0" stop-color="#00fff4"/><stop offset="0.06667" stop-color="#00f7ff"/><stop offset="0.2214" stop-color="#02c7ff"/><stop offset="0.2843" stop-color="#65b0ff"/><stop offset="0.3623" stop-color="#ed92ff"/><stop offset="0.3711" stop-color="#fa8dfc"/><stop offset="0.3786" stop-color="#ff85f3"/><stop offset="0.4138" stop-color="#ff5fc3"/><stop offset="0.4566" stop-color="#ff419b"/><stop offset="0.5082" stop-color="#ff287b"/><stop offset="0.5711" stop-color="#ff1361"/><stop offset="0.6667" stop-color="#ff0048"/><stop offset="0.8101" stop-color="#ff0031"/><stop offset="1" stop-color="#ff001f"/></linearGradient><linearGradient id="c57"><stop offset="0" stop-color="#00fef9"/><stop offset="0.06321" stop-color="#00f2ff"/><stop offset="0.2212" stop-color="#02c1ff"/><stop offset="0.2301" stop-color="#0dbeff"/><stop offset="0.2845" stop-color="#62abff"/><stop offset="0.3666" stop-color="#ee8cff"/><stop offset="0.3755" stop-color="#fa87fc"/><stop offset="0.3831" stop-color="#ff7ff3"/><stop offset="0.4185" stop-color="#ff5bc4"/><stop offset="0.4614" stop-color="#ff3e9d"/><stop offset="0.5133" stop-color="#ff257d"/><stop offset="0.5765" stop-color="#ff1263"/><stop offset="0.665" stop-color="#ff004b"/><stop offset="0.8091" stop-color="#f03"/><stop offset="1" stop-color="#ff0021"/></linearGradient><linearGradient id="c58"><stop offset="0" stop-color="#00fcfd"/><stop offset="0.08767" stop-color="#00e5ff"/><stop offset="0.2224" stop-color="#02bbff"/><stop offset="0.2897" stop-color="#67a4ff"/><stop offset="0.371" stop-color="#ee85ff"/><stop offset="0.3812" stop-color="#fc80fb"/><stop offset="0.3875" stop-color="#ff79f4"/><stop offset="0.4231" stop-color="#ff57c5"/><stop offset="0.4663" stop-color="#ff3a9e"/><stop offset="0.5184" stop-color="#ff237e"/><stop offset="0.5807" stop-color="#ff1064"/><stop offset="0.6645" stop-color="#ff004d"/><stop offset="0.8081" stop-color="#ff0035"/><stop offset="1" stop-color="#f02"/></linearGradient><linearGradient id="c59"><stop offset="0" stop-color="#00f6ff"/><stop offset="0.2212" stop-color="#02b6ff"/><stop offset="0.2302" stop-color="#0cb3ff"/><stop offset="0.289" stop-color="#649fff"/><stop offset="0.3747" stop-color="#ee7fff"/><stop offset="0.3887" stop-color="#fe76f7"/><stop offset="0.4258" stop-color="#ff54c7"/><stop offset="0.468" stop-color="#ff39a1"/><stop offset="0.5205" stop-color="#ff2281"/><stop offset="0.5831" stop-color="#ff0f67"/><stop offset="0.6573" stop-color="#ff0051"/><stop offset="0.7519" stop-color="#ff003f"/><stop offset="0.8645" stop-color="#ff0030"/><stop offset="1" stop-color="#ff0024"/></linearGradient><linearGradient id="c60"><stop offset="0" stop-color="#00f1ff"/><stop offset="0.2224" stop-color="#02b0ff"/><stop offset="0.2943" stop-color="#6998ff"/><stop offset="0.3792" stop-color="#ee7aff"/><stop offset="0.3933" stop-color="#fe71f7"/><stop offset="0.4306" stop-color="#ff50c8"/><stop offset="0.473" stop-color="#ff36a2"/><stop offset="0.5244" stop-color="#ff2083"/><stop offset="0.5874" stop-color="#ff0e69"/><stop offset="0.6568" stop-color="#ff0054"/><stop offset="0.7558" stop-color="#ff0041"/><stop offset="0.8663" stop-color="#ff0032"/><stop offset="1" stop-color="#ff0025"/></linearGradient><linearGradient id="c61"><stop offset="0" stop-color="#00ebff"/><stop offset="0.2222" stop-color="#02abff"/><stop offset="0.2946" stop-color="#6693ff"/><stop offset="0.3837" stop-color="#ef74ff"/><stop offset="0.3979" stop-color="#fe6bf8"/><stop offset="0.4354" stop-color="#ff4cc9"/><stop offset="0.478" stop-color="#ff33a4"/><stop offset="0.5297" stop-color="#ff1e84"/><stop offset="0.593" stop-color="#ff0c6a"/><stop offset="0.655" stop-color="#ff0058"/><stop offset="0.7597" stop-color="#ff0042"/><stop offset="0.8682" stop-color="#f03"/><stop offset="1" stop-color="#ff0027"/></linearGradient><linearGradient id="c62"><stop offset="0" stop-color="#00e5ff"/><stop offset="0.2234" stop-color="#02a6ff"/><stop offset="0.2987" stop-color="#698eff"/><stop offset="0.3883" stop-color="#ef6fff"/><stop offset="0.4026" stop-color="#fe66f8"/><stop offset="0.4403" stop-color="#ff48ca"/><stop offset="0.4831" stop-color="#ff30a5"/><stop offset="0.5351" stop-color="#ff1c86"/><stop offset="0.5974" stop-color="#ff0b6c"/><stop offset="0.6532" stop-color="#ff005b"/><stop offset="0.7623" stop-color="#f04"/><stop offset="0.8701" stop-color="#ff0035"/><stop offset="1" stop-color="#ff0028"/></linearGradient><linearGradient id="c63"><stop offset="0" stop-color="#00dfff"/><stop offset="0.2229" stop-color="#02a1ff"/><stop offset="0.2986" stop-color="#6689ff"/><stop offset="0.3924" stop-color="#ef69ff"/><stop offset="0.4068" stop-color="#fe61f8"/><stop offset="0.4446" stop-color="#ff44cb"/><stop offset="0.4876" stop-color="#ff2da6"/><stop offset="0.5398" stop-color="#ff1a87"/><stop offset="0.601" stop-color="#ff0a6d"/><stop offset="0.6532" stop-color="#ff005d"/><stop offset="0.7653" stop-color="#ff0045"/><stop offset="1" stop-color="#ff002a"/></linearGradient><linearGradient id="c64"><stop offset="0" stop-color="#00daff"/><stop offset="0.2241" stop-color="#029dff"/><stop offset="0.3041" stop-color="#6a84ff"/><stop offset="0.3971" stop-color="#f064ff"/><stop offset="0.4115" stop-color="#fe5df8"/><stop offset="0.4495" stop-color="#ff41cb"/><stop offset="0.4928" stop-color="#ff2ba7"/><stop offset="0.5452" stop-color="#ff1888"/><stop offset="0.6068" stop-color="#ff086f"/><stop offset="0.6527" stop-color="#ff0060"/><stop offset="0.7693" stop-color="#ff0047"/><stop offset="1" stop-color="#ff002b"/></linearGradient><linearGradient id="c65"><stop offset="0" stop-color="#00d4ff"/><stop offset="0.223" stop-color="#0298ff"/><stop offset="0.3034" stop-color="#6780ff"/><stop offset="0.4011" stop-color="#f060ff"/><stop offset="0.4156" stop-color="#fe58f8"/><stop offset="0.4538" stop-color="#ff3dcc"/><stop offset="0.4974" stop-color="#ff28a8"/><stop offset="0.5488" stop-color="#ff168a"/><stop offset="0.6108" stop-color="#ff0770"/><stop offset="0.6504" stop-color="#ff0064"/><stop offset="0.7718" stop-color="#ff0049"/><stop offset="1" stop-color="#ff002d"/></linearGradient><linearGradient id="c66"><stop offset="0" stop-color="#00cfff"/><stop offset="0.2241" stop-color="#0294ff"/><stop offset="0.309" stop-color="#6c7aff"/><stop offset="0.4058" stop-color="#f05bff"/><stop offset="0.4204" stop-color="#fe54f8"/><stop offset="0.4589" stop-color="#ff3acd"/><stop offset="0.5027" stop-color="#ff25a9"/><stop offset="0.5544" stop-color="#ff148b"/><stop offset="0.6154" stop-color="#ff0572"/><stop offset="0.6485" stop-color="#ff0067"/><stop offset="0.7745" stop-color="#ff004b"/><stop offset="1" stop-color="#ff002f"/></linearGradient><linearGradient id="c67"><stop offset="0" stop-color="#00cbff"/><stop offset="0.224" stop-color="#0290ff"/><stop offset="0.3093" stop-color="#6977ff"/><stop offset="0.4107" stop-color="#f056ff"/><stop offset="0.4253" stop-color="#fe4ff8"/><stop offset="0.4653" stop-color="#ff36cc"/><stop offset="0.508" stop-color="#ff23aa"/><stop offset="0.56" stop-color="#ff128c"/><stop offset="0.62" stop-color="#ff0474"/><stop offset="0.6467" stop-color="#ff006b"/><stop offset="0.7787" stop-color="#ff004c"/><stop offset="1" stop-color="#ff0030"/></linearGradient><linearGradient id="c68"><stop offset="0" stop-color="#00c6ff"/><stop offset="0.2252" stop-color="#028cff"/><stop offset="0.3137" stop-color="#6b72ff"/><stop offset="0.4155" stop-color="#f052ff"/><stop offset="0.4303" stop-color="#fe4bf9"/><stop offset="0.4692" stop-color="#ff34ce"/><stop offset="0.5121" stop-color="#ff21ac"/><stop offset="0.5643" stop-color="#ff118e"/><stop offset="0.6247" stop-color="#ff0375"/><stop offset="0.6971" stop-color="#ff0060"/><stop offset="0.7815" stop-color="#ff004e"/><stop offset="1" stop-color="#ff0032"/></linearGradient><linearGradient id="c69"><stop offset="0" stop-color="#00c1ff"/><stop offset="0.224" stop-color="#0188ff"/><stop offset="0.3131" stop-color="#696fff"/><stop offset="0.4197" stop-color="#f14eff"/><stop offset="0.4345" stop-color="#fe47f9"/><stop offset="0.4737" stop-color="#ff31cf"/><stop offset="0.5169" stop-color="#ff1fad"/><stop offset="0.5682" stop-color="#ff0f90"/><stop offset="0.6289" stop-color="#ff0277"/><stop offset="0.7004" stop-color="#ff0062"/><stop offset="0.7841" stop-color="#ff0050"/><stop offset="1" stop-color="#f03"/></linearGradient><linearGradient id="c70"><stop offset="0" stop-color="#00bdff"/><stop offset="0.2252" stop-color="#0284ff"/><stop offset="0.3189" stop-color="#6c6aff"/><stop offset="0.4247" stop-color="#f14aff"/><stop offset="0.4396" stop-color="#fe43f9"/><stop offset="0.479" stop-color="#ff2ed0"/><stop offset="0.5224" stop-color="#ff1cae"/><stop offset="0.5739" stop-color="#ff0d91"/><stop offset="0.6336" stop-color="#ff0179"/><stop offset="0.7042" stop-color="#ff0064"/><stop offset="0.7883" stop-color="#ff0051"/><stop offset="1" stop-color="#ff0035"/></linearGradient><linearGradient id="c71"><stop offset="0" stop-color="#00b8ff"/><stop offset="0.2251" stop-color="#0181ff"/><stop offset="0.3192" stop-color="#6a67ff"/><stop offset="0.4297" stop-color="#f146ff"/><stop offset="0.4447" stop-color="#fe40f9"/><stop offset="0.4843" stop-color="#ff2bd0"/><stop offset="0.528" stop-color="#ff1aaf"/><stop offset="0.5784" stop-color="#ff0c93"/><stop offset="0.6385" stop-color="#ff007a"/><stop offset="0.7094" stop-color="#ff0065"/><stop offset="0.7913" stop-color="#ff0053"/><stop offset="1" stop-color="#ff0037"/></linearGradient><linearGradient id="c72"><stop offset="0" stop-color="#00b4ff"/><stop offset="0.2263" stop-color="#027dff"/><stop offset="0.3251" stop-color="#6e62ff"/><stop offset="0.4348" stop-color="#f142ff"/><stop offset="0.4499" stop-color="#fe3cf9"/><stop offset="0.4897" stop-color="#ff28d1"/><stop offset="0.5322" stop-color="#ff18b1"/><stop offset="0.583" stop-color="#ff0a95"/><stop offset="0.6433" stop-color="#ff007c"/><stop offset="0.7133" stop-color="#ff0067"/><stop offset="0.7942" stop-color="#f05"/><stop offset="1" stop-color="#ff0039"/></linearGradient><linearGradient id="c73"><stop offset="0" stop-color="#00b0ff"/><stop offset="0.2251" stop-color="#017aff"/><stop offset="0.3246" stop-color="#6b5fff"/><stop offset="0.4392" stop-color="#f13eff"/><stop offset="0.4544" stop-color="#fe38f9"/><stop offset="0.4945" stop-color="#ff25d2"/><stop offset="0.5373" stop-color="#ff16b2"/><stop offset="0.5884" stop-color="#ff0996"/><stop offset="0.6478" stop-color="#ff007d"/><stop offset="0.7169" stop-color="#ff0069"/><stop offset="0.797" stop-color="#ff0057"/><stop offset="1" stop-color="#ff003a"/></linearGradient><linearGradient id="c74"><stop offset="0" stop-color="#00acff"/><stop offset="0.2264" stop-color="#0277ff"/><stop offset="0.3292" stop-color="#6d5bff"/><stop offset="0.4444" stop-color="#f23bff"/><stop offset="0.4597" stop-color="#fe35f9"/><stop offset="0.5" stop-color="#ff22d2"/><stop offset="0.5431" stop-color="#ff14b3"/><stop offset="0.6194" stop-color="#ff028c"/><stop offset="0.6528" stop-color="#ff007f"/><stop offset="0.7222" stop-color="#ff006a"/><stop offset="0.8014" stop-color="#ff0058"/><stop offset="1" stop-color="#ff003c"/></linearGradient><linearGradient id="c75"><stop offset="0" stop-color="#00a8ff"/><stop offset="0.2263" stop-color="#0174ff"/><stop offset="0.3296" stop-color="#6b59ff"/><stop offset="0.4497" stop-color="#f237ff"/><stop offset="0.4651" stop-color="#fe32f9"/><stop offset="0.5056" stop-color="#ff20d3"/><stop offset="0.5489" stop-color="#ff12b3"/><stop offset="0.6201" stop-color="#ff018f"/><stop offset="0.6578" stop-color="#ff0081"/><stop offset="0.7263" stop-color="#ff006c"/><stop offset="0.8045" stop-color="#ff005a"/><stop offset="1" stop-color="#ff003e"/></linearGradient><linearGradient id="c76"><stop offset="0" stop-color="#00a4ff"/><stop offset="0.2264" stop-color="#0270ff"/><stop offset="0.3347" stop-color="#6e55ff"/><stop offset="0.4543" stop-color="#f234ff"/><stop offset="0.4698" stop-color="#fe2efa"/><stop offset="0.5105" stop-color="#ff1dd3"/><stop offset="0.5527" stop-color="#ff10b5"/><stop offset="0.6188" stop-color="#ff0193"/><stop offset="0.661" stop-color="#ff0083"/><stop offset="0.7286" stop-color="#ff006e"/><stop offset="0.8059" stop-color="#ff005c"/><stop offset="1" stop-color="#ff0040"/></linearGradient><linearGradient id="c77"><stop offset="0" stop-color="#00a0ff"/><stop offset="0.2263" stop-color="#016dff"/><stop offset="0.3352" stop-color="#6c52ff"/><stop offset="0.4597" stop-color="#f231ff"/><stop offset="0.4752" stop-color="#fe2bfa"/><stop offset="0.5163" stop-color="#ff1bd4"/><stop offset="0.5587" stop-color="#ff0eb6"/><stop offset="0.6181" stop-color="#ff0197"/><stop offset="0.6662" stop-color="#ff0084"/><stop offset="0.7327" stop-color="#ff0070"/><stop offset="0.8091" stop-color="#ff005e"/><stop offset="1" stop-color="#ff0041"/></linearGradient><linearGradient id="c78"><stop offset="0" stop-color="#009dff"/><stop offset="0.2273" stop-color="#026aff"/><stop offset="0.3395" stop-color="#6e4fff"/><stop offset="0.4645" stop-color="#f22dff"/><stop offset="0.4801" stop-color="#fe28fa"/><stop offset="0.5213" stop-color="#ff18d4"/><stop offset="0.5639" stop-color="#ff0cb7"/><stop offset="0.6179" stop-color="#ff019a"/><stop offset="0.6705" stop-color="#ff0086"/><stop offset="0.7372" stop-color="#ff0071"/><stop offset="0.8125" stop-color="#ff0060"/><stop offset="1" stop-color="#ff0043"/></linearGradient><linearGradient id="c79"><stop offset="0" stop-color="#09f"/><stop offset="0.226" stop-color="#0168ff"/><stop offset="0.3405" stop-color="#6d4cff"/><stop offset="0.4692" stop-color="#f22aff"/><stop offset="0.485" stop-color="#fe25fa"/><stop offset="0.5265" stop-color="#ff16d5"/><stop offset="0.568" stop-color="#ff0ab8"/><stop offset="0.6166" stop-color="#ff009f"/><stop offset="0.6753" stop-color="#ff0087"/><stop offset="0.7411" stop-color="#ff0073"/><stop offset="0.8155" stop-color="#ff0062"/><stop offset="1" stop-color="#ff0045"/></linearGradient><linearGradient id="c80"><stop offset="0" stop-color="#0096ff"/><stop offset="0.2273" stop-color="#0265ff"/><stop offset="0.3453" stop-color="#6f49ff"/><stop offset="0.4748" stop-color="#f327ff"/><stop offset="0.4906" stop-color="#fe22fa"/><stop offset="0.5324" stop-color="#ff14d6"/><stop offset="0.5741" stop-color="#ff08b9"/><stop offset="0.6144" stop-color="#ff00a4"/><stop offset="0.6791" stop-color="#ff0089"/><stop offset="0.7439" stop-color="#ff0075"/><stop offset="0.8187" stop-color="#ff0063"/><stop offset="1" stop-color="#ff0047"/></linearGradient><linearGradient id="c81"><stop offset="0" stop-color="#0092ff"/><stop offset="0.2272" stop-color="#0162ff"/><stop offset="0.3459" stop-color="#6d46ff"/><stop offset="0.4805" stop-color="#f324ff"/><stop offset="0.4964" stop-color="#fe1ffa"/><stop offset="0.5369" stop-color="#ff12d7"/><stop offset="0.5789" stop-color="#ff07bb"/><stop offset="0.6151" stop-color="#ff00a7"/><stop offset="0.6845" stop-color="#ff008a"/><stop offset="0.822" stop-color="#ff0065"/><stop offset="1" stop-color="#ff0049"/></linearGradient><linearGradient id="c82"><stop offset="0" stop-color="#008fff"/><stop offset="0.2274" stop-color="#0260ff"/><stop offset="0.3513" stop-color="#7043ff"/><stop offset="0.4854" stop-color="#f322ff"/><stop offset="0.5015" stop-color="#fe1dfa"/><stop offset="0.5423" stop-color="#ff10d8"/><stop offset="0.5845" stop-color="#ff05bc"/><stop offset="0.6137" stop-color="#ff00ac"/><stop offset="0.6895" stop-color="#ff008c"/><stop offset="0.8251" stop-color="#ff0067"/><stop offset="1" stop-color="#ff004b"/></linearGradient><linearGradient id="c83"><stop offset="0" stop-color="#008cff"/><stop offset="0.2273" stop-color="#015dff"/><stop offset="0.3519" stop-color="#6e41ff"/><stop offset="0.4912" stop-color="#f31fff"/><stop offset="0.5073" stop-color="#fe1afa"/><stop offset="0.5484" stop-color="#ff0dd8"/><stop offset="0.5909" stop-color="#ff03bc"/><stop offset="0.6393" stop-color="#ff00a3"/><stop offset="0.6935" stop-color="#ff008e"/><stop offset="0.827" stop-color="#ff0069"/><stop offset="1" stop-color="#ff004d"/></linearGradient><linearGradient id="c84"><stop offset="0" stop-color="#08f"/><stop offset="0.2275" stop-color="#025bff"/><stop offset="0.356" stop-color="#703eff"/><stop offset="0.4963" stop-color="#f31cff"/><stop offset="0.5126" stop-color="#fe17fa"/><stop offset="0.5539" stop-color="#ff0bd9"/><stop offset="0.5953" stop-color="#ff02be"/><stop offset="0.644" stop-color="#ff00a5"/><stop offset="0.6987" stop-color="#ff008f"/><stop offset="0.8301" stop-color="#ff006b"/><stop offset="1" stop-color="#ff004f"/></linearGradient><linearGradient id="c85"><stop offset="0" stop-color="#0085ff"/><stop offset="0.2273" stop-color="#0158ff"/><stop offset="0.3581" stop-color="#6f3cff"/><stop offset="0.5022" stop-color="#f319ff"/><stop offset="0.5186" stop-color="#fe15fa"/><stop offset="0.5602" stop-color="#ff09d9"/><stop offset="0.6018" stop-color="#ff00be"/><stop offset="0.6493" stop-color="#ff00a6"/><stop offset="0.7028" stop-color="#ff0091"/><stop offset="0.8336" stop-color="#ff006d"/><stop offset="1" stop-color="#ff0051"/></linearGradient><linearGradient id="c86"><stop offset="0" stop-color="#0082ff"/><stop offset="0.2275" stop-color="#0256ff"/><stop offset="0.3623" stop-color="#7139ff"/><stop offset="0.5075" stop-color="#f317ff"/><stop offset="0.524" stop-color="#fe13fa"/><stop offset="0.5659" stop-color="#ff07d9"/><stop offset="0.6063" stop-color="#ff00c0"/><stop offset="0.6542" stop-color="#ff00a8"/><stop offset="0.7081" stop-color="#ff0093"/><stop offset="0.8368" stop-color="#ff006f"/><stop offset="1" stop-color="#ff0053"/></linearGradient><linearGradient id="c87"><stop offset="0" stop-color="#007fff"/><stop offset="0.2274" stop-color="#0154ff"/><stop offset="0.363" stop-color="#6e37ff"/><stop offset="0.5136" stop-color="#f314ff"/><stop offset="0.5301" stop-color="#fe10fa"/><stop offset="0.5723" stop-color="#ff05da"/><stop offset="0.613" stop-color="#ff00c1"/><stop offset="0.6596" stop-color="#ff00a9"/><stop offset="0.7123" stop-color="#ff0095"/><stop offset="0.8389" stop-color="#ff0071"/><stop offset="1" stop-color="#f05"/></linearGradient><linearGradient id="c88"><stop offset="0" stop-color="#007cff"/><stop offset="0.2276" stop-color="#0251ff"/><stop offset="0.3687" stop-color="#7134ff"/><stop offset="0.519" stop-color="#f412ff"/><stop offset="0.5357" stop-color="#fe0efb"/><stop offset="0.5888" stop-color="#ff01d3"/><stop offset="0.6176" stop-color="#ff00c2"/><stop offset="0.7162" stop-color="#ff0096"/><stop offset="0.8422" stop-color="#ff0073"/><stop offset="1" stop-color="#ff0057"/></linearGradient><linearGradient id="c89"><stop offset="0" stop-color="#007aff"/><stop offset="0.2275" stop-color="#014fff"/><stop offset="0.3695" stop-color="#6f32ff"/><stop offset="0.5252" stop-color="#f410ff"/><stop offset="0.542" stop-color="#fe0bfb"/><stop offset="0.5878" stop-color="#ff01d9"/><stop offset="0.6244" stop-color="#ff00c3"/><stop offset="0.7221" stop-color="#ff0098"/><stop offset="0.8458" stop-color="#ff0075"/><stop offset="1" stop-color="#ff0059"/></linearGradient><linearGradient id="c90"><stop offset="0" stop-color="#07f"/><stop offset="0.2289" stop-color="#024dff"/><stop offset="0.3748" stop-color="#7130ff"/><stop offset="0.5315" stop-color="#f40dff"/><stop offset="0.5484" stop-color="#fe09fb"/><stop offset="0.5883" stop-color="#ff01dd"/><stop offset="0.6298" stop-color="#ff00c4"/><stop offset="0.7266" stop-color="#ff009a"/><stop offset="0.8479" stop-color="#f07"/><stop offset="1" stop-color="#ff005b"/></linearGradient><linearGradient id="c91"><stop offset="0" stop-color="#0074ff"/><stop offset="0.2276" stop-color="#014bff"/><stop offset="0.3514" stop-color="#5d33ff"/><stop offset="0.5372" stop-color="#f40bff"/><stop offset="0.5542" stop-color="#fe07fb"/><stop offset="0.5867" stop-color="#ff00e3"/><stop offset="0.6347" stop-color="#ff00c5"/><stop offset="0.7307" stop-color="#ff009c"/><stop offset="0.8514" stop-color="#ff0079"/><stop offset="1" stop-color="#ff005e"/></linearGradient><linearGradient id="c92"><stop offset="0" stop-color="#0072ff"/><stop offset="0.2278" stop-color="#0249ff"/><stop offset="0.3557" stop-color="#5f30ff"/><stop offset="0.5429" stop-color="#f409ff"/><stop offset="0.5601" stop-color="#fe05fb"/><stop offset="0.5866" stop-color="#ff00e7"/><stop offset="0.6412" stop-color="#ff00c6"/><stop offset="0.7363" stop-color="#ff009d"/><stop offset="0.8549" stop-color="#ff007b"/><stop offset="1" stop-color="#ff0060"/></linearGradient><linearGradient id="c93"><stop offset="0" stop-color="#006fff"/><stop offset="0.2273" stop-color="#0147ff"/><stop offset="0.3574" stop-color="#5e2eff"/><stop offset="0.5486" stop-color="#f407ff"/><stop offset="0.5658" stop-color="#fe03fb"/><stop offset="0.6458" stop-color="#ff00c7"/><stop offset="0.7398" stop-color="#ff009f"/><stop offset="0.8574" stop-color="#ff007d"/><stop offset="1" stop-color="#ff0062"/></linearGradient><linearGradient id="c94"><stop offset="0" stop-color="#006cff"/><stop offset="0.2275" stop-color="#0245ff"/><stop offset="0.3618" stop-color="#602cff"/><stop offset="0.5545" stop-color="#f405ff"/><stop offset="0.5719" stop-color="#fe01fb"/><stop offset="0.6524" stop-color="#ff00c8"/><stop offset="0.7457" stop-color="#ff00a0"/><stop offset="0.8594" stop-color="#ff007f"/><stop offset="1" stop-color="#ff0064"/></linearGradient><linearGradient id="c95"><stop offset="0" stop-color="#006aff"/><stop offset="0.2273" stop-color="#0143ff"/><stop offset="0.3625" stop-color="#5e2aff"/><stop offset="0.5612" stop-color="#f403ff"/><stop offset="0.5787" stop-color="#fe00fb"/><stop offset="0.6582" stop-color="#ff00c9"/><stop offset="0.7504" stop-color="#ff00a2"/><stop offset="0.8633" stop-color="#ff0081"/><stop offset="1" stop-color="#f06"/></linearGradient><linearGradient id="c96"><stop offset="0" stop-color="#0068ff"/><stop offset="0.2276" stop-color="#0241ff"/><stop offset="0.3686" stop-color="#6128ff"/><stop offset="0.5673" stop-color="#f401ff"/><stop offset="0.5849" stop-color="#fe00fb"/><stop offset="0.6635" stop-color="#ff00cb"/><stop offset="0.7548" stop-color="#ff00a4"/><stop offset="0.8654" stop-color="#ff0084"/><stop offset="1" stop-color="#ff0069"/></linearGradient><linearGradient id="c97"><stop offset="0" stop-color="#0065ff"/><stop offset="0.2274" stop-color="#0140ff"/><stop offset="0.3694" stop-color="#5f26ff"/><stop offset="0.5581" stop-color="#e802ff"/><stop offset="0.5919" stop-color="#fe00fb"/><stop offset="0.671" stop-color="#ff00cb"/><stop offset="0.7597" stop-color="#ff00a6"/><stop offset="0.8694" stop-color="#ff0085"/><stop offset="1" stop-color="#ff006b"/></linearGradient><linearGradient id="c98"><stop offset="0" stop-color="#0063ff"/><stop offset="0.2276" stop-color="#013eff"/><stop offset="0.387" stop-color="#6a22ff"/><stop offset="0.5577" stop-color="#e401ff"/><stop offset="0.5984" stop-color="#fe00fb"/><stop offset="0.6764" stop-color="#f0c"/><stop offset="0.7642" stop-color="#ff00a7"/><stop offset="0.8715" stop-color="#f08"/><stop offset="1" stop-color="#ff006e"/></linearGradient><linearGradient id="c99"><stop offset="0" stop-color="#0061ff"/><stop offset="0.2279" stop-color="#023cff"/><stop offset="0.3869" stop-color="#6820ff"/><stop offset="0.5541" stop-color="#dd01ff"/><stop offset="0.5918" stop-color="#f800ff"/><stop offset="0.6049" stop-color="#fe00fb"/><stop offset="0.682" stop-color="#ff00ce"/><stop offset="0.7689" stop-color="#ff00a9"/><stop offset="0.8738" stop-color="#ff008a"/><stop offset="1" stop-color="#ff0070"/></linearGradient><linearGradient id="c100"><stop offset="0" stop-color="#005eff"/><stop offset="0.2277" stop-color="#013bff"/><stop offset="0.3828" stop-color="#6320ff"/><stop offset="0.5528" stop-color="#d701ff"/><stop offset="0.6089" stop-color="#fd00fd"/><stop offset="0.6881" stop-color="#ff00cf"/><stop offset="0.7739" stop-color="#ff00ab"/><stop offset="0.8779" stop-color="#ff008c"/><stop offset="1" stop-color="#ff0073"/></linearGradient><linearGradient id="c101"><stop offset="0" stop-color="#005cff"/><stop offset="0.228" stop-color="#0239ff"/><stop offset="0.3827" stop-color="#621fff"/><stop offset="0.5491" stop-color="#d101ff"/><stop offset="0.6156" stop-color="#fd00fd"/><stop offset="0.6955" stop-color="#ff00cf"/><stop offset="0.7787" stop-color="#ff00ad"/><stop offset="0.8802" stop-color="#ff008f"/><stop offset="1" stop-color="#ff0075"/></linearGradient><linearGradient id="c102"><stop offset="0" stop-color="#005aff"/><stop offset="0.2265" stop-color="#0137ff"/><stop offset="0.3775" stop-color="#5d1eff"/><stop offset="0.5453" stop-color="#ca01ff"/><stop offset="0.6225" stop-color="#fd00fd"/><stop offset="0.7013" stop-color="#ff00d1"/><stop offset="0.7836" stop-color="#ff00af"/><stop offset="0.8826" stop-color="#ff0091"/><stop offset="1" stop-color="#ff0078"/></linearGradient><linearGradient id="c103"><stop offset="0" stop-color="#0058ff"/><stop offset="0.228" stop-color="#0236ff"/><stop offset="0.3784" stop-color="#5b1dff"/><stop offset="0.5422" stop-color="#c401ff"/><stop offset="0.6301" stop-color="#fd00fd"/><stop offset="0.7078" stop-color="#ff00d2"/><stop offset="0.7889" stop-color="#ff00b0"/><stop offset="0.8868" stop-color="#ff0093"/><stop offset="1" stop-color="#ff007a"/></linearGradient><linearGradient id="c104"><stop offset="0" stop-color="#0056ff"/><stop offset="0.2266" stop-color="#0134ff"/><stop offset="0.3731" stop-color="#571dff"/><stop offset="0.5383" stop-color="#be01ff"/><stop offset="0.6371" stop-color="#fd00fd"/><stop offset="0.7155" stop-color="#ff00d2"/><stop offset="0.7939" stop-color="#ff00b2"/><stop offset="0.8893" stop-color="#ff0095"/><stop offset="1" stop-color="#ff007d"/></linearGradient><linearGradient id="c105"><stop offset="0" stop-color="#0054ff"/><stop offset="0.2268" stop-color="#0233ff"/><stop offset="0.3729" stop-color="#551cff"/><stop offset="0.5344" stop-color="#b801ff"/><stop offset="0.6443" stop-color="#fd00fd"/><stop offset="0.7216" stop-color="#ff00d4"/><stop offset="0.799" stop-color="#ff00b4"/><stop offset="0.8918" stop-color="#ff0098"/><stop offset="1" stop-color="#ff0080"/></linearGradient><linearGradient id="c106"><stop offset="0" stop-color="#0052ff"/><stop offset="0.2266" stop-color="#0131ff"/><stop offset="0.3702" stop-color="#521bff"/><stop offset="0.5329" stop-color="#b401ff"/><stop offset="0.6522" stop-color="#fd00fd"/><stop offset="0.7284" stop-color="#ff00d5"/><stop offset="0.8045" stop-color="#ff00b6"/><stop offset="0.8945" stop-color="#ff009a"/><stop offset="1" stop-color="#ff0082"/></linearGradient><linearGradient id="c107"><stop offset="0" stop-color="#0050ff"/><stop offset="0.2269" stop-color="#0230ff"/><stop offset="0.37" stop-color="#511aff"/><stop offset="0.5288" stop-color="#ae01ff"/><stop offset="0.6597" stop-color="#fd00fd"/><stop offset="0.7347" stop-color="#ff00d6"/><stop offset="0.8098" stop-color="#ff00b8"/><stop offset="0.8988" stop-color="#ff009c"/><stop offset="1" stop-color="#ff0085"/></linearGradient><linearGradient id="c108"><stop offset="0" stop-color="#004eff"/><stop offset="0.225" stop-color="#012eff"/><stop offset="0.3656" stop-color="#4d1aff"/><stop offset="0.5272" stop-color="#ab01ff"/><stop offset="0.6661" stop-color="#fd00fd"/><stop offset="0.7417" stop-color="#ff00d6"/><stop offset="0.8137" stop-color="#ff00b9"/><stop offset="0.8998" stop-color="#ff009f"/><stop offset="1" stop-color="#f08"/></linearGradient><linearGradient id="c109"><stop offset="0" stop-color="#004cff"/><stop offset="0.2265" stop-color="#022dff"/><stop offset="0.3664" stop-color="#4c18ff"/><stop offset="0.5239" stop-color="#a501ff"/><stop offset="0.6743" stop-color="#fd00fd"/><stop offset="0.7487" stop-color="#ff00d7"/><stop offset="0.8195" stop-color="#f0b"/><stop offset="0.9044" stop-color="#ff00a1"/><stop offset="1" stop-color="#ff008a"/></linearGradient><linearGradient id="c110"><stop offset="0" stop-color="#004aff"/><stop offset="0.225" stop-color="#012cff"/><stop offset="0.3607" stop-color="#4818ff"/><stop offset="0.5196" stop-color="#a001ff"/><stop offset="0.6821" stop-color="#fd00fd"/><stop offset="0.7554" stop-color="#ff00d9"/><stop offset="0.825" stop-color="#ff00bd"/><stop offset="0.9071" stop-color="#ff00a4"/><stop offset="1" stop-color="#ff008d"/></linearGradient><linearGradient id="c111"><stop offset="0" stop-color="#0048ff"/><stop offset="0.2252" stop-color="#022aff"/><stop offset="0.5153" stop-color="#9b01ff"/><stop offset="0.6901" stop-color="#fd00fd"/><stop offset="0.7622" stop-color="#ff00da"/><stop offset="0.8306" stop-color="#ff00bf"/><stop offset="0.9099" stop-color="#ff00a6"/><stop offset="1" stop-color="#ff0090"/></linearGradient><linearGradient id="c112"><stop offset="0" stop-color="#0046ff"/><stop offset="0.2236" stop-color="#0129ff"/><stop offset="0.5109" stop-color="#9601ff"/><stop offset="0.6982" stop-color="#fd00fd"/><stop offset="0.7691" stop-color="#ff00db"/><stop offset="0.8345" stop-color="#ff00c1"/><stop offset="0.9127" stop-color="#ff00a9"/><stop offset="1" stop-color="#ff0093"/></linearGradient><linearGradient id="c113"><stop offset="0" stop-color="#0045ff"/><stop offset="0.2253" stop-color="#0228ff"/><stop offset="0.5073" stop-color="#9101ff"/><stop offset="0.707" stop-color="#fd00fd"/><stop offset="0.7766" stop-color="#ff00dc"/><stop offset="0.8407" stop-color="#ff00c3"/><stop offset="0.9158" stop-color="#ff00ab"/><stop offset="1" stop-color="#ff0096"/></linearGradient><linearGradient id="c114"><stop offset="0" stop-color="#0043ff"/><stop offset="0.2255" stop-color="#0226ff"/><stop offset="0.5028" stop-color="#8c01ff"/><stop offset="0.7079" stop-color="#fb00ff"/><stop offset="0.7264" stop-color="#ff00f9"/><stop offset="0.7856" stop-color="#ff00dc"/><stop offset="0.8503" stop-color="#ff00c3"/><stop offset="1" stop-color="#f09"/></linearGradient><linearGradient id="c115"><stop offset="0" stop-color="#0041ff"/><stop offset="0.2239" stop-color="#0225ff"/><stop offset="0.5" stop-color="#80f"/><stop offset="0.7164" stop-color="#fb00ff"/><stop offset="0.7351" stop-color="#ff00f9"/><stop offset="0.7929" stop-color="#f0d"/><stop offset="0.8563" stop-color="#ff00c5"/><stop offset="1" stop-color="#ff009d"/></linearGradient><linearGradient id="c116"><stop offset="0" stop-color="#003fff"/><stop offset="0.226" stop-color="#0324ff"/><stop offset="0.4953" stop-color="#8400ff"/><stop offset="0.725" stop-color="#fb00ff"/><stop offset="0.7439" stop-color="#ff00f9"/><stop offset="0.8004" stop-color="#ff00de"/><stop offset="0.8625" stop-color="#ff00c7"/><stop offset="1" stop-color="#ff00a0"/></linearGradient><linearGradient id="c117"><stop offset="0" stop-color="#003eff"/><stop offset="0.2258" stop-color="#0223ff"/><stop offset="0.4915" stop-color="#7f00ff"/><stop offset="0.7343" stop-color="#fb00ff"/><stop offset="0.7533" stop-color="#ff00f9"/><stop offset="0.8691" stop-color="#ff00c9"/><stop offset="1" stop-color="#ff00a3"/></linearGradient><linearGradient id="c118"><stop offset="0" stop-color="#003cff"/><stop offset="0.2261" stop-color="#0321ff"/><stop offset="0.4866" stop-color="#7b00ff"/><stop offset="0.7433" stop-color="#fb00ff"/><stop offset="0.7625" stop-color="#ff00f9"/><stop offset="0.8755" stop-color="#ff00ca"/><stop offset="1" stop-color="#ff00a6"/></linearGradient><linearGradient id="c119"><stop offset="0" stop-color="#003aff"/><stop offset="0.2244" stop-color="#0220ff"/><stop offset="0.4816" stop-color="#7600ff"/><stop offset="0.7524" stop-color="#fb00ff"/><stop offset="0.7718" stop-color="#ff00f9"/><stop offset="0.8801" stop-color="#ff00cd"/><stop offset="1" stop-color="#f0a"/></linearGradient><linearGradient id="c120"><stop offset="0" stop-color="#0039ff"/><stop offset="0.2246" stop-color="#031fff"/><stop offset="0.4766" stop-color="#7200ff"/><stop offset="0.7617" stop-color="#fb00ff"/><stop offset="0.7812" stop-color="#ff00f9"/><stop offset="0.8867" stop-color="#ff00ce"/><stop offset="1" stop-color="#ff00ad"/></linearGradient><linearGradient id="c121"><stop offset="0" stop-color="#0037ff"/><stop offset="0.2229" stop-color="#021eff"/><stop offset="0.4714" stop-color="#6e00ff"/><stop offset="0.7712" stop-color="#fb00ff"/><stop offset="0.7909" stop-color="#ff00f9"/><stop offset="0.8935" stop-color="#ff00d0"/><stop offset="1" stop-color="#ff00b1"/></linearGradient><linearGradient id="c122"><stop offset="0" stop-color="#0036ff"/><stop offset="0.2247" stop-color="#031dff"/><stop offset="0.4672" stop-color="#6a00ff"/><stop offset="0.7813" stop-color="#fb00ff"/><stop offset="0.8012" stop-color="#ff00f9"/><stop offset="0.9006" stop-color="#ff00d2"/><stop offset="1" stop-color="#ff00b4"/></linearGradient><linearGradient id="c123"><stop offset="0" stop-color="#0034ff"/><stop offset="0.2224" stop-color="#021cff"/><stop offset="0.4609" stop-color="#60f"/><stop offset="0.7896" stop-color="#fb00ff"/><stop offset="0.8096" stop-color="#ff00f9"/><stop offset="0.9058" stop-color="#ff00d3"/><stop offset="1" stop-color="#ff00b7"/></linearGradient><linearGradient id="c124"><stop offset="0" stop-color="#03f"/><stop offset="0.2186" stop-color="#011bff"/><stop offset="0.4575" stop-color="#6300ff"/><stop offset="0.8016" stop-color="#fc00fe"/><stop offset="0.8198" stop-color="#ff00f9"/><stop offset="0.9109" stop-color="#ff00d6"/><stop offset="1" stop-color="#f0b"/></linearGradient><linearGradient id="c125"><stop offset="0" stop-color="#0031ff"/><stop offset="0.2168" stop-color="#011aff"/><stop offset="0.4519" stop-color="#5f00ff"/><stop offset="0.8119" stop-color="#fc00fe"/><stop offset="0.8344" stop-color="#ff00f8"/><stop offset="0.9121" stop-color="#ff00da"/><stop offset="1" stop-color="#ff00bf"/></linearGradient><linearGradient id="c126"><stop offset="0" stop-color="#0030ff"/><stop offset="0.2169" stop-color="#0119ff"/><stop offset="0.4463" stop-color="#5b00ff"/><stop offset="0.8223" stop-color="#fc00fe"/><stop offset="0.845" stop-color="#ff00f8"/><stop offset="0.9174" stop-color="#ff00dc"/><stop offset="1" stop-color="#ff00c2"/></linearGradient><linearGradient id="c127"><stop offset="0" stop-color="#002eff"/><stop offset="0.2167" stop-color="#0118ff"/><stop offset="0.4417" stop-color="#5700ff"/><stop offset="0.8333" stop-color="#fc00fe"/><stop offset="0.8562" stop-color="#ff00f8"/><stop offset="0.925" stop-color="#ff00de"/><stop offset="1" stop-color="#ff00c6"/></linearGradient><linearGradient id="c128"><stop offset="0" stop-color="#002dff"/><stop offset="0.2168" stop-color="#0117ff"/><stop offset="0.44" stop-color="#50f"/><stop offset="0.8442" stop-color="#fc00ff"/><stop offset="0.8674" stop-color="#ff00f8"/><stop offset="1" stop-color="#ff00ca"/></linearGradient><linearGradient id="c129"><stop offset="0" stop-color="#002cff"/><stop offset="0.2149" stop-color="#0116ff"/><stop offset="0.434" stop-color="#5200ff"/><stop offset="0.8553" stop-color="#fc00ff"/><stop offset="0.8766" stop-color="#ff00f9"/><stop offset="1" stop-color="#ff00ce"/></linearGradient><linearGradient id="c130"><stop offset="0" stop-color="#002aff"/><stop offset="0.2151" stop-color="#0115ff"/><stop offset="0.428" stop-color="#4e00ff"/><stop offset="0.8667" stop-color="#fc00ff"/><stop offset="0.8882" stop-color="#ff00f9"/><stop offset="1" stop-color="#ff00d2"/></linearGradient><linearGradient id="c131"><stop offset="0" stop-color="#0029ff"/><stop offset="0.2152" stop-color="#0214ff"/><stop offset="0.4217" stop-color="#4b00ff"/><stop offset="0.8783" stop-color="#fc00ff"/><stop offset="0.8978" stop-color="#ff00fa"/><stop offset="1" stop-color="#ff00d7"/></linearGradient><linearGradient id="c132"><stop offset="0" stop-color="#0027ff"/><stop offset="0.2132" stop-color="#0113ff"/><stop offset="0.4154" stop-color="#4800ff"/><stop offset="0.8901" stop-color="#fc00ff"/><stop offset="0.9099" stop-color="#ff00fa"/><stop offset="1" stop-color="#ff00db"/></linearGradient><linearGradient id="c133"><stop offset="0" stop-color="#0026ff"/><stop offset="0.2156" stop-color="#0212ff"/><stop offset="0.4111" stop-color="#4500ff"/><stop offset="0.9022" stop-color="#fc00ff"/><stop offset="1" stop-color="#ff00df"/></linearGradient><linearGradient id="c134"><stop offset="0" stop-color="#0025ff"/><stop offset="0.2157" stop-color="#0211ff"/><stop offset="0.4045" stop-color="#4200ff"/><stop offset="0.6539" stop-color="#9a00ff"/><stop offset="0.9146" stop-color="#fc00ff"/><stop offset="1" stop-color="#ff00e4"/></linearGradient><linearGradient id="c135"><stop offset="0" stop-color="#0024ff"/><stop offset="0.2136" stop-color="#0210ff"/><stop offset="0.3977" stop-color="#3f00ff"/><stop offset="0.6614" stop-color="#9a00ff"/><stop offset="0.9205" stop-color="#fa00ff"/><stop offset="0.9432" stop-color="#ff00fb"/><stop offset="1" stop-color="#ff00e8"/></linearGradient><linearGradient id="c136"><stop offset="0" stop-color="#02f"/><stop offset="0.2156" stop-color="#0210ff"/><stop offset="0.3922" stop-color="#3b00ff"/><stop offset="0.6651" stop-color="#9800ff"/><stop offset="0.9335" stop-color="#fa00ff"/><stop offset="0.9541" stop-color="#fe00fc"/><stop offset="1" stop-color="#ff00ed"/></linearGradient><linearGradient id="c137"><stop offset="0" stop-color="#0021ff"/><stop offset="0.2135" stop-color="#020fff"/><stop offset="0.3852" stop-color="#3800ff"/><stop offset="0.6682" stop-color="#9700ff"/><stop offset="0.9443" stop-color="#f900ff"/><stop offset="0.9675" stop-color="#fe00fc"/><stop offset="1" stop-color="#ff00f1"/></linearGradient><linearGradient id="c138"><stop offset="0" stop-color="#0020ff"/><stop offset="0.2131" stop-color="#020eff"/><stop offset="0.377" stop-color="#3500ff"/><stop offset="0.6698" stop-color="#9500ff"/><stop offset="0.9555" stop-color="#f900ff"/><stop offset="1" stop-color="#ff00f5"/></linearGradient><linearGradient id="c139"><stop offset="0" stop-color="#001fff"/><stop offset="0.2133" stop-color="#030dff"/><stop offset="0.3697" stop-color="#3200ff"/><stop offset="0.673" stop-color="#9400ff"/><stop offset="0.9668" stop-color="#f800ff"/><stop offset="1" stop-color="#ff00fa"/></linearGradient><linearGradient id="c140"><stop offset="0" stop-color="#001eff"/><stop offset="0.211" stop-color="#020cff"/><stop offset="0.3621" stop-color="#2f00ff"/><stop offset="0.6571" stop-color="#8c00ff"/><stop offset="1" stop-color="#fe00fe"/></linearGradient><linearGradient id="c141"><stop offset="0" stop-color="#001cff"/><stop offset="0.2112" stop-color="#030bff"/><stop offset="0.3544" stop-color="#2d00ff"/><stop offset="0.682" stop-color="#9100ff"/><stop offset="1" stop-color="#fa00ff"/></linearGradient><linearGradient id="c142"><stop offset="0" stop-color="#001bff"/><stop offset="0.2088" stop-color="#020bff"/><stop offset="0.3489" stop-color="#2a00ff"/><stop offset="0.6806" stop-color="#8e00ff"/><stop offset="1" stop-color="#f500ff"/></linearGradient><linearGradient id="c143"><stop offset="0" stop-color="#001aff"/><stop offset="0.209" stop-color="#030aff"/><stop offset="0.3408" stop-color="#2800ff"/><stop offset="0.6766" stop-color="#8a00ff"/><stop offset="1" stop-color="#f000ff"/></linearGradient><linearGradient id="c144"><stop offset="0" stop-color="#0019ff"/><stop offset="0.2065" stop-color="#0209ff"/><stop offset="0.3375" stop-color="#2600ff"/><stop offset="0.6751" stop-color="#80f"/><stop offset="1" stop-color="#eb00ff"/></linearGradient><linearGradient id="c145"><stop offset="0" stop-color="#0018ff"/><stop offset="0.2066" stop-color="#0308ff"/><stop offset="0.3291" stop-color="#2400ff"/><stop offset="0.6709" stop-color="#8400ff"/><stop offset="1" stop-color="#e700ff"/></linearGradient><linearGradient id="c146"><stop offset="0" stop-color="#0017ff"/><stop offset="0.2041" stop-color="#0208ff"/><stop offset="0.3204" stop-color="#2100ff"/><stop offset="0.6667" stop-color="#8000ff"/><stop offset="1" stop-color="#e200ff"/></linearGradient><linearGradient id="c147"><stop offset="0" stop-color="#0016ff"/><stop offset="0.2042" stop-color="#0307ff"/><stop offset="0.3115" stop-color="#1e00ff"/><stop offset="0.6623" stop-color="#7d00ff"/><stop offset="1" stop-color="#de00ff"/></linearGradient><linearGradient id="c148"><stop offset="0" stop-color="#0014ff"/><stop offset="0.1995" stop-color="#0206ff"/><stop offset="0.3005" stop-color="#1c00ff"/><stop offset="0.6569" stop-color="#7900ff"/><stop offset="1" stop-color="#d900ff"/></linearGradient><linearGradient id="c149"><stop offset="0" stop-color="#0013ff"/><stop offset="0.1995" stop-color="#0305ff"/><stop offset="0.2938" stop-color="#1a00ff"/><stop offset="0.6523" stop-color="#7600ff"/><stop offset="1" stop-color="#d500ff"/></linearGradient><linearGradient id="c150"><stop offset="0" stop-color="#0012ff"/><stop offset="0.1967" stop-color="#0205ff"/><stop offset="0.2842" stop-color="#1700ff"/><stop offset="0.6475" stop-color="#7300ff"/><stop offset="1" stop-color="#d100ff"/></linearGradient><linearGradient id="c151"><stop offset="0" stop-color="#01f"/><stop offset="0.1967" stop-color="#0304ff"/><stop offset="0.2742" stop-color="#1500ff"/><stop offset="0.6427" stop-color="#6f00ff"/><stop offset="1" stop-color="#cd00ff"/></linearGradient><linearGradient id="c152"><stop offset="0" stop-color="#0010ff"/><stop offset="0.1938" stop-color="#0203ff"/><stop offset="0.2612" stop-color="#1200ff"/><stop offset="0.5983" stop-color="#6200ff"/><stop offset="1" stop-color="#c900ff"/></linearGradient><linearGradient id="c153"><stop offset="0" stop-color="#000fff"/><stop offset="0.1932" stop-color="#0303ff"/><stop offset="0.5994" stop-color="#6100ff"/><stop offset="1" stop-color="#c500ff"/></linearGradient><linearGradient id="c154"><stop offset="0" stop-color="#000eff"/><stop offset="0.1902" stop-color="#0202ff"/><stop offset="0.5965" stop-color="#5f00ff"/><stop offset="1" stop-color="#c100ff"/></linearGradient><linearGradient id="c155"><stop offset="0" stop-color="#000dff"/><stop offset="0.1877" stop-color="#0301ff"/><stop offset="0.5953" stop-color="#5d00ff"/><stop offset="1" stop-color="#bd00ff"/></linearGradient><linearGradient id="c156"><stop offset="0" stop-color="#000cff"/><stop offset="0.1845" stop-color="#0201ff"/><stop offset="0.5952" stop-color="#5c00ff"/><stop offset="1" stop-color="#ba00ff"/></linearGradient><linearGradient id="c157"><stop offset="0" stop-color="#000bff"/><stop offset="0.1843" stop-color="#0200ff"/><stop offset="0.5952" stop-color="#5a00ff"/><stop offset="1" stop-color="#b600ff"/></linearGradient><linearGradient id="c158"><stop offset="0" stop-color="#000aff"/><stop offset="0.181" stop-color="#0200ff"/><stop offset="0.592" stop-color="#5800ff"/><stop offset="1" stop-color="#b200ff"/></linearGradient><linearGradient id="c159"><stop offset="0" stop-color="#0009ff"/><stop offset="0.1807" stop-color="#0200ff"/><stop offset="1" stop-color="#ae00ff"/></linearGradient><linearGradient id="c160"><stop offset="0" stop-color="#0008ff"/><stop offset="0.1746" stop-color="#0200ff"/><stop offset="1" stop-color="#ab00ff"/></linearGradient><linearGradient id="c161"><stop offset="0" stop-color="#0007ff"/><stop offset="0.1742" stop-color="#0200ff"/><stop offset="1" stop-color="#a700ff"/></linearGradient><linearGradient id="c162"><stop offset="0" stop-color="#0006ff"/><stop offset="0.1705" stop-color="#0200ff"/><stop offset="1" stop-color="#a400ff"/></linearGradient><linearGradient id="c163"><stop offset="0" stop-color="#0005ff"/><stop offset="0.1672" stop-color="#0200ff"/><stop offset="1" stop-color="#a000ff"/></linearGradient><linearGradient id="c164"><stop offset="0" stop-color="#0004ff"/><stop offset="0.1633" stop-color="#0200ff"/><stop offset="1" stop-color="#9d00ff"/></linearGradient><linearGradient id="c165"><stop offset="0" stop-color="#0003ff"/><stop offset="0.1626" stop-color="#0200ff"/><stop offset="1" stop-color="#90f"/></linearGradient><linearGradient id="c166"><stop offset="0" stop-color="#0002ff"/><stop offset="0.1555" stop-color="#0200ff"/><stop offset="1" stop-color="#9600ff"/></linearGradient><linearGradient id="c167"><stop offset="0" stop-color="#0002ff"/><stop offset="0.1547" stop-color="#0200ff"/><stop offset="1" stop-color="#9300ff"/></linearGradient><linearGradient id="c168"><stop offset="0" stop-color="#0001ff"/><stop offset="0.1502" stop-color="#0300ff"/><stop offset="1" stop-color="#9000ff"/></linearGradient><linearGradient id="c169"><stop offset="0" stop-color="#00f"/><stop offset="0.1455" stop-color="#0200ff"/><stop offset="1" stop-color="#8d00ff"/></linearGradient><linearGradient id="c170"><stop offset="0" stop-color="#00f"/><stop offset="0.1412" stop-color="#0300ff"/><stop offset="1" stop-color="#8a00ff"/></linearGradient><linearGradient id="c171"><stop offset="0" stop-color="#00f"/><stop offset="0.1362" stop-color="#0200ff"/><stop offset="1" stop-color="#8700ff"/></linearGradient><linearGradient id="c172"><stop offset="0" stop-color="#00f"/><stop offset="0.1315" stop-color="#0300ff"/><stop offset="1" stop-color="#8400ff"/></linearGradient><linearGradient id="c173"><stop offset="0" stop-color="#00f"/><stop offset="0.1301" stop-color="#0300ff"/><stop offset="1" stop-color="#8100ff"/></linearGradient><linearGradient id="c174"><stop offset="0" stop-color="#00f"/><stop offset="0.1208" stop-color="#0300ff"/><stop offset="1" stop-color="#7e00ff"/></linearGradient><linearGradient id="c175"><stop offset="0" stop-color="#00f"/><stop offset="0.1154" stop-color="#0300ff"/><stop offset="1" stop-color="#7b00ff"/></linearGradient><linearGradient id="c176"><stop offset="0" stop-color="#00f"/><stop offset="0.1092" stop-color="#0300ff"/><stop offset="1" stop-color="#7800ff"/></linearGradient><linearGradient id="c177"><stop offset="0" stop-color="#00f"/><stop offset="0.1031" stop-color="#0300ff"/><stop offset="1" stop-color="#7500ff"/></linearGradient><linearGradient id="c178"><stop offset="0" stop-color="#00f"/><stop offset="0.09677" stop-color="#0300ff"/><stop offset="1" stop-color="#7300ff"/></linearGradient><linearGradient id="c179"><stop offset="0" stop-color="#00f"/><stop offset="0.09005" stop-color="#0300ff"/><stop offset="1" stop-color="#7000ff"/></linearGradient><linearGradient id="c180"><stop offset="0" stop-color="#00f"/><stop offset="0.08252" stop-color="#0300ff"/><stop offset="1" stop-color="#6d00ff"/></linearGradient><linearGradient id="c181"><stop offset="0" stop-color="#00f"/><stop offset="0.075" stop-color="#0300ff"/><stop offset="1" stop-color="#6b00ff"/></linearGradient><linearGradient id="c182"><stop offset="0" stop-color="#00f"/><stop offset="0.06701" stop-color="#0400ff"/><stop offset="1" stop-color="#6800ff"/></linearGradient><linearGradient id="c183"><stop offset="0" stop-color="#00f"/><stop offset="1" stop-color="#60f"/></linearGradient><linearGradient id="c184"><stop offset="0" stop-color="#0100ff"/><stop offset="1" stop-color="#6300ff"/></linearGradient><linearGradient id="c185"><stop offset="0" stop-color="#0100ff"/><stop offset="1" stop-color="#6100ff"/></linearGradient><linearGradient id="c186"><stop offset="0" stop-color="#0300ff"/><stop offset="1" stop-color="#5e00ff"/></linearGradient><linearGradient id="c187"><stop offset="0" stop-color="#0400ff"/><stop offset="1" stop-color="#5c00ff"/></linearGradient><linearGradient id="c188"><stop offset="0" stop-color="#0500ff"/><stop offset="1" stop-color="#5900ff"/></linearGradient><linearGradient id="c189"><stop offset="0" stop-color="#0700ff"/><stop offset="1" stop-color="#5700ff"/></linearGradient><linearGradient id="c190"><stop offset="0" stop-color="#0800ff"/><stop offset="1" stop-color="#50f"/></linearGradient><linearGradient id="c191"><stop offset="0" stop-color="#0a00ff"/><stop offset="1" stop-color="#5200ff"/></linearGradient><linearGradient id="c192"><stop offset="0" stop-color="#0b00ff"/><stop offset="1" stop-color="#5000ff"/></linearGradient><linearGradient id="c193"><stop offset="0" stop-color="#0d00ff"/><stop offset="1" stop-color="#4e00ff"/></linearGradient><linearGradient id="c194"><stop offset="0" stop-color="#0e00ff"/><stop offset="1" stop-color="#4b00ff"/></linearGradient><linearGradient id="c195"><stop offset="0" stop-color="#1000ff"/><stop offset="1" stop-color="#4900ff"/></linearGradient><linearGradient id="c196"><stop offset="0" stop-color="#10f"/><stop offset="1" stop-color="#4700ff"/></linearGradient><linearGradient id="c197"><stop offset="0" stop-color="#1300ff"/><stop offset="1" stop-color="#4500ff"/></linearGradient><linearGradient id="c198"><stop offset="0" stop-color="#1400ff"/><stop offset="1" stop-color="#4300ff"/></linearGradient><linearGradient id="c199"><stop offset="0" stop-color="#1500ff"/><stop offset="1" stop-color="#4100ff"/></linearGradient><linearGradient id="c200"><stop offset="0" stop-color="#1700ff"/><stop offset="1" stop-color="#3f00ff"/></linearGradient><linearGradient id="c201"><stop offset="0" stop-color="#1900ff"/><stop offset="1" stop-color="#3d00ff"/></linearGradient><linearGradient id="c202"><stop offset="0" stop-color="#1a00ff"/><stop offset="1" stop-color="#3b00ff"/></linearGradient><linearGradient id="c203"><stop offset="0" stop-color="#1b00ff"/><stop offset="1" stop-color="#3900ff"/></linearGradient><linearGradient id="c204"><stop offset="0" stop-color="#1c00ff"/><stop offset="1" stop-color="#3700ff"/></linearGradient><linearGradient id="c205"><stop offset="0" stop-color="#1e00ff"/><stop offset="1" stop-color="#3500ff"/></linearGradient><linearGradient id="c206"><stop offset="0" stop-color="#1f00ff"/><stop offset="1" stop-color="#30f"/></linearGradient><linearGradient id="c207"><stop offset="0" stop-color="#2000ff"/><stop offset="1" stop-color="#3100ff"/></linearGradient><linearGradient id="c208"><stop offset="0" stop-color="#20f"/><stop offset="1" stop-color="#2f00ff"/></linearGradient><linearGradient id="c209"><stop offset="0" stop-color="#2300ff"/><stop offset="1" stop-color="#2d00ff"/></linearGradient><linearGradient id="c210"><stop offset="0" stop-color="#2500ff"/><stop offset="1" stop-color="#2b00ff"/></linearGradient><clipPath id="loc"><polygon points="2046.5,936.3 2044.6,937.2 2042.5,937.2 2040.3,936.4 2038.3,935.3 2036.0,933.8 2034.2,932.5 2032.2,930.9 2029.8,929.1 2027.1,927.1 2024.1,924.7 2022.5,923.4 2020.9,922.0 2019.1,920.6 2017.3,919.1 2015.4,917.5 2013.2,915.7 2010.8,913.7 2008.4,911.7 2005.8,909.5 2003.0,907.3 2000.1,904.9 1997.1,902.4 1993.9,899.7 1990.6,897.0 1987.1,894.2 1983.6,891.2 1979.9,888.2 1976.0,884.9 1972.0,881.5 1967.9,877.9 1963.5,874.1 1959.0,870.1 1954.3,865.8 1949.5,861.3 1944.5,856.6 1939.4,851.6 1934.1,846.2 1928.5,840.3 1922.5,833.8 1916.1,826.6 1909.3,818.6 1902.1,809.9 1894.5,800.5 1886.6,790.4 1878.5,779.8 1870.2,768.5 1861.7,756.7 1853.0,744.2 1844.1,731.1 1835.0,717.3 1825.8,702.9 1816.6,688.1 1807.3,672.9 1798.1,657.4 1788.9,641.7 1779.7,625.8 1770.8,609.8 1762.1,593.7 1753.8,577.6 1745.9,561.7 1738.6,546.0 1731.7,530.6 1725.2,515.6 1719.2,501.1 1713.5,486.9 1708.3,473.4 1703.6,460.4 1699.4,448.1 1695.6,436.5 1692.4,425.6 1689.5,415.4 1687.1,405.8 1685.1,396.8 1683.5,388.5 1682.2,380.7 1681.3,373.6 1680.7,366.9 1680.5,360.8 1680.6,355.1 1680.9,349.8 1681.6,344.8 1682.5,340.2 1683.7,336.0 1685.2,332.1 1686.9,328.6 1688.9,325.4 1691.2,322.4 1693.6,319.8 1696.2,317.6 1699.0,315.6 1702.0,313.9 1705.2,312.4 1708.5,311.2 1711.9,310.1 1715.4,309.3 1719.0,308.6 1722.8,308.1 1726.6,307.7 1730.5,307.4 1734.5,307.1 1738.5,307.0 1742.6,306.8 1746.7,306.7 1750.8,306.7 1754.9,306.7 1759.0,306.7 1763.1,306.8 1767.2,306.8 1771.4,307.0 1775.6,307.1 1779.8,307.3 1784.1,307.5 1788.5,307.7 1792.9,308.0 1797.4,308.2 1801.9,308.6 1806.6,308.9 1811.3,309.2 1816.1,309.6 1820.9,310.0 1825.9,310.5 1830.9,310.9 1836.0,311.4 1841.2,311.9 1846.6,312.4 1852.0,313.0 1857.5,313.5 1863.2,314.1 1869.0,314.7 1874.8,315.3 1880.8,316.0 1887.0,316.6 1893.2,317.3 1899.6,318.0 1906.1,318.7 1912.8,319.4 1919.5,320.2 1926.5,321.0 1933.5,321.8 1940.7,322.6 1948.1,323.4 1955.6,324.3 1963.2,325.1 1971.0,326.0 1979.0,326.9 1987.1,327.8 1995.3,328.8 2003.7,329.8 2012.3,330.7 2021.0,331.7 2029.9,332.8 2038.9,333.8 2048.0,334.8 2057.3,335.9 2066.8,337.0 2076.3,338.1 2086.0,339.2 2095.9,340.3 2105.8,341.5 2115.9,342.6 2126.1,343.8 2136.3,345.0 2146.7,346.2 2157.2,347.4 2167.7,348.6 2178.3,349.8 2188.9,351.0 2199.5,352.2 2210.0,353.5 2220.4,354.7 2230.7,355.8 2240.9,357.0 2251.0,358.2 2261.2,359.3 2271.3,360.5 2281.4,361.7 2291.4,362.8 2301.3,363.9 2310.9,365.0 2320.4,366.1 2329.6,367.2 2338.5,368.2 2347.3,369.2 2355.9,370.2 2364.3,371.2 2372.5,372.1 2380.5,373.0 2388.2,373.9 2395.7,374.8 2403.0,375.6 2410.0,376.4 2416.8,377.2 2423.4,377.9 2429.7,378.7 2435.8,379.4 2441.7,380.0 2447.4,380.7 2452.9,381.3 2458.2,381.9 2463.3,382.5 2468.2,383.1 2472.9,383.6 2477.6,384.2 2482.1,384.7 2486.5,385.2 2490.8,385.7 2494.9,386.2 2498.9,386.6 2502.8,387.1 2506.6,387.5 2510.2,387.9 2513.8,388.3 2517.1,388.7 2520.4,389.0 2523.5,389.2 2526.5,389.3 2529.4,389.5 2532.2,389.6 2534.8,389.8 2537.2,389.9 2539.5,390.0 2541.6,390.1 2543.7,390.2 2545.0,426.5"/></clipPath></defs><g clip-path="url(#loc)"><rect x="1715" y="306" width="96" height="3" fill="url(#c0)"/><rect x="1704" y="309" width="141" height="3" fill="url(#c1)"/><rect x="1698" y="312" width="176" height="3" fill="url(#c2)"/><rect x="1693" y="315" width="209" height="3" fill="url(#c3)"/><rect x="1690" y="318" width="239" height="3" fill="url(#c4)"/><rect x="1687" y="321" width="269" height="3" fill="url(#c5)"/><rect x="1685" y="324" width="297" height="3" fill="url(#c6)"/><rect x="1684" y="327" width="324" height="3" fill="url(#c7)"/><rect x="1682" y="330" width="352" height="3" fill="url(#c8)"/><rect x="1681" y="333" width="380" height="3" fill="url(#c9)"/><rect x="1680" y="336" width="407" height="3" fill="url(#c10)"/><rect x="1680" y="339" width="433" height="3" fill="url(#c11)"/><rect x="1679" y="342" width="460" height="3" fill="url(#c12)"/><rect x="1679" y="345" width="486" height="3" fill="url(#c13)"/><rect x="1679" y="348" width="512" height="3" fill="url(#c14)"/><rect x="1679" y="351" width="538" height="3" fill="url(#c15)"/><rect x="1679" y="354" width="564" height="3" fill="url(#c16)"/><rect x="1679" y="357" width="590" height="3" fill="url(#c17)"/><rect x="1679" y="360" width="617" height="3" fill="url(#c18)"/><rect x="1679" y="363" width="643" height="3" fill="url(#c19)"/><rect x="1679" y="366" width="669" height="3" fill="url(#c20)"/><rect x="1679" y="369" width="695" height="3" fill="url(#c21)"/><rect x="1679" y="372" width="721" height="3" fill="url(#c22)"/><rect x="1679" y="375" width="747" height="3" fill="url(#c23)"/><rect x="1679" y="378" width="773" height="3" fill="url(#c24)"/><rect x="1680" y="381" width="799" height="3" fill="url(#c25)"/><rect x="1680" y="384" width="825" height="3" fill="url(#c26)"/><rect x="1681" y="387" width="861" height="3" fill="url(#c27)"/><rect x="1681" y="390" width="865" height="3" fill="url(#c28)"/><rect x="1682" y="393" width="864" height="3" fill="url(#c29)"/><rect x="1682" y="396" width="864" height="3" fill="url(#c30)"/><rect x="1683" y="399" width="863" height="3" fill="url(#c31)"/><rect x="1684" y="402" width="862" height="3" fill="url(#c32)"/><rect x="1684" y="405" width="862" height="3" fill="url(#c33)"/><rect x="1685" y="408" width="861" height="3" fill="url(#c34)"/><rect x="1686" y="411" width="860" height="3" fill="url(#c35)"/><rect x="1687" y="414" width="859" height="3" fill="url(#c36)"/><rect x="1687" y="417" width="859" height="3" fill="url(#c37)"/><rect x="1688" y="420" width="858" height="3" fill="url(#c38)"/><rect x="1689" y="423" width="857" height="3" fill="url(#c39)"/><rect x="1690" y="426" width="856" height="3" fill="url(#c40)"/><rect x="1691" y="429" width="854" height="3" fill="url(#c41)"/><rect x="1692" y="432" width="850" height="3" fill="url(#c42)"/><rect x="1693" y="435" width="846" height="3" fill="url(#c43)"/><rect x="1694" y="438" width="842" height="3" fill="url(#c44)"/><rect x="1695" y="441" width="838" height="3" fill="url(#c45)"/><rect x="1696" y="444" width="834" height="3" fill="url(#c46)"/><rect x="1697" y="447" width="830" height="3" fill="url(#c47)"/><rect x="1698" y="450" width="827" height="3" fill="url(#c48)"/><rect x="1699" y="453" width="823" height="3" fill="url(#c49)"/><rect x="1700" y="456" width="819" height="3" fill="url(#c50)"/><rect x="1701" y="459" width="815" height="3" fill="url(#c51)"/><rect x="1702" y="462" width="811" height="3" fill="url(#c52)"/><rect x="1703" y="465" width="807" height="3" fill="url(#c53)"/><rect x="1704" y="468" width="803" height="3" fill="url(#c54)"/><rect x="1705" y="471" width="799" height="3" fill="url(#c55)"/><rect x="1706" y="474" width="795" height="3" fill="url(#c56)"/><rect x="1707" y="477" width="791" height="3" fill="url(#c57)"/><rect x="1708" y="480" width="787" height="3" fill="url(#c58)"/><rect x="1710" y="483" width="782" height="3" fill="url(#c59)"/><rect x="1711" y="486" width="778" height="3" fill="url(#c60)"/><rect x="1712" y="489" width="774" height="3" fill="url(#c61)"/><rect x="1713" y="492" width="770" height="3" fill="url(#c62)"/><rect x="1714" y="495" width="767" height="3" fill="url(#c63)"/><rect x="1715" y="498" width="763" height="3" fill="url(#c64)"/><rect x="1717" y="501" width="758" height="3" fill="url(#c65)"/><rect x="1718" y="504" width="754" height="3" fill="url(#c66)"/><rect x="1719" y="507" width="750" height="3" fill="url(#c67)"/><rect x="1720" y="510" width="746" height="3" fill="url(#c68)"/><rect x="1722" y="513" width="741" height="3" fill="url(#c69)"/><rect x="1723" y="516" width="737" height="3" fill="url(#c70)"/><rect x="1724" y="519" width="733" height="3" fill="url(#c71)"/><rect x="1725" y="522" width="729" height="3" fill="url(#c72)"/><rect x="1727" y="525" width="724" height="3" fill="url(#c73)"/><rect x="1728" y="528" width="720" height="3" fill="url(#c74)"/><rect x="1729" y="531" width="716" height="3" fill="url(#c75)"/><rect x="1731" y="534" width="711" height="3" fill="url(#c76)"/><rect x="1732" y="537" width="707" height="3" fill="url(#c77)"/><rect x="1733" y="540" width="704" height="3" fill="url(#c78)"/><rect x="1735" y="543" width="699" height="3" fill="url(#c79)"/><rect x="1736" y="546" width="695" height="3" fill="url(#c80)"/><rect x="1737" y="549" width="691" height="3" fill="url(#c81)"/><rect x="1739" y="552" width="686" height="3" fill="url(#c82)"/><rect x="1740" y="555" width="682" height="3" fill="url(#c83)"/><rect x="1742" y="558" width="677" height="3" fill="url(#c84)"/><rect x="1743" y="561" width="673" height="3" fill="url(#c85)"/><rect x="1745" y="564" width="668" height="3" fill="url(#c86)"/><rect x="1746" y="567" width="664" height="3" fill="url(#c87)"/><rect x="1748" y="570" width="659" height="3" fill="url(#c88)"/><rect x="1749" y="573" width="655" height="3" fill="url(#c89)"/><rect x="1750" y="576" width="651" height="3" fill="url(#c90)"/><rect x="1752" y="579" width="646" height="3" fill="url(#c91)"/><rect x="1754" y="582" width="641" height="3" fill="url(#c92)"/><rect x="1755" y="585" width="638" height="3" fill="url(#c93)"/><rect x="1757" y="588" width="633" height="3" fill="url(#c94)"/><rect x="1758" y="591" width="629" height="3" fill="url(#c95)"/><rect x="1760" y="594" width="624" height="3" fill="url(#c96)"/><rect x="1761" y="597" width="620" height="3" fill="url(#c97)"/><rect x="1763" y="600" width="615" height="3" fill="url(#c98)"/><rect x="1765" y="603" width="610" height="3" fill="url(#c99)"/><rect x="1766" y="606" width="606" height="3" fill="url(#c100)"/><rect x="1768" y="609" width="601" height="3" fill="url(#c101)"/><rect x="1770" y="612" width="596" height="3" fill="url(#c102)"/><rect x="1771" y="615" width="592" height="3" fill="url(#c103)"/><rect x="1773" y="618" width="587" height="3" fill="url(#c104)"/><rect x="1775" y="621" width="582" height="3" fill="url(#c105)"/><rect x="1776" y="624" width="578" height="3" fill="url(#c106)"/><rect x="1778" y="627" width="573" height="3" fill="url(#c107)"/><rect x="1780" y="630" width="569" height="3" fill="url(#c108)"/><rect x="1781" y="633" width="565" height="3" fill="url(#c109)"/><rect x="1783" y="636" width="560" height="3" fill="url(#c110)"/><rect x="1785" y="639" width="555" height="3" fill="url(#c111)"/><rect x="1787" y="642" width="550" height="3" fill="url(#c112)"/><rect x="1788" y="645" width="546" height="3" fill="url(#c113)"/><rect x="1790" y="648" width="541" height="3" fill="url(#c114)"/><rect x="1792" y="651" width="536" height="3" fill="url(#c115)"/><rect x="1794" y="654" width="531" height="3" fill="url(#c116)"/><rect x="1795" y="657" width="527" height="3" fill="url(#c117)"/><rect x="1797" y="660" width="522" height="3" fill="url(#c118)"/><rect x="1799" y="663" width="517" height="3" fill="url(#c119)"/><rect x="1801" y="666" width="512" height="3" fill="url(#c120)"/><rect x="1803" y="669" width="507" height="3" fill="url(#c121)"/><rect x="1804" y="672" width="503" height="3" fill="url(#c122)"/><rect x="1806" y="675" width="499" height="3" fill="url(#c123)"/><rect x="1808" y="678" width="494" height="3" fill="url(#c124)"/><rect x="1810" y="681" width="489" height="3" fill="url(#c125)"/><rect x="1812" y="684" width="484" height="3" fill="url(#c126)"/><rect x="1813" y="687" width="480" height="3" fill="url(#c127)"/><rect x="1815" y="690" width="475" height="3" fill="url(#c128)"/><rect x="1817" y="693" width="470" height="3" fill="url(#c129)"/><rect x="1819" y="696" width="465" height="3" fill="url(#c130)"/><rect x="1821" y="699" width="460" height="3" fill="url(#c131)"/><rect x="1823" y="702" width="455" height="3" fill="url(#c132)"/><rect x="1825" y="705" width="450" height="3" fill="url(#c133)"/><rect x="1827" y="708" width="445" height="3" fill="url(#c134)"/><rect x="1829" y="711" width="440" height="3" fill="url(#c135)"/><rect x="1830" y="714" width="436" height="3" fill="url(#c136)"/><rect x="1832" y="717" width="431" height="3" fill="url(#c137)"/><rect x="1834" y="720" width="427" height="3" fill="url(#c138)"/><rect x="1836" y="723" width="422" height="3" fill="url(#c139)"/><rect x="1838" y="726" width="417" height="3" fill="url(#c140)"/><rect x="1840" y="729" width="412" height="3" fill="url(#c141)"/><rect x="1842" y="732" width="407" height="3" fill="url(#c142)"/><rect x="1844" y="735" width="402" height="3" fill="url(#c143)"/><rect x="1846" y="738" width="397" height="3" fill="url(#c144)"/><rect x="1848" y="741" width="392" height="3" fill="url(#c145)"/><rect x="1850" y="744" width="387" height="3" fill="url(#c146)"/><rect x="1852" y="747" width="382" height="3" fill="url(#c147)"/><rect x="1855" y="750" width="376" height="3" fill="url(#c148)"/><rect x="1857" y="753" width="371" height="3" fill="url(#c149)"/><rect x="1859" y="756" width="366" height="3" fill="url(#c150)"/><rect x="1861" y="759" width="361" height="3" fill="url(#c151)"/><rect x="1863" y="762" width="356" height="3" fill="url(#c152)"/><rect x="1865" y="765" width="352" height="3" fill="url(#c153)"/><rect x="1867" y="768" width="347" height="3" fill="url(#c154)"/><rect x="1870" y="771" width="341" height="3" fill="url(#c155)"/><rect x="1872" y="774" width="336" height="3" fill="url(#c156)"/><rect x="1874" y="777" width="331" height="3" fill="url(#c157)"/><rect x="1876" y="780" width="326" height="3" fill="url(#c158)"/><rect x="1878" y="783" width="321" height="3" fill="url(#c159)"/><rect x="1881" y="786" width="315" height="3" fill="url(#c160)"/><rect x="1883" y="789" width="310" height="3" fill="url(#c161)"/><rect x="1885" y="792" width="305" height="3" fill="url(#c162)"/><rect x="1888" y="795" width="299" height="3" fill="url(#c163)"/><rect x="1890" y="798" width="294" height="3" fill="url(#c164)"/><rect x="1892" y="801" width="289" height="3" fill="url(#c165)"/><rect x="1895" y="804" width="283" height="3" fill="url(#c166)"/><rect x="1897" y="807" width="278" height="3" fill="url(#c167)"/><rect x="1900" y="810" width="273" height="3" fill="url(#c168)"/><rect x="1902" y="813" width="268" height="3" fill="url(#c169)"/><rect x="1905" y="816" width="262" height="3" fill="url(#c170)"/><rect x="1907" y="819" width="257" height="3" fill="url(#c171)"/><rect x="1910" y="822" width="251" height="3" fill="url(#c172)"/><rect x="1912" y="825" width="246" height="3" fill="url(#c173)"/><rect x="1915" y="828" width="240" height="3" fill="url(#c174)"/><rect x="1918" y="831" width="234" height="3" fill="url(#c175)"/><rect x="1920" y="834" width="229" height="3" fill="url(#c176)"/><rect x="1923" y="837" width="223" height="3" fill="url(#c177)"/><rect x="1926" y="840" width="217" height="3" fill="url(#c178)"/><rect x="1929" y="843" width="211" height="3" fill="url(#c179)"/><rect x="1931" y="846" width="206" height="3" fill="url(#c180)"/><rect x="1934" y="849" width="200" height="3" fill="url(#c181)"/><rect x="1937" y="852" width="194" height="3" fill="url(#c182)"/><rect x="1940" y="855" width="189" height="3" fill="url(#c183)"/><rect x="1944" y="858" width="182" height="3" fill="url(#c184)"/><rect x="1947" y="861" width="176" height="3" fill="url(#c185)"/><rect x="1950" y="864" width="170" height="3" fill="url(#c186)"/><rect x="1953" y="867" width="164" height="3" fill="url(#c187)"/><rect x="1956" y="870" width="158" height="3" fill="url(#c188)"/><rect x="1960" y="873" width="151" height="3" fill="url(#c189)"/><rect x="1963" y="876" width="145" height="3" fill="url(#c190)"/><rect x="1967" y="879" width="138" height="3" fill="url(#c191)"/><rect x="1970" y="882" width="132" height="3" fill="url(#c192)"/><rect x="1974" y="885" width="125" height="3" fill="url(#c193)"/><rect x="1977" y="888" width="119" height="3" fill="url(#c194)"/><rect x="1981" y="891" width="112" height="3" fill="url(#c195)"/><rect x="1984" y="894" width="106" height="3" fill="url(#c196)"/><rect x="1988" y="897" width="99" height="3" fill="url(#c197)"/><rect x="1992" y="900" width="93" height="3" fill="url(#c198)"/><rect x="1995" y="903" width="87" height="3" fill="url(#c199)"/><rect x="1999" y="906" width="80" height="3" fill="url(#c200)"/><rect x="2003" y="909" width="73" height="3" fill="url(#c201)"/><rect x="2006" y="912" width="67" height="3" fill="url(#c202)"/><rect x="2010" y="915" width="60" height="3" fill="url(#c203)"/><rect x="2013" y="918" width="54" height="3" fill="url(#c204)"/><rect x="2017" y="921" width="47" height="3" fill="url(#c205)"/><rect x="2021" y="924" width="40" height="3" fill="url(#c206)"/><rect x="2024" y="927" width="34" height="3" fill="url(#c207)"/><rect x="2028" y="930" width="27" height="3" fill="url(#c208)"/><rect x="2032" y="933" width="20" height="3" fill="url(#c209)"/><rect x="2037" y="936" width="12" height="2" fill="url(#c210)"/></g><path d="M2046.5 936.3 L2044.6 937.2 L2042.5 937.2 L2040.3 936.4 L2038.3 935.3 L2036.0 933.8 L2034.2 932.5 L2032.2 930.9 L2029.8 929.1 L2027.1 927.1 L2024.1 924.7 L2022.5 923.4 L2020.9 922.0 L2019.1 920.6 L2017.3 919.1 L2015.4 917.5 L2013.2 915.7 L2010.8 913.7 L2008.4 911.7 L2005.8 909.5 L2003.0 907.3 L2000.1 904.9 L1997.1 902.4 L1993.9 899.7 L1990.6 897.0 L1987.1 894.2 L1983.6 891.2 L1979.9 888.2 L1976.0 884.9 L1972.0 881.5 L1967.9 877.9 L1963.5 874.1 L1959.0 870.1 L1954.3 865.8 L1949.5 861.3 L1944.5 856.6 L1939.4 851.6 L1934.1 846.2 L1928.5 840.3 L1922.5 833.8 L1916.1 826.6 L1909.3 818.6 L1902.1 809.9 L1894.5 800.5 L1886.6 790.4 L1878.5 779.8 L1870.2 768.5 L1861.7 756.7 L1853.0 744.2 L1844.1 731.1 L1835.0 717.3 L1825.8 702.9 L1816.6 688.1 L1807.3 672.9 L1798.1 657.4 L1788.9 641.7 L1779.7 625.8 L1770.8 609.8 L1762.1 593.7 L1753.8 577.6 L1745.9 561.7 L1738.6 546.0 L1731.7 530.6 L1725.2 515.6 L1719.2 501.1 L1713.5 486.9 L1708.3 473.4 L1703.6 460.4 L1699.4 448.1 L1695.6 436.5 L1692.4 425.6 L1689.5 415.4 L1687.1 405.8 L1685.1 396.8 L1683.5 388.5 L1682.2 380.7 L1681.3 373.6 L1680.7 366.9 L1680.5 360.8 L1680.6 355.1 L1680.9 349.8 L1681.6 344.8 L1682.5 340.2 L1683.7 336.0 L1685.2 332.1 L1686.9 328.6 L1688.9 325.4 L1691.2 322.4 L1693.6 319.8 L1696.2 317.6 L1699.0 315.6 L1702.0 313.9 L1705.2 312.4 L1708.5 311.2 L1711.9 310.1 L1715.4 309.3 L1719.0 308.6 L1722.8 308.1 L1726.6 307.7 L1730.5 307.4 L1734.5 307.1 L1738.5 307.0 L1742.6 306.8 L1746.7 306.7 L1750.8 306.7 L1754.9 306.7 L1759.0 306.7 L1763.1 306.8 L1767.2 306.8 L1771.4 307.0 L1775.6 307.1 L1779.8 307.3 L1784.1 307.5 L1788.5 307.7 L1792.9 308.0 L1797.4 308.2 L1801.9 308.6 L1806.6 308.9 L1811.3 309.2 L1816.1 309.6 L1820.9 310.0 L1825.9 310.5 L1830.9 310.9 L1836.0 311.4 L1841.2 311.9 L1846.6 312.4 L1852.0 313.0 L1857.5 313.5 L1863.2 314.1 L1869.0 314.7 L1874.8 315.3 L1880.8 316.0 L1887.0 316.6 L1893.2 317.3 L1899.6 318.0 L1906.1 318.7 L1912.8 319.4 L1919.5 320.2 L1926.5 321.0 L1933.5 321.8 L1940.7 322.6 L1948.1 323.4 L1955.6 324.3 L1963.2 325.1 L1971.0 326.0 L1979.0 326.9 L1987.1 327.8 L1995.3 328.8 L2003.7 329.8 L2012.3 330.7 L2021.0 331.7 L2029.9 332.8 L2038.9 333.8 L2048.0 334.8 L2057.3 335.9 L2066.8 337.0 L2076.3 338.1 L2086.0 339.2 L2095.9 340.3 L2105.8 341.5 L2115.9 342.6 L2126.1 343.8 L2136.3 345.0 L2146.7 346.2 L2157.2 347.4 L2167.7 348.6 L2178.3 349.8 L2188.9 351.0 L2199.5 352.2 L2210.0 353.5 L2220.4 354.7 L2230.7 355.8 L2240.9 357.0 L2251.0 358.2 L2261.2 359.3 L2271.3 360.5 L2281.4 361.7 L2291.4 362.8 L2301.3 363.9 L2310.9 365.0 L2320.4 366.1 L2329.6 367.2 L2338.5 368.2 L2347.3 369.2 L2355.9 370.2 L2364.3 371.2 L2372.5 372.1 L2380.5 373.0 L2388.2 373.9 L2395.7 374.8 L2403.0 375.6 L2410.0 376.4 L2416.8 377.2 L2423.4 377.9 L2429.7 378.7 L2435.8 379.4 L2441.7 380.0 L2447.4 380.7 L2452.9 381.3 L2458.2 381.9 L2463.3 382.5 L2468.2 383.1 L2472.9 383.6 L2477.6 384.2 L2482.1 384.7 L2486.5 385.2 L2490.8 385.7 L2494.9 386.2 L2498.9 386.6 L2502.8 387.1 L2506.6 387.5 L2510.2 387.9 L2513.8 388.3 L2517.1 388.7 L2520.4 389.0 L2523.5 389.2 L2526.5 389.3 L2529.4 389.5 L2532.2 389.6 L2534.8 389.8 L2537.2 389.9 L2539.5 390.0 L2541.6 390.1 L2543.7 390.2 L2545.0 426.5ZM2329.3 377.6 L1859.0 333.6 L1931.8 782.7Z" fill-rule="evenodd" fill="#000" fill-opacity=".41"/><rect x="1679" y="291" width="866.5" height="666.5" fill="none" stroke="#9a9a9a" stroke-width="2"/><path d="M1670 958.0H1679M1670 902.5H1679M1670 847.0H1679M1670 791.5H1679M1670 736.0H1679M1670 680.5H1679M1670 625.0H1679M1670 569.5H1679M1670 514.0H1679M1670 458.5H1679M1670 403.0H1679M1670 347.5H1679M1678.5 957.5V965.5M1750.7 957.5V965.5M1822.9 957.5V965.5M1895.1 957.5V965.5M1967.3 957.5V965.5M2039.5 957.5V965.5M2111.7 957.5V965.5M2183.9 957.5V965.5M2256.1 957.5V965.5M2328.3 957.5V965.5M2400.5 957.5V965.5M2472.7 957.5V965.5" stroke="#ddd" stroke-width="2" fill="none"/><path d="M1849.4 322.3h17.4v17.4h-17.4zM1866.0 338.6h17.4v17.4h-17.4zM1882.7 354.8h17.4v17.4h-17.4zM1902.9 375.6h17.4v17.4h-17.4zM1926.2 397.8h17.4v17.4h-17.4z" fill="#0f0" fill-opacity=".2" stroke="#fff" stroke-width="2.3"/><path d="M1963.2 332.9h17.4v17.4h-17.4zM1961.2 349.7h17.4v17.4h-17.4zM1960.6 364.9h17.4v17.4h-17.4zM1959.5 383.1h17.4v17.4h-17.4zM1958.1 403.3h17.4v17.4h-17.4z" fill="#ff0" fill-opacity=".2" stroke="#fff" stroke-width="2.3"/><path d="M2319.4 366.0h17.4v17.4h-17.4zM2232.4 381.0h17.4v17.4h-17.4zM2158.6 394.2h17.4v17.4h-17.4zM2092.3 403.3h17.4v17.4h-17.4zM2020.2 416.0h17.4v17.4h-17.4z" fill="#f00" fill-opacity=".2" stroke="#fff" stroke-width="2.3"/><path d="M1869.2 442.3h17.4v17.4h-17.4zM1886.2 438.0h17.4v17.4h-17.4zM1902.9 436.2h17.4v17.4h-17.4zM1921.1 432.6h17.4v17.4h-17.4zM1937.9 431.2h17.4v17.4h-17.4z" fill="#0ff" fill-opacity=".2" stroke="#fff" stroke-width="2.3"/><path d="M2109.3 580.1h17.4v17.4h-17.4zM2064.8 537.7h17.4v17.4h-17.4zM2029.7 502.7h17.4v17.4h-17.4zM2004.2 475.0h17.4v17.4h-17.4zM1978.3 449.1h17.4v17.4h-17.4z" fill="#f0f" fill-opacity=".2" stroke="#fff" stroke-width="2.3"/><path d="M1923.4 771.9h17.4v17.4h-17.4zM1934.2 655.9h17.4v17.4h-17.4zM1941.4 578.1h17.4v17.4h-17.4zM1946.6 517.1h17.4v17.4h-17.4zM1950.0 467.5h17.4v17.4h-17.4z" fill="#00f" fill-opacity=".2" stroke="#fff" stroke-width="2.3"/><rect x="1954.5" y="427.3" width="17" height="17" fill="#fff" fill-opacity=".4" stroke="#000" stroke-width="2.2"/><g stroke="#000" stroke-width="1.6"><circle cx="1900.5" cy="334.1" r="5.6" fill="#00be00"/><circle cx="1900.5" cy="349.7" r="5.6" fill="#40b440"/><circle cx="1900.5" cy="364.5" r="5.6" fill="#64b464"/><circle cx="1909.6" cy="384.7" r="5.6" fill="#80b480"/><circle cx="1931.5" cy="406.5" r="5.6" fill="#a0b9a0"/><circle cx="1970.7" cy="340.6" r="5.6" fill="#c0c000"/><circle cx="1968.6" cy="358.4" r="5.6" fill="#bebe4c"/><circle cx="1966.6" cy="373.6" r="5.6" fill="#bebe6c"/><circle cx="1966.6" cy="391.3" r="5.6" fill="#bebe88"/><circle cx="1962.8" cy="413.4" r="5.6" fill="#bec0a6"/><circle cx="2217.5" cy="367.5" r="5.6" fill="#be0000"/><circle cx="2200.3" cy="382.3" r="5.6" fill="#be3838"/><circle cx="2163.3" cy="400.8" r="5.6" fill="#be5a5a"/><circle cx="2099.6" cy="412.6" r="5.6" fill="#be7676"/><circle cx="2025.4" cy="424.9" r="5.6" fill="#be9696"/><circle cx="1900.1" cy="447.3" r="5.6" fill="#3c9696"/><circle cx="1910" cy="445.3" r="5.6" fill="#6eb4b4"/><circle cx="1926.8" cy="443.3" r="5.6" fill="#8cb9b9"/><circle cx="1942.6" cy="439.3" r="5.6" fill="#a5b9b9"/><circle cx="2047.1" cy="520.5" r="5.6" fill="#b446b4"/><circle cx="2051.7" cy="517.1" r="5.6" fill="#be00be"/><circle cx="2033.1" cy="509.4" r="5.6" fill="#be6ebe"/><circle cx="2009.1" cy="483.7" r="5.6" fill="#be8cbe"/><circle cx="1983.6" cy="458.5" r="5.6" fill="#bea5be"/><circle cx="1918.3" cy="634.6" r="5.6" fill="#0000be"/><circle cx="1933.6" cy="622.1" r="5.6" fill="#4040be"/><circle cx="1944.4" cy="583.4" r="5.6" fill="#5f5fbe"/><circle cx="1951.5" cy="526.2" r="5.6" fill="#7a7abe"/><circle cx="1955.5" cy="476.2" r="5.6" fill="#9696be"/><circle cx="1900.5" cy="445.3" r="5.6" fill="#00bec8"/><circle cx="1961.6" cy="436.6" r="5.6" fill="#fff"/></g><rect x="2245.5" y="747" width="295" height="203" fill="#333"/><defs><linearGradient id="i0"><stop offset="0" stop-color="#b9ff00"/><stop offset="0.7993" stop-color="#ff0"/><stop offset="1" stop-color="#ffed00"/></linearGradient><linearGradient id="i1"><stop offset="0" stop-color="#baff00"/><stop offset="0.7887" stop-color="#ff0"/><stop offset="1" stop-color="#ffec00"/></linearGradient><linearGradient id="i2"><stop offset="0" stop-color="#baff00"/><stop offset="0.7782" stop-color="#ff0"/><stop offset="1" stop-color="#ffec00"/></linearGradient><linearGradient id="i3"><stop offset="0" stop-color="#bf0"/><stop offset="0.7711" stop-color="#ff0"/><stop offset="1" stop-color="#ffeb00"/></linearGradient><linearGradient id="i4"><stop offset="0" stop-color="#bcff00"/><stop offset="0.7606" stop-color="#ff0"/><stop offset="1" stop-color="#ffea00"/></linearGradient><linearGradient id="i5"><stop offset="0" stop-color="#bcff00"/><stop offset="0.75" stop-color="#ff0"/><stop offset="1" stop-color="#ffe900"/></linearGradient><linearGradient id="i6"><stop offset="0" stop-color="#bdff00"/><stop offset="0.743" stop-color="#ff0"/><stop offset="1" stop-color="#ffe800"/></linearGradient><linearGradient id="i7"><stop offset="0" stop-color="#beff00"/><stop offset="0.7324" stop-color="#ff0"/><stop offset="1" stop-color="#ffe800"/></linearGradient><linearGradient id="i8"><stop offset="0" stop-color="#beff01"/><stop offset="0.7218" stop-color="#ff0"/><stop offset="1" stop-color="#ffe700"/></linearGradient><linearGradient id="i9"><stop offset="0" stop-color="#bfff01"/><stop offset="0.7113" stop-color="#ff0"/><stop offset="1" stop-color="#ffe600"/></linearGradient><linearGradient id="i10"><stop offset="0" stop-color="#c0ff01"/><stop offset="0.7042" stop-color="#ff0"/><stop offset="1" stop-color="#ffe500"/></linearGradient><linearGradient id="i11"><stop offset="0" stop-color="#c1ff02"/><stop offset="0.6937" stop-color="#ff0"/><stop offset="1" stop-color="#ffe400"/></linearGradient><linearGradient id="i12"><stop offset="0" stop-color="#c1ff02"/><stop offset="0.6831" stop-color="#ff0"/><stop offset="1" stop-color="#ffe400"/></linearGradient><linearGradient id="i13"><stop offset="0" stop-color="#c2ff03"/><stop offset="0.1373" stop-color="#ceff00"/><stop offset="0.6761" stop-color="#ff0"/><stop offset="1" stop-color="#ffe300"/></linearGradient><linearGradient id="i14"><stop offset="0" stop-color="#c3ff03"/><stop offset="0.1585" stop-color="#d1ff00"/><stop offset="0.6655" stop-color="#ff0"/><stop offset="1" stop-color="#ffe200"/></linearGradient><linearGradient id="i15"><stop offset="0" stop-color="#c3ff03"/><stop offset="0.1761" stop-color="#d3ff00"/><stop offset="0.6549" stop-color="#ff0"/><stop offset="1" stop-color="#ffe100"/></linearGradient><linearGradient id="i16"><stop offset="0" stop-color="#c4ff04"/><stop offset="0.1972" stop-color="#d6ff00"/><stop offset="0.6479" stop-color="#ff0"/><stop offset="1" stop-color="#ffe000"/></linearGradient><linearGradient id="i17"><stop offset="0" stop-color="#c5ff04"/><stop offset="0.2148" stop-color="#d8ff00"/><stop offset="0.6373" stop-color="#ff0"/><stop offset="1" stop-color="#ffe000"/></linearGradient><linearGradient id="i18"><stop offset="0" stop-color="#c6ff05"/><stop offset="0.2359" stop-color="#dbff00"/><stop offset="0.6268" stop-color="#ff0"/><stop offset="1" stop-color="#ffdf00"/></linearGradient><linearGradient id="i19"><stop offset="0" stop-color="#c6ff05"/><stop offset="0.257" stop-color="#df0"/><stop offset="0.6197" stop-color="#ff0"/><stop offset="1" stop-color="#ffde00"/></linearGradient><linearGradient id="i20"><stop offset="0" stop-color="#c7ff05"/><stop offset="0.2746" stop-color="#e0ff00"/><stop offset="0.6092" stop-color="#ff0"/><stop offset="1" stop-color="#fd0"/></linearGradient><linearGradient id="i21"><stop offset="0" stop-color="#c8ff06"/><stop offset="0.2958" stop-color="#e2ff00"/><stop offset="0.5986" stop-color="#ff0"/><stop offset="1" stop-color="#fd0"/></linearGradient><linearGradient id="i22"><stop offset="0" stop-color="#c9ff06"/><stop offset="0.3134" stop-color="#e5ff00"/><stop offset="0.588" stop-color="#ff0"/><stop offset="1" stop-color="#ffdc00"/></linearGradient><linearGradient id="i23"><stop offset="0" stop-color="#c9ff07"/><stop offset="0.3345" stop-color="#e8ff00"/><stop offset="0.581" stop-color="#ff0"/><stop offset="1" stop-color="#ffdb00"/></linearGradient><linearGradient id="i24"><stop offset="0" stop-color="#caff07"/><stop offset="0.3556" stop-color="#ebff00"/><stop offset="0.5704" stop-color="#ff0"/><stop offset="1" stop-color="#ffda00"/></linearGradient><linearGradient id="i25"><stop offset="0" stop-color="#cbff07"/><stop offset="0.3732" stop-color="#edff00"/><stop offset="0.5599" stop-color="#ff0"/><stop offset="1" stop-color="#ffd900"/></linearGradient><linearGradient id="i26"><stop offset="0" stop-color="#ccff08"/><stop offset="0.3944" stop-color="#f0ff00"/><stop offset="0.5528" stop-color="#ff0"/><stop offset="1" stop-color="#ffd900"/></linearGradient><linearGradient id="i27"><stop offset="0" stop-color="#cdff08"/><stop offset="0.5423" stop-color="#ff0"/><stop offset="1" stop-color="#ffd800"/></linearGradient><linearGradient id="i28"><stop offset="0" stop-color="#cdff09"/><stop offset="0.5317" stop-color="#ff0"/><stop offset="1" stop-color="#ffd700"/></linearGradient><linearGradient id="i29"><stop offset="0" stop-color="#ceff09"/><stop offset="0.5246" stop-color="#ff0"/><stop offset="1" stop-color="#ffd600"/></linearGradient><linearGradient id="i30"><stop offset="0" stop-color="#cfff09"/><stop offset="0.5141" stop-color="#ff0"/><stop offset="1" stop-color="#ffd600"/></linearGradient><linearGradient id="i31"><stop offset="0" stop-color="#d0ff0a"/><stop offset="0.5035" stop-color="#ff0"/><stop offset="1" stop-color="#ffd500"/></linearGradient><linearGradient id="i32"><stop offset="0" stop-color="#d0ff0a"/><stop offset="0.4965" stop-color="#ff0"/><stop offset="1" stop-color="#ffd400"/></linearGradient><linearGradient id="i33"><stop offset="0" stop-color="#d1ff0b"/><stop offset="0.4859" stop-color="#ffff01"/><stop offset="1" stop-color="#ffd300"/></linearGradient><linearGradient id="i34"><stop offset="0" stop-color="#d2ff0b"/><stop offset="0.4754" stop-color="#ffff02"/><stop offset="1" stop-color="#ffd300"/></linearGradient><linearGradient id="i35"><stop offset="0" stop-color="#d3ff0b"/><stop offset="0.4683" stop-color="#ffff02"/><stop offset="1" stop-color="#ffd200"/></linearGradient><linearGradient id="i36"><stop offset="0" stop-color="#d4ff0c"/><stop offset="0.4577" stop-color="#ffff03"/><stop offset="0.5915" stop-color="#fff200"/><stop offset="1" stop-color="#ffd100"/></linearGradient><linearGradient id="i37"><stop offset="0" stop-color="#d4ff0c"/><stop offset="0.4472" stop-color="#ffff03"/><stop offset="0.6127" stop-color="#ffef00"/><stop offset="1" stop-color="#ffd000"/></linearGradient><linearGradient id="i38"><stop offset="0" stop-color="#d5ff0d"/><stop offset="0.4366" stop-color="#ffff04"/><stop offset="0.6303" stop-color="#ffed00"/><stop offset="1" stop-color="#ffd000"/></linearGradient><linearGradient id="i39"><stop offset="0" stop-color="#d6ff0d"/><stop offset="0.4296" stop-color="#ffff05"/><stop offset="0.6514" stop-color="#ffea00"/><stop offset="1" stop-color="#ffcf00"/></linearGradient><linearGradient id="i40"><stop offset="0" stop-color="#d7ff0e"/><stop offset="0.419" stop-color="#ffff05"/><stop offset="0.6725" stop-color="#ffe800"/><stop offset="1" stop-color="#ffce00"/></linearGradient><linearGradient id="i41"><stop offset="0" stop-color="#d8ff0e"/><stop offset="0.4085" stop-color="#ffff06"/><stop offset="0.6901" stop-color="#ffe500"/><stop offset="1" stop-color="#ffcd00"/></linearGradient><linearGradient id="i42"><stop offset="0" stop-color="#d8ff0e"/><stop offset="0.4014" stop-color="#ffff06"/><stop offset="0.7113" stop-color="#ffe300"/><stop offset="1" stop-color="#ffcd00"/></linearGradient><linearGradient id="i43"><stop offset="0" stop-color="#d9ff0f"/><stop offset="0.3908" stop-color="#ffff07"/><stop offset="0.7289" stop-color="#ffe000"/><stop offset="1" stop-color="#fc0"/></linearGradient><linearGradient id="i44"><stop offset="0" stop-color="#daff0f"/><stop offset="0.3803" stop-color="#ffff08"/><stop offset="0.75" stop-color="#ffde00"/><stop offset="1" stop-color="#ffcb00"/></linearGradient><linearGradient id="i45"><stop offset="0" stop-color="#dbff10"/><stop offset="0.3732" stop-color="#ffff08"/><stop offset="0.7676" stop-color="#ffdc00"/><stop offset="1" stop-color="#ffca00"/></linearGradient><linearGradient id="i46"><stop offset="0" stop-color="#dcff10"/><stop offset="0.3627" stop-color="#ffff09"/><stop offset="0.7887" stop-color="#ffd900"/><stop offset="1" stop-color="#ffca00"/></linearGradient><linearGradient id="i47"><stop offset="0" stop-color="#df1"/><stop offset="0.3521" stop-color="#ffff0a"/><stop offset="0.8099" stop-color="#ffd700"/><stop offset="1" stop-color="#ffc900"/></linearGradient><linearGradient id="i48"><stop offset="0" stop-color="#deff11"/><stop offset="0.3451" stop-color="#ffff0a"/><stop offset="0.8275" stop-color="#ffd500"/><stop offset="1" stop-color="#ffc800"/></linearGradient><linearGradient id="i49"><stop offset="0" stop-color="#deff12"/><stop offset="0.3345" stop-color="#ffff0b"/><stop offset="0.6514" stop-color="#ffe204"/><stop offset="1" stop-color="#ffc700"/></linearGradient><linearGradient id="i50"><stop offset="0" stop-color="#dfff12"/><stop offset="0.3239" stop-color="#ffff0c"/><stop offset="0.6444" stop-color="#ffe204"/><stop offset="1" stop-color="#ffc700"/></linearGradient><linearGradient id="i51"><stop offset="0" stop-color="#e0ff12"/><stop offset="0.3134" stop-color="#ffff0c"/><stop offset="0.6444" stop-color="#ffe105"/><stop offset="1" stop-color="#ffc600"/></linearGradient><linearGradient id="i52"><stop offset="0" stop-color="#e1ff13"/><stop offset="0.3063" stop-color="#ffff0d"/><stop offset="0.6373" stop-color="#ffe105"/><stop offset="1" stop-color="#ffc500"/></linearGradient><linearGradient id="i53"><stop offset="0" stop-color="#e2ff13"/><stop offset="0.2958" stop-color="#ffff0d"/><stop offset="0.6303" stop-color="#ffe006"/><stop offset="1" stop-color="#ffc500"/></linearGradient><linearGradient id="i54"><stop offset="0" stop-color="#e3ff14"/><stop offset="0.2852" stop-color="#ffff0e"/><stop offset="0.6268" stop-color="#ffe006"/><stop offset="1" stop-color="#ffc400"/></linearGradient><linearGradient id="i55"><stop offset="0" stop-color="#e4ff14"/><stop offset="0.2782" stop-color="#ffff0f"/><stop offset="0.6197" stop-color="#ffe007"/><stop offset="1" stop-color="#ffc300"/></linearGradient><linearGradient id="i56"><stop offset="0" stop-color="#e4ff15"/><stop offset="0.2676" stop-color="#ffff0f"/><stop offset="0.6162" stop-color="#ffdf07"/><stop offset="1" stop-color="#ffc200"/></linearGradient><linearGradient id="i57"><stop offset="0" stop-color="#e5ff15"/><stop offset="0.257" stop-color="#ffff10"/><stop offset="0.6092" stop-color="#ffdf08"/><stop offset="1" stop-color="#ffc200"/></linearGradient><linearGradient id="i58"><stop offset="0" stop-color="#e6ff16"/><stop offset="0.25" stop-color="#ff1"/><stop offset="0.6056" stop-color="#ffde08"/><stop offset="1" stop-color="#ffc100"/></linearGradient><linearGradient id="i59"><stop offset="0" stop-color="#e7ff16"/><stop offset="0.2394" stop-color="#ff1"/><stop offset="0.5986" stop-color="#ffde09"/><stop offset="1" stop-color="#ffc001"/></linearGradient><linearGradient id="i60"><stop offset="0" stop-color="#e8ff17"/><stop offset="0.2289" stop-color="#ffff12"/><stop offset="0.5951" stop-color="#ffdd09"/><stop offset="1" stop-color="#ffc001"/></linearGradient><linearGradient id="i61"><stop offset="0" stop-color="#e9ff17"/><stop offset="0.2218" stop-color="#ffff13"/><stop offset="0.588" stop-color="#ffdd0a"/><stop offset="1" stop-color="#ffbf01"/></linearGradient><linearGradient id="i62"><stop offset="0" stop-color="#eaff18"/><stop offset="0.2113" stop-color="#ffff13"/><stop offset="0.5845" stop-color="#ffdd0a"/><stop offset="1" stop-color="#ffbe02"/></linearGradient><linearGradient id="i63"><stop offset="0" stop-color="#ebff18"/><stop offset="0.2042" stop-color="#ffff14"/><stop offset="0.581" stop-color="#ffdc0a"/><stop offset="1" stop-color="#ffbe02"/></linearGradient></defs><rect x="2251" y="753" width="284" height="3" fill="url(#i0)"/><rect x="2251" y="756" width="284" height="3" fill="url(#i1)"/><rect x="2251" y="759" width="284" height="3" fill="url(#i2)"/><rect x="2251" y="762" width="284" height="3" fill="url(#i3)"/><rect x="2251" y="765" width="284" height="3" fill="url(#i4)"/><rect x="2251" y="768" width="284" height="3" fill="url(#i5)"/><rect x="2251" y="771" width="284" height="3" fill="url(#i6)"/><rect x="2251" y="774" width="284" height="3" fill="url(#i7)"/><rect x="2251" y="777" width="284" height="3" fill="url(#i8)"/><rect x="2251" y="780" width="284" height="3" fill="url(#i9)"/><rect x="2251" y="783" width="284" height="3" fill="url(#i10)"/><rect x="2251" y="786" width="284" height="3" fill="url(#i11)"/><rect x="2251" y="789" width="284" height="3" fill="url(#i12)"/><rect x="2251" y="792" width="284" height="3" fill="url(#i13)"/><rect x="2251" y="795" width="284" height="3" fill="url(#i14)"/><rect x="2251" y="798" width="284" height="3" fill="url(#i15)"/><rect x="2251" y="801" width="284" height="3" fill="url(#i16)"/><rect x="2251" y="804" width="284" height="3" fill="url(#i17)"/><rect x="2251" y="807" width="284" height="3" fill="url(#i18)"/><rect x="2251" y="810" width="284" height="3" fill="url(#i19)"/><rect x="2251" y="813" width="284" height="3" fill="url(#i20)"/><rect x="2251" y="816" width="284" height="3" fill="url(#i21)"/><rect x="2251" y="819" width="284" height="3" fill="url(#i22)"/><rect x="2251" y="822" width="284" height="3" fill="url(#i23)"/><rect x="2251" y="825" width="284" height="3" fill="url(#i24)"/><rect x="2251" y="828" width="284" height="3" fill="url(#i25)"/><rect x="2251" y="831" width="284" height="3" fill="url(#i26)"/><rect x="2251" y="834" width="284" height="3" fill="url(#i27)"/><rect x="2251" y="837" width="284" height="3" fill="url(#i28)"/><rect x="2251" y="840" width="284" height="3" fill="url(#i29)"/><rect x="2251" y="843" width="284" height="3" fill="url(#i30)"/><rect x="2251" y="846" width="284" height="3" fill="url(#i31)"/><rect x="2251" y="849" width="284" height="3" fill="url(#i32)"/><rect x="2251" y="852" width="284" height="3" fill="url(#i33)"/><rect x="2251" y="855" width="284" height="3" fill="url(#i34)"/><rect x="2251" y="858" width="284" height="3" fill="url(#i35)"/><rect x="2251" y="861" width="284" height="3" fill="url(#i36)"/><rect x="2251" y="864" width="284" height="3" fill="url(#i37)"/><rect x="2251" y="867" width="284" height="3" fill="url(#i38)"/><rect x="2251" y="870" width="284" height="3" fill="url(#i39)"/><rect x="2251" y="873" width="284" height="3" fill="url(#i40)"/><rect x="2251" y="876" width="284" height="3" fill="url(#i41)"/><rect x="2251" y="879" width="284" height="3" fill="url(#i42)"/><rect x="2251" y="882" width="284" height="3" fill="url(#i43)"/><rect x="2251" y="885" width="284" height="3" fill="url(#i44)"/><rect x="2251" y="888" width="284" height="3" fill="url(#i45)"/><rect x="2251" y="891" width="284" height="3" fill="url(#i46)"/><rect x="2251" y="894" width="284" height="3" fill="url(#i47)"/><rect x="2251" y="897" width="284" height="3" fill="url(#i48)"/><rect x="2251" y="900" width="284" height="3" fill="url(#i49)"/><rect x="2251" y="903" width="284" height="3" fill="url(#i50)"/><rect x="2251" y="906" width="284" height="3" fill="url(#i51)"/><rect x="2251" y="909" width="284" height="3" fill="url(#i52)"/><rect x="2251" y="912" width="284" height="3" fill="url(#i53)"/><rect x="2251" y="915" width="284" height="3" fill="url(#i54)"/><rect x="2251" y="918" width="284" height="3" fill="url(#i55)"/><rect x="2251" y="921" width="284" height="3" fill="url(#i56)"/><rect x="2251" y="924" width="284" height="3" fill="url(#i57)"/><rect x="2251" y="927" width="284" height="3" fill="url(#i58)"/><rect x="2251" y="930" width="284" height="3" fill="url(#i59)"/><rect x="2251" y="933" width="284" height="3" fill="url(#i60)"/><rect x="2251" y="936" width="284" height="3" fill="url(#i61)"/><rect x="2251" y="939" width="284" height="3" fill="url(#i62)"/><rect x="2251" y="942" width="284" height="2" fill="url(#i63)"/><polygon points="2251,772.7 2535,924.3 2535,753 2251,753" fill="#000" fill-opacity=".41"/><rect x="2250" y="752" width="285.5" height="193" fill="none" stroke="#9a9a9a" stroke-width="2"/><rect x="2383" y="838.5" width="18" height="18" fill="#ff0" fill-opacity=".3" stroke="#fff" stroke-width="2"/><circle cx="2389.7" cy="836.4" r="5.6" fill="#c3c300" stroke="#000" stroke-width="1.6"/></svg>
<span class="t" style="left:2031.9px;top:268.0px;font-size:19px;color:#ccc;transform:scaleX(1.016);">CIE 1976 u'v'</span>
<span class="t" style="left:1659.4px;top:948.9px;font-size:19px;color:#ccc;">0</span>
<span class="t" style="left:1633.0px;top:893.4px;font-size:19px;color:#ccc;">0.05</span>
<span class="t" style="left:1643.6px;top:837.9px;font-size:19px;color:#ccc;">0.1</span>
<span class="t" style="left:1633.0px;top:782.4px;font-size:19px;color:#ccc;">0.15</span>
<span class="t" style="left:1643.6px;top:726.9px;font-size:19px;color:#ccc;">0.2</span>
<span class="t" style="left:1633.0px;top:671.4px;font-size:19px;color:#ccc;">0.25</span>
<span class="t" style="left:1643.6px;top:615.9px;font-size:19px;color:#ccc;">0.3</span>
<span class="t" style="left:1633.0px;top:560.4px;font-size:19px;color:#ccc;">0.35</span>
<span class="t" style="left:1643.6px;top:504.9px;font-size:19px;color:#ccc;">0.4</span>
<span class="t" style="left:1633.0px;top:449.4px;font-size:19px;color:#ccc;">0.45</span>
<span class="t" style="left:1643.6px;top:393.9px;font-size:19px;color:#ccc;">0.5</span>
<span class="t" style="left:1633.0px;top:338.4px;font-size:19px;color:#ccc;">0.55</span>
<span class="t" style="left:1673.2px;top:969.4px;font-size:19px;color:#ccc;">0</span>
<span class="t" style="left:1732.2px;top:969.4px;font-size:19px;color:#ccc;">0.05</span>
<span class="t" style="left:1809.7px;top:969.4px;font-size:19px;color:#ccc;">0.1</span>
<span class="t" style="left:1876.6px;top:969.4px;font-size:19px;color:#ccc;">0.15</span>
<span class="t" style="left:1954.1px;top:969.4px;font-size:19px;color:#ccc;">0.2</span>
<span class="t" style="left:2021.0px;top:969.4px;font-size:19px;color:#ccc;">0.25</span>
<span class="t" style="left:2098.5px;top:969.4px;font-size:19px;color:#ccc;">0.3</span>
<span class="t" style="left:2165.4px;top:969.4px;font-size:19px;color:#ccc;">0.35</span>
<span class="t" style="left:2242.9px;top:969.4px;font-size:19px;color:#ccc;">0.4</span>
<span class="t" style="left:2309.8px;top:969.4px;font-size:19px;color:#ccc;">0.45</span>
<span class="t" style="left:2387.3px;top:969.4px;font-size:19px;color:#ccc;">0.5</span>
<span class="t" style="left:2454.2px;top:969.4px;font-size:19px;color:#ccc;">0.55</span>
<span class="t" style="left:369.2px;top:1016.1px;font-size:37px;color:#f4f4f4;transform:scaleX(1.074);">Avg dE2000: 2.98</span>
<span class="t" style="left:352.3px;top:1070.1px;font-size:37px;color:#f4f4f4;transform:scaleX(1.089);">Max dE2000: 17.21</span>
<span class="t" style="left:320.9px;top:1135.0px;font-size:37px;color:#f4f4f4;transform:scaleX(1.086);">Current Reading</span>
<span class="t" style="left:320.9px;top:1188.4px;font-size:31px;color:#f4f4f4;transform:scaleX(1.080);">x: 0.4189</span>
<span class="t" style="left:532.4px;top:1188.4px;font-size:31px;color:#f4f4f4;transform:scaleX(1.092);">y: 0.508</span>
<span class="t" style="left:320.9px;top:1243.4px;font-size:31px;color:#f4f4f4;transform:scaleX(1.072);">fL: 48.97</span>
<span class="t" style="left:320.9px;top:1289.7px;font-size:31px;color:#f4f4f4;transform:scaleX(1.133);">cd/m²: 167.78</span>
<div class="a" style="left:1148.5px;top:1013.5px;width:990px;height:322px;background:#1a1a1a;"></div>
<div class="a" style="left:1150px;top:1015px;width:987px;height:39px;background:linear-gradient(#2c2c2c 0,#2a2a2a 48%,#181818 52%,#101010);"></div>
<span class="t" style="left:1460.0px;top:1026.7px;font-size:20px;color:#fff;transform:scaleX(1.330);">20%</span>
<span class="t" style="left:1604.0px;top:1026.7px;font-size:20px;color:#fff;transform:scaleX(1.330);">40%</span>
<span class="t" style="left:1748.4px;top:1026.7px;font-size:20px;color:#fff;transform:scaleX(1.330);">60%</span>
<span class="t" style="left:1892.6px;top:1026.7px;font-size:20px;color:#fff;transform:scaleX(1.330);">80%</span>
<span class="t" style="left:2029.3px;top:1026.7px;font-size:20px;color:#fff;transform:scaleX(1.330);">100%</span>
<div class="a" style="left:1150px;top:1054px;width:987px;height:35px;background:linear-gradient(90deg,#383838,#444);"></div>
<span class="t" style="left:1176.5px;top:1061.1px;font-size:22.5px;color:#fff;font-weight:bold;transform:scaleX(1.306);">x: CIE31</span>
<span class="t" style="left:1423.0px;top:1061.1px;font-size:22.5px;color:#fff;transform:scaleX(1.328);">0.3312</span>
<span class="t" style="left:1567.0px;top:1061.1px;font-size:22.5px;color:#fff;transform:scaleX(1.328);">0.3537</span>
<span class="t" style="left:1711.4px;top:1061.1px;font-size:22.5px;color:#fff;transform:scaleX(1.328);">0.3751</span>
<span class="t" style="left:1855.6px;top:1061.1px;font-size:22.5px;color:#fff;transform:scaleX(1.328);">0.3944</span>
<span class="t" style="left:1999.7px;top:1061.1px;font-size:22.5px;color:#fff;transform:scaleX(1.328);">0.4189</span>
<div class="a" style="left:1150px;top:1089px;width:987px;height:35px;background:linear-gradient(90deg,#7c7c7c,#888);"></div>
<span class="t" style="left:1176.5px;top:1096.1px;font-size:22.5px;color:#e8e8e8;font-weight:bold;transform:scaleX(1.306);">y: CIE31</span>
<span class="t" style="left:1423.0px;top:1096.1px;font-size:22.5px;color:#e8e8e8;transform:scaleX(1.328);">0.3641</span>
<span class="t" style="left:1567.0px;top:1096.1px;font-size:22.5px;color:#e8e8e8;transform:scaleX(1.328);">0.4005</span>
<span class="t" style="left:1711.4px;top:1096.1px;font-size:22.5px;color:#e8e8e8;transform:scaleX(1.328);">0.4365</span>
<span class="t" style="left:1855.6px;top:1096.1px;font-size:22.5px;color:#e8e8e8;transform:scaleX(1.328);">0.4681</span>
<span class="t" style="left:1999.7px;top:1096.1px;font-size:22.5px;color:#e8e8e8;transform:scaleX(1.328);">0.5080</span>
<div class="a" style="left:1150px;top:1124px;width:987px;height:35px;background:linear-gradient(90deg,#383838,#444);"></div>
<span class="t" style="left:1176.5px;top:1131.1px;font-size:22.5px;color:#fff;font-weight:bold;transform:scaleX(1.266);">Y</span>
<span class="t" style="left:1423.0px;top:1131.1px;font-size:22.5px;color:#fff;transform:scaleX(1.343);">178.4259</span>
<span class="t" style="left:1567.0px;top:1131.1px;font-size:22.5px;color:#fff;transform:scaleX(1.343);">175.5360</span>
<span class="t" style="left:1711.4px;top:1131.1px;font-size:22.5px;color:#fff;transform:scaleX(1.343);">172.6274</span>
<span class="t" style="left:1855.6px;top:1131.1px;font-size:22.5px;color:#fff;transform:scaleX(1.343);">170.3948</span>
<span class="t" style="left:1999.7px;top:1131.1px;font-size:22.5px;color:#fff;transform:scaleX(1.343);">167.7842</span>
<div class="a" style="left:1150px;top:1159px;width:987px;height:35px;background:linear-gradient(90deg,#7c7c7c,#888);"></div>
<span class="t" style="left:1176.5px;top:1166.1px;font-size:22.5px;color:#e8e8e8;font-weight:bold;transform:scaleX(1.360);">Target x:CIE31</span>
<span class="t" style="left:1423.0px;top:1166.1px;font-size:22.5px;color:#e8e8e8;transform:scaleX(1.328);">0.3344</span>
<span class="t" style="left:1567.0px;top:1166.1px;font-size:22.5px;color:#e8e8e8;transform:scaleX(1.328);">0.3564</span>
<span class="t" style="left:1711.4px;top:1166.1px;font-size:22.5px;color:#e8e8e8;transform:scaleX(1.328);">0.3773</span>
<span class="t" style="left:1855.6px;top:1166.1px;font-size:22.5px;color:#e8e8e8;transform:scaleX(1.328);">0.3969</span>
<span class="t" style="left:1999.7px;top:1166.1px;font-size:22.5px;color:#e8e8e8;transform:scaleX(1.328);">0.4193</span>
<div class="a" style="left:1150px;top:1194px;width:987px;height:35px;background:linear-gradient(90deg,#383838,#444);"></div>
<span class="t" style="left:1176.5px;top:1201.1px;font-size:22.5px;color:#fff;font-weight:bold;transform:scaleX(1.360);">Target y:CIE31</span>
<span class="t" style="left:1423.0px;top:1201.1px;font-size:22.5px;color:#fff;transform:scaleX(1.328);">0.3648</span>
<span class="t" style="left:1567.0px;top:1201.1px;font-size:22.5px;color:#fff;transform:scaleX(1.328);">0.4013</span>
<span class="t" style="left:1711.4px;top:1201.1px;font-size:22.5px;color:#fff;transform:scaleX(1.328);">0.4358</span>
<span class="t" style="left:1855.6px;top:1201.1px;font-size:22.5px;color:#fff;transform:scaleX(1.328);">0.4682</span>
<span class="t" style="left:1999.7px;top:1201.1px;font-size:22.5px;color:#fff;transform:scaleX(1.328);">0.5053</span>
<div class="a" style="left:1150px;top:1229px;width:987px;height:35px;background:linear-gradient(90deg,#7c7c7c,#888);"></div>
<span class="t" style="left:1176.5px;top:1236.1px;font-size:22.5px;color:#e8e8e8;font-weight:bold;transform:scaleX(1.399);">Target Y</span>
<span class="t" style="left:1423.0px;top:1236.1px;font-size:22.5px;color:#e8e8e8;transform:scaleX(1.343);">179.2438</span>
<span class="t" style="left:1567.0px;top:1236.1px;font-size:22.5px;color:#e8e8e8;transform:scaleX(1.343);">176.0975</span>
<span class="t" style="left:1711.4px;top:1236.1px;font-size:22.5px;color:#e8e8e8;transform:scaleX(1.343);">173.6801</span>
<span class="t" style="left:1855.6px;top:1236.1px;font-size:22.5px;color:#e8e8e8;transform:scaleX(1.343);">171.7828</span>
<span class="t" style="left:1999.7px;top:1236.1px;font-size:22.5px;color:#e8e8e8;transform:scaleX(1.343);">169.9487</span>
<div class="a" style="left:1150px;top:1264px;width:987px;height:35px;background:linear-gradient(90deg,#383838,#444);"></div>
<span class="t" style="left:1176.5px;top:1271.1px;font-size:22.5px;color:#fff;font-weight:bold;transform:scaleX(1.383);">ΔE 2000</span>
<span class="t" style="left:1423.0px;top:1271.1px;font-size:22.5px;color:#fff;transform:scaleX(1.328);">1.2442</span>
<span class="t" style="left:1567.0px;top:1271.1px;font-size:22.5px;color:#fff;transform:scaleX(1.328);">0.7275</span>
<span class="t" style="left:1711.4px;top:1271.1px;font-size:22.5px;color:#fff;transform:scaleX(1.328);">0.6433</span>
<span class="t" style="left:1855.6px;top:1271.1px;font-size:22.5px;color:#fff;transform:scaleX(1.328);">0.5894</span>
<span class="t" style="left:1999.7px;top:1271.1px;font-size:22.5px;color:#fff;transform:scaleX(1.328);">0.4472</span>
<div class="a" style="left:1150px;top:1299px;width:987px;height:35px;background:linear-gradient(90deg,#7c7c7c,#888);"></div>
<span class="t" style="left:1176.5px;top:1306.1px;font-size:22.5px;color:#e8e8e8;font-weight:bold;transform:scaleX(1.339);">ΔE ITP</span>
<span class="t" style="left:1423.0px;top:1306.1px;font-size:22.5px;color:#e8e8e8;transform:scaleX(1.328);">1.8663</span>
<span class="t" style="left:1567.0px;top:1306.1px;font-size:22.5px;color:#e8e8e8;transform:scaleX(1.328);">1.5240</span>
<span class="t" style="left:1711.4px;top:1306.1px;font-size:22.5px;color:#e8e8e8;transform:scaleX(1.328);">1.3891</span>
<span class="t" style="left:1855.6px;top:1306.1px;font-size:22.5px;color:#e8e8e8;transform:scaleX(1.328);">1.5358</span>
<span class="t" style="left:1999.7px;top:1306.1px;font-size:22.5px;color:#e8e8e8;transform:scaleX(1.328);">1.7778</span>
<div class="a" style="left:301.6px;top:1434.6px;width:1774px;height:93.4px;background:linear-gradient(#4a4a4a,#2f2f2f 55%,#222);"></div>
<div class="a" style="left:301.6px;top:1435px;width:67.2px;height:90.6px;background:linear-gradient(#a6a6a6,#888 45%,#606060);border-radius:6px;"></div>
<div class="a" style="left:324px;top:1438.1px;width:22.6px;height:22.6px;background:linear-gradient(#5c5c5c,#9c9c9c);border-radius:50%;"></div>
<svg class="a" style="left:328.7px;top:1444.5px" width="13" height="7"><path d="M0 7H13L6.5 0Z" fill="#222"/></svg>
<div class="a" style="left:309.1px;top:1474px;width:52.8px;height:45.4px;background:#ffff00;border-radius:5px;box-shadow:inset 1.5px 1.5px 0 #d0d000;"></div>
<div class="a" style="left:378px;top:1435px;width:224.6px;height:90.6px;background:linear-gradient(#a8a8a8,#8c8c8c 40%,#5e5e5e);border-radius:6px;"></div>
<div class="a" style="left:385.6px;top:1442.1px;width:210px;height:54.7px;background:#bebfa6;border-radius:5px;box-shadow:inset 1.5px 1.5px 1px rgba(90,90,30,.55);"></div>
<span class="t" style="left:474.8px;top:1506.6px;font-size:16.3px;color:#303030;font-weight:bold;transform:scaleX(0.962);">20%</span>
<div class="a" style="left:606px;top:1435px;width:224.6px;height:90.6px;background:linear-gradient(#a8a8a8,#8c8c8c 40%,#5e5e5e);border-radius:6px;"></div>
<div class="a" style="left:613.6px;top:1442.1px;width:210px;height:54.7px;background:#bebf88;border-radius:5px;box-shadow:inset 1.5px 1.5px 1px rgba(90,90,30,.55);"></div>
<span class="t" style="left:702.8px;top:1506.6px;font-size:16.3px;color:#303030;font-weight:bold;transform:scaleX(0.962);">40%</span>
<div class="a" style="left:834px;top:1435px;width:224.6px;height:90.6px;background:linear-gradient(#a8a8a8,#8c8c8c 40%,#5e5e5e);border-radius:6px;"></div>
<div class="a" style="left:841.6px;top:1442.1px;width:210px;height:54.7px;background:#bebe6c;border-radius:5px;box-shadow:inset 1.5px 1.5px 1px rgba(90,90,30,.55);"></div>
<span class="t" style="left:930.8px;top:1506.6px;font-size:16.3px;color:#303030;font-weight:bold;transform:scaleX(0.962);">60%</span>
<div class="a" style="left:1062px;top:1435px;width:224.6px;height:90.6px;background:linear-gradient(#a8a8a8,#8c8c8c 40%,#5e5e5e);border-radius:6px;"></div>
<div class="a" style="left:1069.6px;top:1442.1px;width:210px;height:54.7px;background:#bebf4c;border-radius:5px;box-shadow:inset 1.5px 1.5px 1px rgba(90,90,30,.55);"></div>
<span class="t" style="left:1158.8px;top:1506.6px;font-size:16.3px;color:#303030;font-weight:bold;transform:scaleX(0.962);">80%</span>
<div class="a" style="left:1290px;top:1435px;width:224.6px;height:90.6px;background:linear-gradient(#1d1d1d,#2a2a2a 60%,#333);border-radius:6px;"></div>
<div class="a" style="left:1297.6px;top:1442.1px;width:210px;height:54.7px;background:#c0c000;border-radius:5px;box-shadow:inset 1.5px 1.5px 1px rgba(90,90,30,.55);"></div>
<span class="t" style="left:1382.6px;top:1506.6px;font-size:16.3px;color:#fff;font-weight:bold;transform:scaleX(0.955);">100%</span>
<div class="a" style="left:2028px;top:1434.6px;width:47.5px;height:93.4px;background:linear-gradient(90deg,rgba(26,26,26,0),rgba(26,26,26,.92));"></div>
<div class="a" style="left:2075.4px;top:1435px;width:72.1px;height:91.3px;background:linear-gradient(#a0a0a0,#888 40%,#666);border-radius:7px;"></div>
<div class="a" style="left:2075.4px;top:1461.8px;width:72.1px;height:1.5px;background:#4a4a4a;"></div>
<div class="a" style="left:2100.2px;top:1437.2px;width:23px;height:23px;background:linear-gradient(#6a6a6a,#9a9a9a);border-radius:50%;"></div>
<svg class="a" style="left:2105.3px;top:1445px" width="13" height="7"><path d="M0 7H13L6.5 0Z" fill="#222"/></svg>
<div class="a" style="left:2087.8px;top:1471.2px;width:47px;height:47px;background:linear-gradient(#b4b4b4 50%,#8c8c8c 50%);border:3.5px solid #1a1a1a;border-radius:9px;box-sizing:border-box;"></div>
<div class="a" style="left:2101px;top:1484.5px;width:21.3px;height:21px;background:linear-gradient(#181818 50%,#000 50%);"></div>
<div class="a" style="left:2149px;top:1435px;width:411px;height:45px;background:linear-gradient(#b2b2b2,#9a9a9a 50%,#7a7a7a);border-radius:6px 6px 0 0;"></div>
<div class="a" style="left:2217.3px;top:1435px;width:1.5px;height:45px;background:#4a4a4a;"></div>
<div class="a" style="left:2286px;top:1435px;width:1.5px;height:45px;background:#4a4a4a;"></div>
<div class="a" style="left:2352.3px;top:1435px;width:1.5px;height:45px;background:#4a4a4a;"></div>
<div class="a" style="left:2420.9px;top:1435px;width:1.5px;height:45px;background:#4a4a4a;"></div>
<div class="a" style="left:2487.3px;top:1435px;width:1.5px;height:45px;background:#4a4a4a;"></div>
<div class="a" style="left:2169.5px;top:1442px;width:27px;height:27px;background:linear-gradient(#707070,#a0a0a0);border-radius:50%;"></div>
<div class="a" style="left:2238.8px;top:1442px;width:27px;height:27px;background:linear-gradient(#707070,#a0a0a0);border-radius:50%;"></div>
<div class="a" style="left:2306.4px;top:1442px;width:27px;height:27px;background:linear-gradient(#707070,#a0a0a0);border-radius:50%;"></div>
<div class="a" style="left:2373.9px;top:1442px;width:27px;height:27px;background:linear-gradient(#707070,#a0a0a0);border-radius:50%;"></div>
<div class="a" style="left:2441.5px;top:1442px;width:27px;height:27px;background:linear-gradient(#707070,#a0a0a0);border-radius:50%;"></div>
<div class="a" style="left:2509.9px;top:1442px;width:27px;height:27px;background:linear-gradient(#707070,#a0a0a0);border-radius:50%;"></div>
<svg class="a" style="left:2160px;top:1435px" width="400" height="45" viewBox="2160 1435 400 45" fill="none" stroke="#222" stroke-width="2"><rect x="2180" y="1451" width="8" height="8" fill="#111" stroke="none"/><path d="M2248.5 1449.5L2258.5 1455.5L2248.5 1461.5Z" fill="#222" stroke="none"/><path d="M2316 1449.5H2313.5V1461.5H2316M2324 1449.5H2326.5V1461.5H2324" /><path d="M2387.4 1455.5C2384 1450 2379.5 1451.5 2379.5 1455.5S2384 1461 2387.4 1455.5S2395.3 1451.5 2395.3 1455.5S2390.8 1461 2387.4 1455.5Z"/><path d="M2460.5 1453A6 6 0 1 0 2461 1458M2461.5 1448.5V1453.5H2456.5"/></svg>
<div class="a" style="left:2149px;top:1480.7px;width:203.4px;height:44.8px;background:linear-gradient(#aeaeae,#8a8a8a);border-radius:7px 7px 0 0;"></div>
<div class="a" style="left:2353.6px;top:1480.7px;width:206.4px;height:44.8px;background:linear-gradient(#aeaeae,#8a8a8a);border-radius:7px 0 0 0;"></div>
<div class="a" style="left:2040px;top:1525.5px;width:520px;height:2.5px;background:#282828;"></div>
<div class="a" style="left:2180.5px;top:1490.8px;width:27px;height:27px;background:linear-gradient(#707070,#a0a0a0);border-radius:50%;"></div>
<div class="a" style="left:2502.3px;top:1490.8px;width:27px;height:27px;background:linear-gradient(#707070,#a0a0a0);border-radius:50%;"></div>
<span class="t" style="left:2235.4px;top:1489.1px;font-size:31px;color:#2a2a2a;transform:scaleX(1.091);">Back</span>
<span class="t" style="left:2396.7px;top:1489.1px;font-size:31px;color:#2a2a2a;transform:scaleX(1.192);">Next</span>
<span class="t" style="left:2508.5px;top:1490.6px;font-size:27px;color:#2a2a2a;">»</span>
<span class="t" style="left:2186.5px;top:1490.6px;font-size:27px;color:#2a2a2a;">«</span>
<svg class="a" style="left:2160px;top:1435px" width="400" height="93" viewBox="2160 1435 400 93" fill="none" stroke-linejoin="round" stroke-linecap="round"><g opacity=".8"><path d="M2228.7 1484L2225.3 1457.9L2174.6 1446L2177.2 1495L2208.4 1511.9L2264.1 1494.2L2232 1488.3M2228.7 1484L2188.1 1490" stroke="#000" stroke-opacity=".35" stroke-width="6" transform="translate(1.5 2)"/><path d="M2228.7 1484L2225.3 1457.9L2174.6 1446L2177.2 1495L2208.4 1511.9L2264.1 1494.2L2232 1488.3M2228.7 1484L2188.1 1490" stroke="#f4f4f4" stroke-width="6.4"/><path d="M2228.7 1484L2225.3 1457.9L2174.6 1446L2177.2 1495L2208.4 1511.9L2264.1 1494.2L2232 1488.3M2228.7 1484L2188.1 1490" stroke="#ac3841" stroke-width="3.6"/><path d="M2194 1463L2205 1479L2232 1446" stroke="#f4f4f4" stroke-width="8.5" stroke-linecap="butt" stroke-linejoin="miter"/><path d="M2194 1463L2205 1479L2232 1446" stroke="#3a3a3a" stroke-width="5.5" stroke-linecap="butt" stroke-linejoin="miter"/></g></svg>
<span class="t" style="left:2233.7px;top:1454.0px;font-size:35.4px;color:#f2f2f2;font-weight:bold;transform:scaleX(0.966);-webkit-text-stroke:5px #f2f2f2;opacity:.8;text-shadow:1.5px 2.5px 2.5px rgba(0,0,0,.55);">NOTEBOOK</span>
<span class="t" style="left:2233.7px;top:1454.0px;font-size:35.4px;color:#922a34;font-weight:bold;transform:scaleX(0.966);-webkit-text-stroke:1.6px #922a34;opacity:.78;">NOTEBOOK</span>
<span class="t" style="left:2433.0px;top:1454.0px;font-size:35.4px;color:#f2f2f2;transform:scaleX(0.941);-webkit-text-stroke:3.8px #f2f2f2;opacity:.8;text-shadow:1.5px 2.5px 2.5px rgba(0,0,0,.55);">CHECK</span>
<span class="t" style="left:2433.0px;top:1454.0px;font-size:35.4px;color:#3c3c3c;transform:scaleX(0.941);-webkit-text-stroke:.7px #3c3c3c;opacity:.8;">CHECK</span>
<div class="a" style="left:2552.5px;top:132px;width:7.5px;height:1396px;background:linear-gradient(90deg,rgba(14,14,14,0),rgba(14,14,14,.85) 60%,#0e0e0e);"></div>
</body></html>
